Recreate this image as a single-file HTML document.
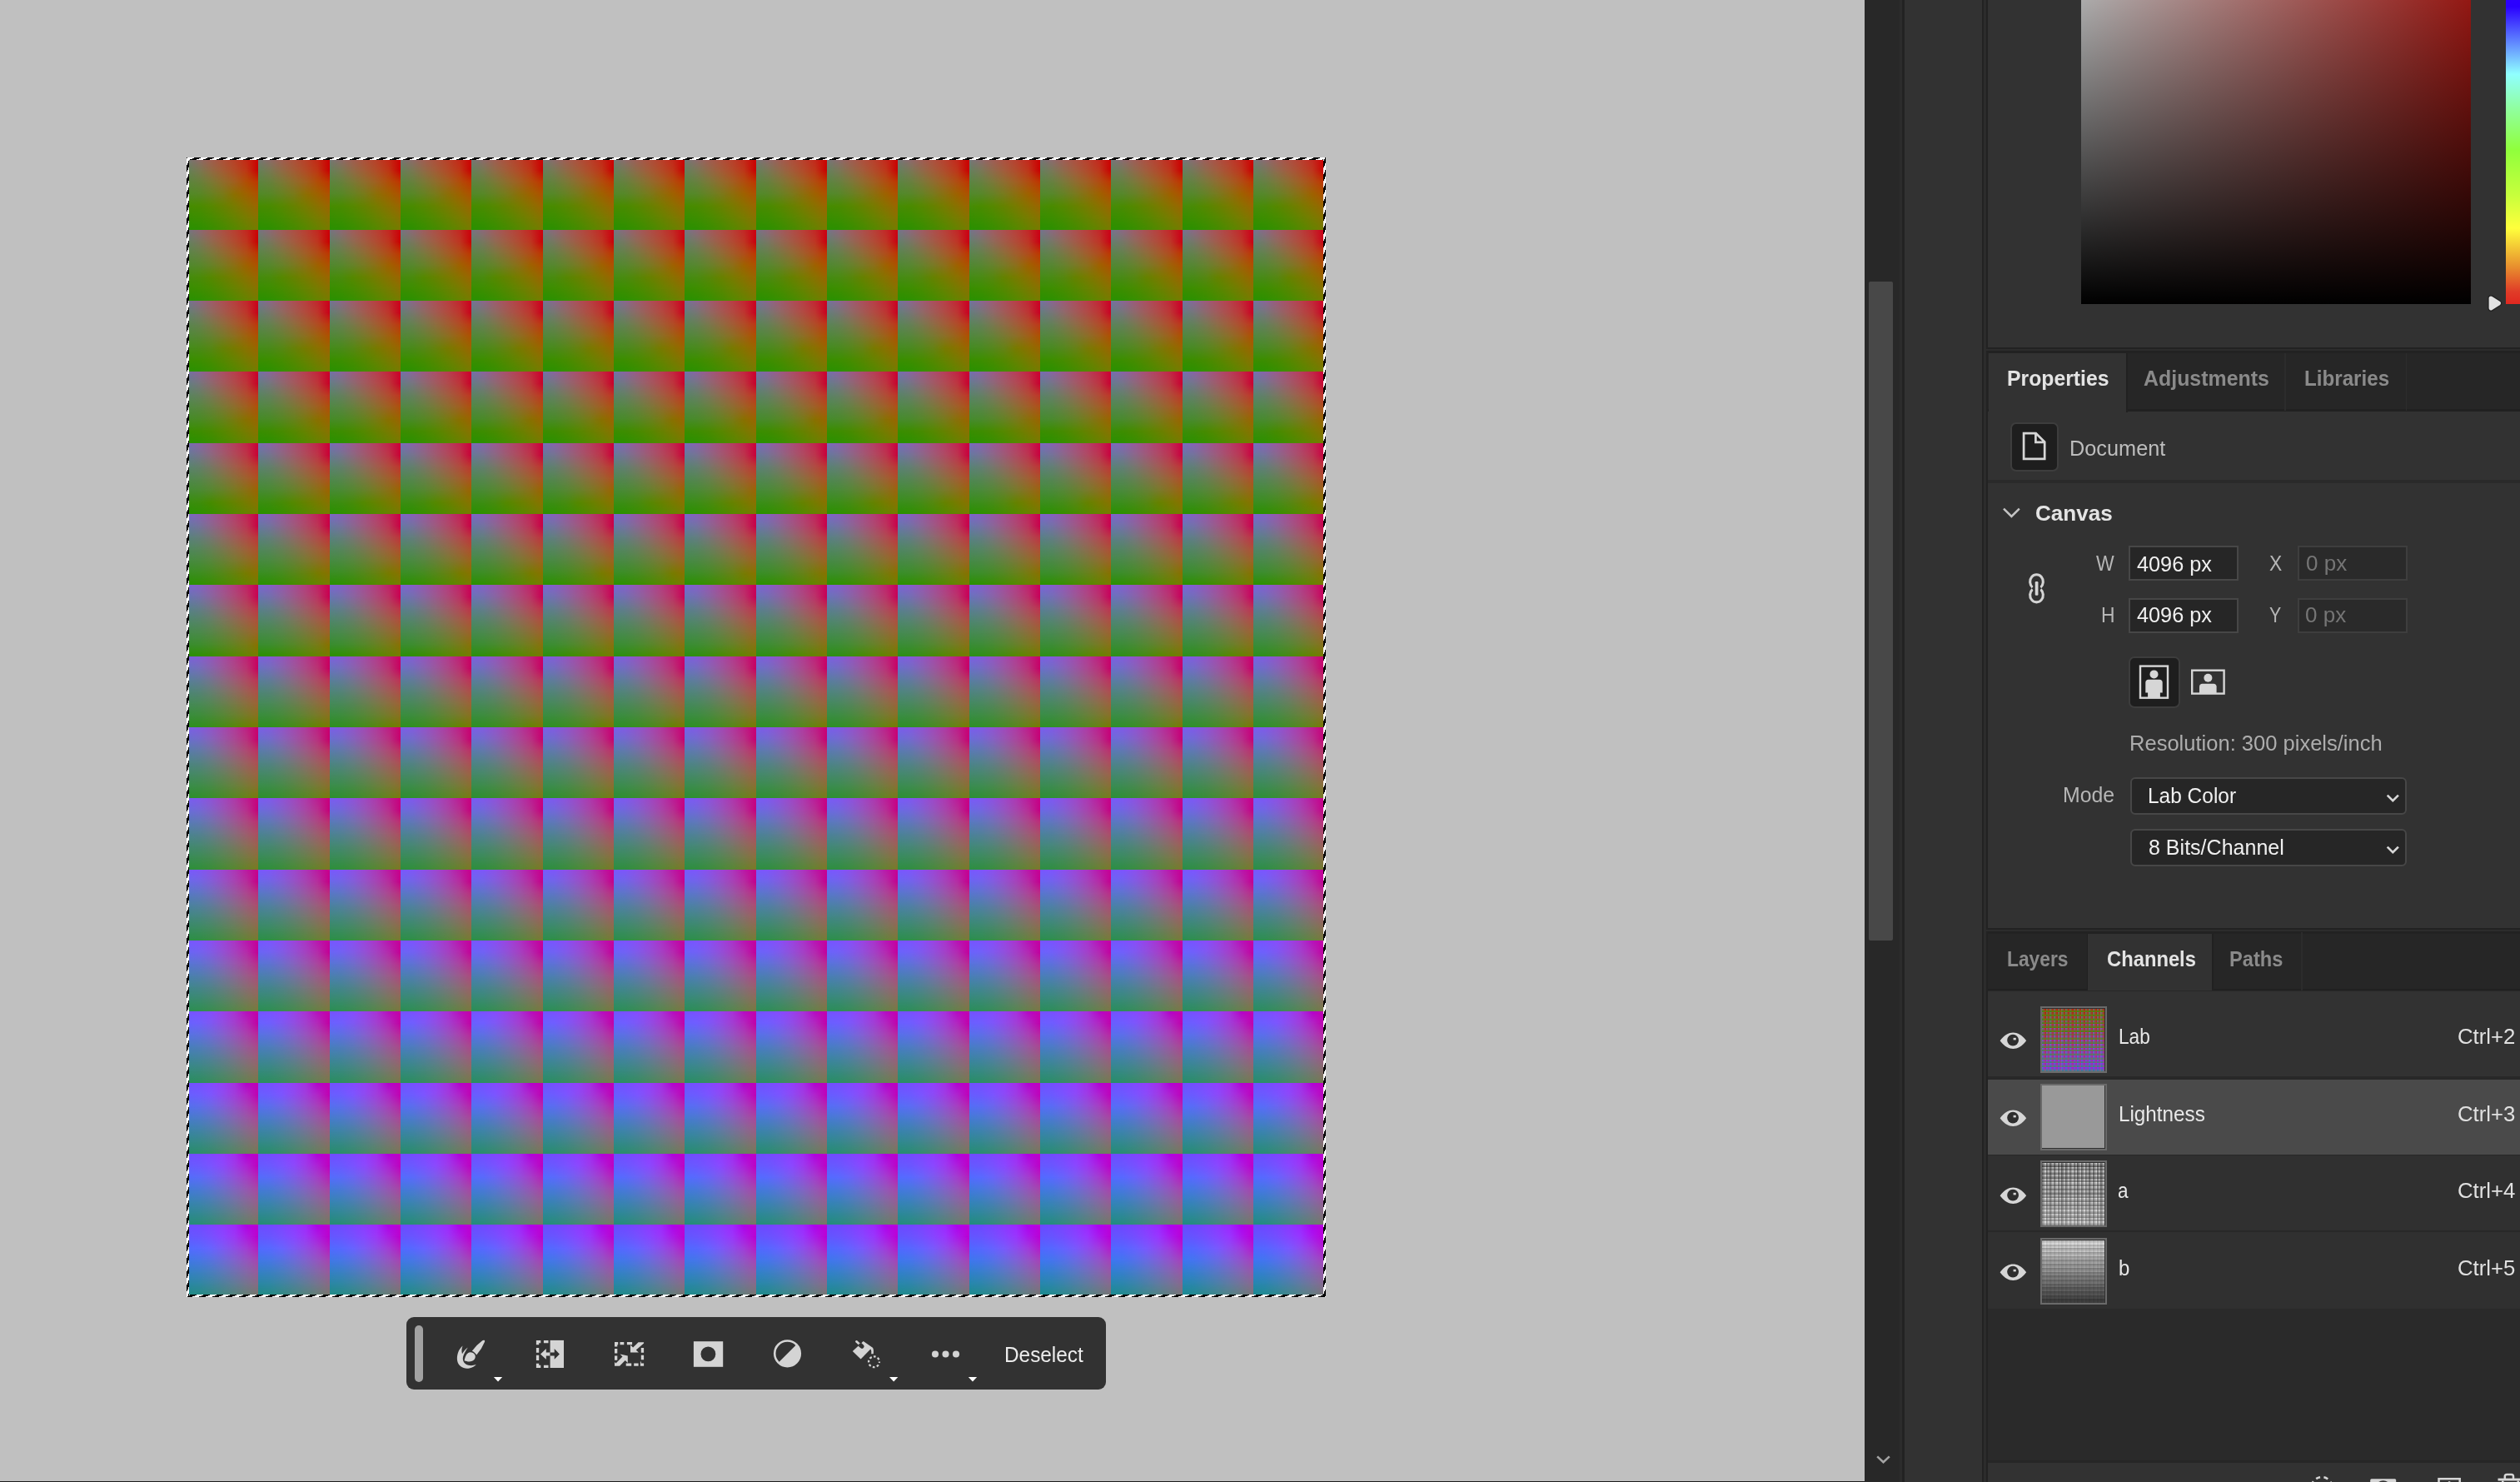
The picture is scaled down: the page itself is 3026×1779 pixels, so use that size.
<!DOCTYPE html>
<html lang="en"><head><meta charset="utf-8"><title>Lab Color - Channels</title>
<style>
html,body{margin:0;padding:0}
body{width:3026px;height:1779px;overflow:hidden;background:#c0c0c0;position:relative;font-family:"Liberation Sans",sans-serif}
div,span,i,svg{position:absolute;box-sizing:border-box}
i{display:block}
.t{white-space:nowrap;line-height:1;transform-origin:0 0}
.b{font-weight:bold}
#img{left:225.3px;top:190.2px;width:1365.33px;height:1365.33px;overflow:hidden}
.tr{left:0;width:1365.33px;height:85.353px}
.tr i{left:0;top:0;width:100%;height:100%}
.m1{-webkit-mask-image:linear-gradient(180deg,transparent 0%,#000 16.67%);mask-image:linear-gradient(180deg,transparent 0%,#000 16.67%)}
.m2{-webkit-mask-image:linear-gradient(180deg,transparent 16.67%,#000 33.33%);mask-image:linear-gradient(180deg,transparent 16.67%,#000 33.33%)}
.m3{-webkit-mask-image:linear-gradient(180deg,transparent 33.33%,#000 50%);mask-image:linear-gradient(180deg,transparent 33.33%,#000 50%)}
.m4{-webkit-mask-image:linear-gradient(180deg,transparent 50%,#000 66.67%);mask-image:linear-gradient(180deg,transparent 50%,#000 66.67%)}
.m5{-webkit-mask-image:linear-gradient(180deg,transparent 66.67%,#000 83.33%);mask-image:linear-gradient(180deg,transparent 66.67%,#000 83.33%)}
.m6{-webkit-mask-image:linear-gradient(180deg,transparent 83.33%,#000 100%);mask-image:linear-gradient(180deg,transparent 83.33%,#000 100%)}
.ant{background-color:#fff}
.ah{left:224px;width:1368.4px;height:3px;background:repeating-linear-gradient(158.2deg,#000 0 1px,#fff 1px 3.97px,#000 3.97px 5.94px)}
.av{top:189px;height:1368px;width:3px;background:repeating-linear-gradient(111.8deg,#000 0 1px,#fff 1px 3.97px,#000 3.97px 5.94px)}
.box{background:#262626;border:2px solid #474747}
.dd{background:#262626;border:2px solid #474747;border-radius:6px}
.row{left:2387px;width:639px;background:#303030}
.th{left:2450px;width:80px;height:80px;border:2px solid #6a6a6a;background:#303030;overflow:hidden}
.th>div{left:0;top:.6px;width:75.2px;height:75.2px}
</style></head><body>

<div id="img">
<div class="tr" style="top:0.00px">
<i class="m0" style="background:linear-gradient(90deg,#767676 0px,#8e696b,#a15c51,#ae4f3b,#b93f28,#c42716,#ce0000 85.33px,#767677 85.33px,#8e696b,#a15c52,#ae4f3c,#b93f29,#c42717,#ce0000 170.67px,#767677 170.67px,#8e696c,#a15c52,#ae4f3c,#b93f29,#c42718,#ce0000 256px,#767678 256px,#8e696c,#a15c53,#ae4f3d,#b93f2a,#c42719,#ce0000 341.33px,#767679 341.33px,#8e696d,#a15c53,#ae4f3d,#b93f2b,#c42719,#ce0000 426.67px,#767679 426.67px,#8e696e,#a15c54,#ae4f3e,#b93f2c,#c4271a,#ce0000 512px,#76767a 512px,#8e696e,#a05c55,#ae4f3f,#b93f2c,#c4271b,#ce0000 597.33px,#76767a 597.33px,#8e696f,#a05c55,#ae4f3f,#b93f2d,#c4271b,#ce0000 682.66px,#76767b 682.66px,#8e696f,#a05c56,#ae4f40,#b93f2e,#c4271c,#ce0000 768px,#76767c 768px,#8e6970,#a05c56,#ae4f40,#b93f2e,#c4271d,#ce0000 853.33px,#76767c 853.33px,#8e6971,#a05c57,#ae4f41,#b93f2f,#c4271d,#ce0000 938.66px,#76767d 938.66px,#8e6971,#a05c58,#ae4f42,#b93f30,#c4271e,#ce0000 1024px,#76767d 1024px,#8e6972,#a05c58,#ae4f42,#b93f30,#c4271f,#ce0000 1109.33px,#76767e 1109.33px,#8e6973,#a05c59,#ad4f43,#b93f31,#c4271f,#ce0000 1194.66px,#75767f 1194.66px,#8d6973,#a05c5a,#ad4f44,#b93f32,#c42720,#ce0000 1280px,#757680 1280px,#8d6974,#a05c5b,#ad4f45,#b93f32,#c42721,#ce0002 1365.33px)"></i>
<i class="m1" style="background:linear-gradient(90deg,#658057 0px,#797851,#916a44,#a35c35,#b24b26,#be3614,#c90000 85.33px,#658058 85.33px,#797852,#916a45,#a35c36,#b24b26,#be3614,#c90000 170.67px,#658059 170.67px,#797852,#916a46,#a35c36,#b24b27,#be3615,#c90000 256px,#658059 256px,#797853,#916a46,#a35c37,#b24b28,#be3616,#c90000 341.33px,#65805a 341.33px,#797854,#916a47,#a35c37,#b24b28,#be3617,#c90000 426.67px,#65805a 426.67px,#797854,#906a47,#a35c38,#b24b29,#be3617,#c90000 512px,#65805b 512px,#797855,#906a48,#a35c39,#b24b29,#be3618,#c90000 597.33px,#65805c 597.33px,#797856,#906a49,#a35c39,#b24b2a,#be3619,#c90000 682.66px,#65805c 682.66px,#797856,#906a49,#a35c3a,#b24b2b,#be3619,#c90000 768px,#65805d 768px,#797857,#906a4a,#a35c3b,#b24b2b,#be361a,#c90000 853.33px,#65805e 853.33px,#797857,#906a4a,#a35c3b,#b14b2c,#be361b,#c90000 938.66px,#65805e 938.66px,#797858,#906a4b,#a35c3c,#b14b2c,#be361b,#c90000 1024px,#65805f 1024px,#797859,#906a4c,#a35c3d,#b14b2d,#be361c,#c90000 1109.33px,#65805f 1109.33px,#787859,#906a4c,#a35c3d,#b14b2d,#be361c,#c90000 1194.66px,#658060 1194.66px,#78775a,#906a4d,#a35c3e,#b14b2e,#be361d,#c90000 1280px,#658061 1280px,#78775b,#906a4e,#a35c3f,#b14b2f,#be361e,#c90000 1365.33px)"></i>
<i class="m2" style="background:linear-gradient(90deg,#5b853c 0px,#66813a,#7a7934,#8f6d2b,#a15f1e,#b14e04,#be3700 85.33px,#5b853d 85.33px,#66813b,#7a7935,#8f6d2b,#a15f1e,#b14e07,#be3700 170.67px,#5b853d 170.67px,#66813b,#7a7935,#8f6d2c,#a15f1f,#b14e09,#be3700 256px,#5b853e 256px,#66813c,#7a7936,#8f6d2c,#a15f1f,#b14e0a,#be3700 341.33px,#5b853f 341.33px,#66813c,#7a7936,#8f6d2d,#a15f20,#b14e0b,#be3700 426.67px,#5b853f 426.67px,#66813d,#7a7937,#8f6d2d,#a15f20,#b14e0c,#be3700 512px,#5b8540 512px,#66813d,#7a7937,#8f6d2e,#a15f21,#b04e0d,#be3700 597.33px,#5b8540 597.33px,#66813e,#7a7938,#8f6d2e,#a15f21,#b04e0e,#be3700 682.66px,#5b8541 682.66px,#66813e,#7a7938,#8f6d2e,#a15f22,#b04e0f,#be3700 768px,#5b8541 768px,#66813f,#7a7939,#8f6d2f,#a15f22,#b04e10,#be3700 853.33px,#5b8542 853.33px,#66813f,#7a7939,#8f6d2f,#a15f23,#b04e11,#be3700 938.66px,#5b8542 938.66px,#668140,#7a793a,#8f6d30,#a15f23,#b04e11,#be3700 1024px,#5b8543 1024px,#668140,#7a793a,#8f6d30,#a15f24,#b04e12,#be3700 1109.33px,#5b8543 1109.33px,#668141,#7a793b,#8f6d31,#a15f24,#b04e13,#be3700 1194.66px,#5b8544 1194.66px,#668141,#7a793b,#8f6d31,#a15f25,#b04e14,#be3700 1280px,#5b8544 1280px,#668142,#7a793c,#8e6d32,#a15f25,#b04e14,#be3700 1365.33px)"></i>
<i class="m3" style="background:linear-gradient(90deg,#518927 0px,#578725,#678221,#797a18,#8d6f00,#9e6200,#ae5100 85.33px,#518927 85.33px,#578726,#678221,#797a19,#8d6f03,#9e6200,#ae5100 170.67px,#518928 170.67px,#578726,#678222,#797a19,#8d6f06,#9e6200,#ae5100 256px,#518928 256px,#578726,#678222,#797a1a,#8c6f08,#9e6200,#ae5100 341.33px,#518928 341.33px,#578727,#678222,#797a1a,#8c6f09,#9e6200,#ae5100 426.67px,#518929 426.67px,#578727,#678223,#797a1b,#8c6f0a,#9e6200,#ae5100 512px,#518929 512px,#578728,#678223,#797a1b,#8c6f0b,#9e6200,#ae5100 597.33px,#518929 597.33px,#578728,#678224,#797a1c,#8c6f0c,#9e6200,#ae5100 682.66px,#51892a 682.66px,#578728,#678224,#797a1c,#8c6f0d,#9e6200,#ae5100 768px,#51892a 768px,#578729,#668224,#797a1c,#8c6f0e,#9e6200,#ae5100 853.33px,#51892a 853.33px,#578729,#668225,#797a1d,#8c6f0f,#9e6200,#ae5100 938.66px,#51892b 938.66px,#578729,#668225,#797a1d,#8c6f0f,#9e6200,#ae5100 1024px,#51892b 1024px,#57872a,#668225,#797a1e,#8c6f10,#9e6200,#ae5100 1109.33px,#50892c 1109.33px,#57872a,#668226,#797a1e,#8c6f11,#9e6200,#ae5100 1194.66px,#50892c 1194.66px,#57872b,#668226,#797a1f,#8c6f11,#9e6200,#ae5100 1280px,#50892c 1280px,#57872b,#668227,#797a1f,#8c6f12,#9e6200,#ae5100 1365.33px)"></i>
<i class="m4" style="background:linear-gradient(90deg,#458c00 0px,#4a8b00,#568800,#668200,#787b00,#8a7100,#9b6500 85.33px,#458c00 85.33px,#4a8b00,#568800,#668200,#787b00,#8a7100,#9b6500 170.67px,#458c00 170.67px,#4a8b00,#568800,#668200,#787b00,#8a7100,#9b6500 256px,#458c00 256px,#4a8b00,#568800,#668200,#787b00,#8a7100,#9b6500 341.33px,#458c00 341.33px,#4a8b00,#568800,#668200,#787b00,#8a7100,#9b6500 426.67px,#458c00 426.67px,#4a8b00,#568800,#668200,#787b00,#8a7100,#9b6500 512px,#458c00 512px,#4a8b00,#568800,#668200,#787b00,#8a7100,#9b6500 597.33px,#458c00 597.33px,#4a8b00,#568800,#668200,#787b00,#8a7100,#9b6500 682.66px,#458c00 682.66px,#4a8b00,#568800,#668200,#787b00,#8a7100,#9b6500 768px,#458c02 768px,#4a8b00,#568800,#668200,#787b00,#8a7100,#9b6500 853.33px,#458c05 853.33px,#4a8b00,#568800,#668200,#787b00,#8a7100,#9b6500 938.66px,#458c07 938.66px,#4a8b00,#568800,#668200,#787b00,#8a7100,#9b6500 1024px,#458c08 1024px,#4a8b00,#568800,#668200,#787b00,#8a7100,#9b6500 1109.33px,#458c09 1109.33px,#4a8b03,#568800,#668200,#787b00,#8a7100,#9b6500 1194.66px,#458c0b 1194.66px,#4a8b06,#568800,#668200,#787b00,#8a7100,#9b6500 1280px,#458c0c 1280px,#4a8b08,#568800,#668200,#787b00,#8a7100,#9b6500 1365.33px)"></i>
<i class="m5" style="background:linear-gradient(90deg,#388e00 0px,#3c8e00,#478c00,#580,#668300,#777c00,#887200 85.33px,#388e00 85.33px,#3c8e00,#478c00,#580,#668300,#777c00,#887200 170.67px,#388e00 170.67px,#3c8e00,#478c00,#580,#668300,#777c00,#887200 256px,#388e00 256px,#3c8e00,#478c00,#580,#668300,#777c00,#887200 341.33px,#388e00 341.33px,#3c8e00,#478c00,#580,#668300,#777c00,#887200 426.67px,#388e00 426.67px,#3c8e00,#478c00,#580,#668300,#777c00,#887200 512px,#388e00 512px,#3c8e00,#478c00,#580,#668300,#777c00,#887200 597.33px,#388e00 597.33px,#3c8e00,#478c00,#580,#668300,#777c00,#887200 682.66px,#388e00 682.66px,#3c8e00,#478c00,#580,#668300,#777c00,#887200 768px,#388e00 768px,#3c8e00,#478c00,#580,#668300,#777c00,#887200 853.33px,#388e00 853.33px,#3c8e00,#478c00,#580,#668300,#777c00,#887200 938.66px,#388e00 938.66px,#3c8e00,#478c00,#580,#668300,#777c00,#887200 1024px,#388e00 1024px,#3c8e00,#478c00,#580,#668300,#777c00,#887200 1109.33px,#388e00 1109.33px,#3c8e00,#478c00,#580,#668300,#777c00,#887200 1194.66px,#388e00 1194.66px,#3d8e00,#478c00,#580,#668300,#777c00,#887200 1280px,#388e00 1280px,#3d8e00,#478c00,#580,#668300,#777c00,#887200 1365.33px)"></i>
<i class="m6" style="background:linear-gradient(90deg,#289100 0px,#2d9000,#378f00,#448c00,#548900,#658300,#767c00 85.33px,#289100 85.33px,#2d9000,#378f00,#448c00,#548900,#658300,#767c00 170.67px,#289100 170.67px,#2d9000,#378f00,#448c00,#548900,#658300,#767c00 256px,#289100 256px,#2d9000,#378f00,#448c00,#548900,#658300,#767c00 341.33px,#289100 341.33px,#2d9000,#378f00,#448c00,#548900,#658300,#767c00 426.67px,#289100 426.67px,#2d9000,#378f00,#448c00,#548900,#658300,#767c00 512px,#289100 512px,#2d9000,#378f00,#448c00,#548900,#658300,#767c00 597.33px,#289100 597.33px,#2d9000,#378f00,#448c00,#548900,#658300,#767c00 682.66px,#289100 682.66px,#2d9000,#378f00,#448c00,#548900,#658300,#767c00 768px,#289100 768px,#2d9000,#378f00,#448c00,#548900,#658300,#767c00 853.33px,#289100 853.33px,#2d9000,#378f00,#448c00,#548900,#658300,#767c00 938.66px,#289100 938.66px,#2d9000,#378f00,#448c00,#548900,#658300,#767c00 1024px,#289100 1024px,#2d9000,#378f00,#448c00,#548900,#658300,#767c00 1109.33px,#299100 1109.33px,#2d9000,#378f00,#448c00,#548900,#658300,#767c00 1194.66px,#299100 1194.66px,#2d9000,#378f00,#448c00,#548900,#658300,#767c00 1280px,#299100 1280px,#2d9000,#378f00,#448c00,#548900,#658300,#767c00 1365.33px)"></i>
</div>
<div class="tr" style="top:85.33px">
<i class="m0" style="background:linear-gradient(90deg,#757581 0px,#8d6875,#a05c5b,#ad4f45,#b93f33,#c42721,#ce0007 85.33px,#757581 85.33px,#8d6876,#a05c5c,#ad4f46,#b93f34,#c42722,#cd0009 170.67px,#757582 170.67px,#8d6877,#a05c5d,#ad4f47,#b93f35,#c42723,#cd000b 256px,#757583 256px,#8d6877,#a05c5e,#ad4f48,#b93f35,#c42723,#cd000c 341.33px,#757584 341.33px,#8d6878,#a05c5f,#ad4f49,#b93f36,#c42724,#cd000e 426.67px,#757585 426.67px,#8d6879,#9f5c60,#ad4f4a,#b93f37,#c42725,#cd000f 512px,#757586 512px,#8d687a,#9f5c61,#ad4f4b,#b93f38,#c32726,#cd0010 597.33px,#757587 597.33px,#8d687c,#9f5c62,#ad4f4c,#b93f39,#c32727,#cd0011 682.66px,#757588 682.66px,#8d687d,#9f5c63,#ad4f4d,#b93f39,#c32727,#cd0013 768px,#74758a 768px,#8d687e,#9f5c64,#ad4f4e,#b93f3a,#c32728,#cd0014 853.33px,#74758b 853.33px,#8c687f,#9f5c65,#ad4f4f,#b93f3b,#c32729,#cd0015 938.66px,#74758c 938.66px,#8c6880,#9f5c66,#ad4f50,#b93f3c,#c3272a,#cd0016 1024px,#74758d 1024px,#8c6881,#9f5c68,#ad4f51,#b93f3d,#c3272b,#cd0017 1109.33px,#74758f 1109.33px,#8c6883,#9e5c69,#ac4f52,#b93f3e,#c3272b,#cd0018 1194.66px,#747490 1194.66px,#8c6884,#9e5c6a,#ac4f53,#b83f3f,#c3272c,#cd0019 1280px,#747491 1280px,#8c6885,#9e5c6b,#ac4f54,#b83f3f,#c3262d,#cd001a 1365.33px)"></i>
<i class="m1" style="background:linear-gradient(90deg,#658062 0px,#78775c,#906a4f,#a35c3f,#b14b2f,#be361e,#c90000 85.33px,#648063 85.33px,#78775d,#906a50,#a35c40,#b14b30,#be361f,#c90000 170.67px,#647f64 170.67px,#78775d,#906a51,#a25c41,#b14b31,#be3620,#c90000 256px,#647f65 256px,#78775e,#906a51,#a25c42,#b14b31,#be3621,#c90004 341.33px,#647f65 341.33px,#78775f,#906a52,#a25c42,#b14b32,#be3621,#c90007 426.67px,#647f66 426.67px,#787760,#906a53,#a25b43,#b14b33,#be3622,#c9000a 512px,#647f67 512px,#787761,#906a54,#a25b44,#b14b34,#be3623,#c9000b 597.33px,#647f68 597.33px,#787762,#8f6a55,#a25b45,#b14b34,#be3623,#c9000d 682.66px,#647f6a 682.66px,#787763,#8f6a56,#a25b46,#b14b35,#be3624,#c9000e 768px,#647f6b 768px,#787764,#8f6a57,#a25b47,#b14b36,#be3625,#c90010 853.33px,#647f6c 853.33px,#777765,#8f6a58,#a25b47,#b14b37,#be3626,#c90011 938.66px,#647f6d 938.66px,#776,#8f6a59,#a25b48,#b14b38,#be3627,#c90012 1024px,#647f6e 1024px,#777767,#8f6a5a,#a25b49,#b14b38,#be3627,#c90013 1109.33px,#647f6f 1109.33px,#777768,#8f6a5b,#a25b4a,#b14b39,#be3628,#c90014 1194.66px,#647f70 1194.66px,#777769,#8f6a5c,#a25b4b,#b14b3a,#be3629,#c90015 1280px,#647f71 1280px,#77776a,#8f6a5d,#a25b4c,#b14b3b,#be362a,#c90016 1365.33px)"></i>
<i class="m2" style="background:linear-gradient(90deg,#5b8545 0px,#668143,#7a793c,#8e6d32,#a15f26,#b04e15,#be3700 85.33px,#5b8546 85.33px,#668143,#7a793d,#8e6d33,#a15f26,#b04d16,#be3700 170.67px,#5b8546 170.67px,#668144,#7a793d,#8e6d34,#a15e27,#b04d17,#be3700 256px,#5b8547 256px,#668144,#7a793e,#8e6d34,#a15e27,#b04d17,#be3700 341.33px,#5b8547 341.33px,#658145,#7a793f,#8e6d35,#a15e28,#b04d18,#be3700 426.67px,#5b8548 426.67px,#658146,#79793f,#8e6d35,#a15e29,#b04d19,#be3700 512px,#5b8549 512px,#658146,#797940,#8e6d36,#a15e29,#b04d1a,#be3700 597.33px,#5b844a 597.33px,#658147,#797941,#8e6d37,#a15e2a,#b04d1a,#be3700 682.66px,#5b844a 682.66px,#658148,#797841,#8e6d37,#a15e2b,#b04d1b,#be3700 768px,#5a844b 768px,#658149,#797842,#8e6d38,#a15e2b,#b04d1c,#be3700 853.33px,#5a844c 853.33px,#658149,#797843,#8e6d39,#a15e2c,#b04d1d,#be3700 938.66px,#5a844d 938.66px,#65814a,#797843,#8e6d39,#a15e2d,#b04d1d,#be3700 1024px,#5a844d 1024px,#65814b,#797844,#8e6d3a,#a15e2d,#b04d1e,#be3700 1109.33px,#5a844e 1109.33px,#65814c,#797845,#8e6d3b,#a15e2e,#b04d1f,#be3700 1194.66px,#5a844f 1194.66px,#65814c,#797846,#8e6d3c,#a15e2f,#b04d20,#be3705 1280px,#5a8450 1280px,#65814d,#797846,#8e6d3c,#a15e30,#b04d21,#be3708 1365.33px)"></i>
<i class="m3" style="background:linear-gradient(90deg,#50882d 0px,#57872b,#668227,#797a20,#8c6f13,#9e6200,#ae5100 85.33px,#50882d 85.33px,#57872c,#668228,#797a20,#8c6f14,#9e6200,#ae5100 170.67px,#50882e 170.67px,#57872c,#668228,#797a21,#8c6f14,#9e6200,#ae5100 256px,#50882e 256px,#57872d,#668229,#797a21,#8c6f15,#9e6200,#ae5100 341.33px,#50882f 341.33px,#57872d,#668229,#797a22,#8c6f16,#9e6200,#ae5100 426.67px,#50882f 426.67px,#57872e,#66822a,#797a22,#8c6f16,#9e6200,#ae5100 512px,#508830 512px,#57872e,#66822a,#797a23,#8c6f17,#9e6200,#ae5100 597.33px,#508830 597.33px,#57872f,#66822b,#797a23,#8c6f18,#9e6200,#ae5100 682.66px,#508831 682.66px,#57872f,#66822b,#797a24,#8c6f19,#9e6200,#ae5100 768px,#508831 768px,#578730,#66822c,#797a25,#8c6f19,#9e6200,#ae5100 853.33px,#508832 853.33px,#578731,#66822c,#797a25,#8c6f1a,#9e6200,#ae5100 938.66px,#508833 938.66px,#578631,#66822d,#797a26,#8c6f1b,#9e6200,#ae5100 1024px,#508833 1024px,#578632,#66822e,#797a26,#8c6f1c,#9e6200,#ae5100 1109.33px,#508834 1109.33px,#578632,#66822e,#797a27,#8c6f1c,#9e6207,#ae5100 1194.66px,#508834 1194.66px,#578633,#66822f,#797928,#8c6f1d,#9e6209,#ae5100 1280px,#508835 1280px,#578634,#668230,#797928,#8c6f1e,#9e620b,#ae5100 1365.33px)"></i>
<i class="m4" style="background:linear-gradient(90deg,#458c0d 0px,#4a8b09,#568800,#668200,#787b00,#8a7100,#9b6500 85.33px,#458c0e 85.33px,#4a8b0b,#568800,#668200,#787b00,#8a7100,#9b6500 170.67px,#458c0e 170.67px,#4a8b0c,#568800,#668200,#787b00,#8a7100,#9b6500 256px,#458c0f 256px,#4a8b0d,#568800,#668200,#787b00,#8a7100,#9b6500 341.33px,#458c10 341.33px,#4a8b0e,#568800,#668200,#787b00,#8a7100,#9b6400 426.67px,#458c11 426.67px,#4a8b0f,#568703,#668200,#787b00,#8a7100,#9b6400 512px,#458c12 512px,#4a8b10,#568707,#668200,#787b00,#8a7100,#9b6400 597.33px,#458c13 597.33px,#4a8b11,#568709,#668200,#787b00,#8a7100,#9b6400 682.66px,#458c13 682.66px,#4a8b12,#56870a,#668200,#787b00,#8a7100,#9b6400 768px,#458c14 768px,#4a8b12,#56870c,#668200,#787b00,#8a7100,#9b6400 853.33px,#458c15 853.33px,#4a8b13,#56870d,#668200,#787b00,#8a7100,#9b6400 938.66px,#458c16 938.66px,#4a8b14,#56870e,#668200,#787b00,#8a7100,#9b6400 1024px,#458c17 1024px,#4a8b15,#56870f,#668200,#787b00,#8a7100,#9b6400 1109.33px,#458c17 1109.33px,#4a8a16,#568711,#668200,#787b00,#8a7100,#9b6400 1194.66px,#458c18 1194.66px,#4a8a17,#568712,#668200,#787a00,#8a7100,#9b6400 1280px,#458c19 1280px,#4a8a17,#568713,#668200,#787a00,#8a7100,#9b6400 1365.33px)"></i>
<i class="m5" style="background:linear-gradient(90deg,#388e00 0px,#3d8e00,#478c00,#580,#668300,#777c00,#887200 85.33px,#388e00 85.33px,#3d8e00,#478c00,#580,#668300,#777c00,#887200 170.67px,#388e00 170.67px,#3d8e00,#478c00,#580,#668300,#777c00,#887200 256px,#388e00 256px,#3d8e00,#478c00,#580,#668300,#777c00,#887200 341.33px,#388e00 341.33px,#3d8e00,#478c00,#580,#668300,#777c00,#887200 426.67px,#388e00 426.67px,#3d8e00,#478c00,#580,#668300,#777c00,#887200 512px,#388e00 512px,#3d8e00,#478c00,#580,#668300,#777c00,#887200 597.33px,#388e00 597.33px,#3d8e00,#478c00,#580,#668300,#777b00,#887200 682.66px,#388e00 682.66px,#3d8e00,#478c00,#580,#668300,#777b00,#887200 768px,#388e00 768px,#3d8e00,#478c00,#580,#668300,#777b00,#887200 853.33px,#388e00 853.33px,#3d8e00,#478c00,#580,#668300,#777b00,#887200 938.66px,#388e00 938.66px,#3d8e00,#478c00,#580,#668300,#777b00,#887200 1024px,#388e00 1024px,#3d8e00,#478c00,#580,#668300,#777b00,#887200 1109.33px,#388e00 1109.33px,#3d8e00,#478c00,#580,#668300,#777b00,#887200 1194.66px,#388e00 1194.66px,#3d8e00,#478c00,#580,#668300,#777b00,#887200 1280px,#398e00 1280px,#3d8e00,#478c00,#580,#668300,#777b00,#887200 1365.33px)"></i>
<i class="m6" style="background:linear-gradient(90deg,#299100 0px,#2d9000,#378f00,#448c00,#548900,#658300,#767c00 85.33px,#299100 85.33px,#2d9000,#378f00,#448c00,#548900,#658300,#767c00 170.67px,#299100 170.67px,#2d9000,#378f00,#448c00,#548900,#658300,#767c00 256px,#299100 256px,#2d9000,#378f00,#448c00,#548900,#658300,#767c00 341.33px,#299100 341.33px,#2d9000,#378f00,#448c00,#548900,#658300,#767c00 426.67px,#299100 426.67px,#2d9000,#378f00,#448c00,#548900,#658300,#767c00 512px,#299100 512px,#2d9000,#378f00,#448c00,#548900,#658300,#767c00 597.33px,#299100 597.33px,#2d9000,#378f00,#448c00,#548900,#658300,#767c00 682.66px,#299100 682.66px,#2d9000,#378f00,#448c00,#548900,#658300,#767c00 768px,#299100 768px,#2d9000,#378f00,#448c00,#548900,#658300,#767c00 853.33px,#299100 853.33px,#2d9000,#378f00,#458c00,#548900,#658300,#767c00 938.66px,#299100 938.66px,#2d9000,#378f00,#458c00,#548900,#658300,#767c00 1024px,#299100 1024px,#2d9000,#378f00,#458c00,#548900,#658300,#767c00 1109.33px,#299100 1109.33px,#2d9000,#378f00,#458c00,#548900,#658300,#767c00 1194.66px,#299100 1194.66px,#2d9000,#378f00,#458c00,#548900,#658300,#767c00 1280px,#299100 1280px,#2d9000,#378f00,#458c00,#548900,#658300,#767c00 1365.33px)"></i>
</div>
<div class="tr" style="top:170.67px">
<i class="m0" style="background:linear-gradient(90deg,#737492 0px,#8c6786,#9e5c6c,#ac4f55,#b83f40,#c3262e,#cd001b 85.33px,#737493 85.33px,#8c6787,#9e5c6d,#ac4f56,#b83f41,#c3262f,#cd001c 170.67px,#737495 170.67px,#8c6788,#9e5c6e,#ac4f57,#b83f42,#c32630,#cd001d 256px,#737496 256px,#8b6789,#9e5c6f,#ac4f58,#b83f43,#c32630,#cd001e 341.33px,#737497 341.33px,#8b678b,#9e5c70,#ac4f59,#b83f44,#c32631,#cd001e 426.67px,#737498 426.67px,#8b678c,#9d5c71,#ac4f5a,#b83f45,#c32632,#cd001f 512px,#737499 512px,#8b678d,#9d5c72,#ac4f5b,#b83f46,#c32633,#cd0020 597.33px,#73739a 597.33px,#8b678e,#9d5c74,#ac4f5c,#b83f47,#c32634,#cd0021 682.66px,#73739c 682.66px,#8b678f,#9d5c75,#ac4f5d,#b83f48,#c32635,#cd0022 768px,#73739d 768px,#8b6790,#9d5c76,#ab4f5e,#b83f49,#c32636,#cd0023 853.33px,#73739e 853.33px,#8b6791,#9d5c77,#ab4f5f,#b83f4a,#c32636,#cd0024 938.66px,#73739f 938.66px,#8b6692,#9d5c78,#ab4f60,#b83f4a,#c32637,#cd0025 1024px,#7373a0 1024px,#8b6693,#9d5b79,#ab4f61,#b83f4b,#c32638,#cd0026 1109.33px,#7372a1 1109.33px,#8a6695,#9c5b7a,#ab4f62,#b83f4c,#c32639,#cd0027 1194.66px,#7372a2 1194.66px,#8a6696,#9c5b7b,#ab4f63,#b83f4d,#c3263a,#cd0027 1280px,#7372a3 1280px,#8a6697,#9c5b7c,#ab4f64,#b83f4e,#c3263b,#cd0028 1365.33px)"></i>
<i class="m1" style="background:linear-gradient(90deg,#647f72 0px,#77776b,#8f6a5e,#a25b4d,#b14b3c,#be362a,#c90017 85.33px,#647e73 85.33px,#77776c,#8f6a5f,#a25b4e,#b14b3c,#be362b,#c90018 170.67px,#647e74 170.67px,#77776d,#8f6a60,#a25b4f,#b14b3d,#be362c,#c90019 256px,#647e75 256px,#77776e,#8e6a61,#a25b50,#b14b3e,#be362d,#c9001a 341.33px,#647e76 341.33px,#77776f,#8e6a62,#a15b50,#b14b3f,#be362e,#c9001b 426.67px,#647e77 426.67px,#777770,#8e6a63,#a15b51,#b14b40,#be362f,#c9001c 512px,#647e78 512px,#777672,#8e6a64,#a15b52,#b14b41,#be362f,#c9001d 597.33px,#647e79 597.33px,#767673,#8e6a65,#a15b53,#b14b42,#be3630,#c9001e 682.66px,#647e7a 682.66px,#767674,#8e6a66,#a15b54,#b14b42,#be3631,#c9001f 768px,#647e7b 768px,#767675,#8e6a67,#a15b55,#b14b43,#bd3632,#c90020 853.33px,#647e7c 853.33px,#767676,#8e6a68,#a15b56,#b04b44,#bd3633,#c90021 938.66px,#647d7d 938.66px,#767677,#8e6a69,#a15b57,#b04b45,#bd3634,#c90022 1024px,#647d7e 1024px,#767678,#8e6a6a,#a15b58,#b04b46,#bd3634,#c90023 1109.33px,#647d7f 1109.33px,#767679,#8e696b,#a15b59,#b04b47,#bd3635,#c90024 1194.66px,#647d80 1194.66px,#76767a,#8d696c,#a15b5a,#b04b48,#bd3636,#c90024 1280px,#647d81 1280px,#76767b,#8d696d,#a15b5b,#b04b49,#bd3637,#c90025 1365.33px)"></i>
<i class="m2" style="background:linear-gradient(90deg,#5a8450 0px,#65814e,#797847,#8e6d3d,#a15e30,#b04d21,#be370b 85.33px,#5a8451 85.33px,#65814f,#797848,#8e6d3e,#a05e31,#b04d22,#be370d 170.67px,#5a8452 170.67px,#65814f,#797849,#8e6d3f,#a05e32,#b04d23,#be370e 256px,#5a8453 256px,#658150,#79784a,#8e6d3f,#a05e32,#b04d24,#be3710 341.33px,#5a8454 341.33px,#658151,#79784a,#8e6c40,#a05e33,#b04d25,#be3711 426.67px,#5a8455 426.67px,#658152,#79784b,#8e6c41,#a05e34,#b04d25,#be3712 512px,#5a8455 512px,#658153,#79784c,#8e6c42,#a05e35,#b04d26,#be3713 597.33px,#5a8456 597.33px,#658054,#79784d,#8e6c42,#a05e36,#b04d27,#be3715 682.66px,#5a8457 682.66px,#658055,#79784e,#8e6c43,#a05e36,#b04d28,#be3716 768px,#5a8458 768px,#658055,#79784f,#8e6c44,#a05e37,#b04d29,#be3717 853.33px,#5a8459 853.33px,#658056,#79784f,#8e6c45,#a05e38,#b04d29,#be3718 938.66px,#5a845a 938.66px,#648057,#797850,#8e6c46,#a05e39,#b04d2a,#be3719 1024px,#5a845b 1024px,#648058,#797851,#8e6c47,#a05e3a,#b04d2b,#be361a 1109.33px,#5a845c 1109.33px,#648059,#787852,#8e6c47,#a05e3a,#b04d2c,#be361b 1194.66px,#5a845c 1194.66px,#64805a,#787853,#8e6c48,#a05e3b,#b04d2d,#be361c 1280px,#5a845d 1280px,#64805b,#787854,#8d6c49,#a05e3c,#b04d2d,#be361d 1365.33px)"></i>
<i class="m3" style="background:linear-gradient(90deg,#508836 0px,#578634,#668130,#797929,#8c6f1f,#9e620d,#ae5100 85.33px,#508836 85.33px,#578635,#668131,#79792a,#8c6f1f,#9e620e,#ae5100 170.67px,#508837 170.67px,#578636,#668131,#79792a,#8c6f20,#9e6210,#ae5100 256px,#508838 256px,#578636,#668132,#79792b,#8c6f21,#9e6211,#ae5100 341.33px,#508838 341.33px,#578637,#668133,#79792c,#8c6f22,#9e6112,#ae5100 426.67px,#508839 426.67px,#578638,#668133,#79792c,#8c6f22,#9e6113,#ae5100 512px,#50883a 512px,#578638,#668134,#79792d,#8c6f23,#9e6114,#ae5100 597.33px,#50883a 597.33px,#578639,#668135,#79792e,#8c6f24,#9e6115,#ae5100 682.66px,#50883b 682.66px,#57863a,#668136,#79792f,#8c6f25,#9e6116,#ae5100 768px,#50883c 768px,#57863a,#668136,#79792f,#8c6f25,#9e6117,#ae5100 853.33px,#50883d 853.33px,#57863b,#668137,#797930,#8c6f26,#9e6118,#ae5100 938.66px,#50883d 938.66px,#57863c,#668138,#797931,#8c6f27,#9e6119,#ae5100 1024px,#50883e 1024px,#57863c,#668138,#797931,#8c6f28,#9e611a,#ae5100 1109.33px,#50883f 1109.33px,#57863d,#668139,#797932,#8c6f28,#9e611b,#ae5100 1194.66px,#50883f 1194.66px,#57863e,#66813a,#797933,#8c6f29,#9e611c,#ae5100 1280px,#508840 1280px,#57863f,#66813b,#797934,#8c6f2a,#9e611d,#ae5100 1365.33px)"></i>
<i class="m4" style="background:linear-gradient(90deg,#458c1a 0px,#4a8a18,#568714,#668205,#787a00,#8a7100,#9b6400 85.33px,#458c1a 85.33px,#4a8a19,#568714,#668208,#787a00,#8a7100,#9b6400 170.67px,#458c1b 170.67px,#4a8a1a,#568715,#66820a,#787a00,#8a7100,#9b6400 256px,#458c1c 256px,#4a8a1a,#568716,#66820c,#787a00,#8a7100,#9b6400 341.33px,#458c1d 341.33px,#4a8a1b,#568717,#66820e,#787a00,#8a7100,#9b6400 426.67px,#458c1d 426.67px,#4a8a1c,#568718,#66820f,#787a00,#8a7100,#9b6400 512px,#458c1e 512px,#4a8a1d,#568719,#668210,#787a00,#8a7100,#9b6400 597.33px,#458b1f 597.33px,#4a8a1e,#56871a,#668212,#787a00,#8a7100,#9b6400 682.66px,#458b20 682.66px,#4a8a1e,#56871b,#668213,#797a00,#8a7100,#9b6400 768px,#458b20 768px,#4a8a1f,#56871b,#668214,#797a00,#8a7100,#9b6400 853.33px,#458b21 853.33px,#4a8a20,#56871c,#668215,#797a00,#8a7100,#9b6400 938.66px,#458b22 938.66px,#4a8a21,#56871d,#668216,#797a00,#8a7100,#9b6400 1024px,#458b23 1024px,#4a8a21,#56871e,#668217,#797a05,#8a7100,#9b6400 1109.33px,#458b23 1109.33px,#4a8a22,#56871f,#668218,#797a09,#8a7000,#9b6400 1194.66px,#458b24 1194.66px,#4a8a23,#568720,#668219,#797a0b,#8a7000,#9b6400 1280px,#458b25 1280px,#4a8a24,#568720,#66821a,#797a0d,#8a7000,#9b6400 1365.33px)"></i>
<i class="m5" style="background:linear-gradient(90deg,#398e00 0px,#3d8e00,#478c00,#580,#668300,#777b00,#887200 85.33px,#398e00 85.33px,#3d8e00,#478c00,#580,#668300,#777b00,#887200 170.67px,#398e00 170.67px,#3d8e00,#478c00,#580,#668300,#777b00,#887200 256px,#398e00 256px,#3d8e00,#478c00,#580,#668300,#777b00,#887200 341.33px,#398e00 341.33px,#3d8e00,#478c00,#580,#668300,#777b00,#887200 426.67px,#398e00 426.67px,#3d8e00,#478c00,#580,#668300,#777b00,#887200 512px,#398e00 512px,#3d8e00,#478c00,#580,#668300,#777b00,#887200 597.33px,#398e00 597.33px,#3d8e00,#478c00,#580,#668300,#777b00,#887200 682.66px,#398e00 682.66px,#3d8e00,#478c00,#580,#668300,#777b00,#887200 768px,#398e00 768px,#3d8e00,#478c00,#580,#668300,#777b00,#887200 853.33px,#398e00 853.33px,#3d8e00,#478c00,#580,#668300,#777b00,#887200 938.66px,#398e00 938.66px,#3d8e00,#478c00,#580,#668300,#777b00,#887200 1024px,#398e00 1024px,#3d8e00,#478c00,#580,#668300,#777b00,#887200 1109.33px,#398e00 1109.33px,#3d8e00,#478c00,#580,#668300,#777b00,#887200 1194.66px,#398e00 1194.66px,#3d8d00,#478b00,#580,#668300,#777b00,#887200 1280px,#398e00 1280px,#3d8d00,#478b00,#580,#668300,#777b00,#887200 1365.33px)"></i>
<i class="m6" style="background:linear-gradient(90deg,#299100 0px,#2d9000,#378f00,#458c00,#548800,#658300,#767c00 85.33px,#299100 85.33px,#2d9000,#378f00,#458c00,#548800,#658300,#767c00 170.67px,#299100 170.67px,#2d9000,#378f00,#458c00,#548800,#658300,#767c00 256px,#299100 256px,#2d9000,#378f00,#458c00,#548800,#658300,#767c00 341.33px,#299100 341.33px,#2d9000,#378f00,#458c00,#548800,#658300,#767c00 426.67px,#299100 426.67px,#2d9000,#378f00,#458c00,#548800,#658300,#767c00 512px,#299100 512px,#2d9000,#378f00,#458c00,#548800,#658300,#767c00 597.33px,#299100 597.33px,#2d9000,#378f00,#458c00,#548800,#658300,#767c00 682.66px,#299100 682.66px,#2d9000,#378f00,#458c00,#548800,#658300,#767c00 768px,#299100 768px,#2d9000,#378f00,#458c00,#548800,#658300,#767c00 853.33px,#299100 853.33px,#2d9000,#378f00,#458c00,#548800,#658300,#767c00 938.66px,#299100 938.66px,#2d9000,#378f00,#458c00,#548800,#658300,#767c00 1024px,#299100 1024px,#2d9000,#378f00,#458c00,#548800,#658300,#767c00 1109.33px,#299100 1109.33px,#2d9000,#378f00,#458c00,#548800,#658300,#767c00 1194.66px,#299100 1194.66px,#2d9000,#378f00,#458c00,#548800,#658300,#767c00 1280px,#299100 1280px,#2d9000,#378f00,#458c00,#580,#658300,#767c00 1365.33px)"></i>
</div>
<div class="tr" style="top:256.00px">
<i class="m0" style="background:linear-gradient(90deg,#7372a4 0px,#8a6698,#9c5b7d,#ab4f65,#b83f4f,#c3263c,#cd0029 85.33px,#7372a6 85.33px,#8a6699,#9c5b7e,#ab4f66,#b73f50,#c3263d,#cd002a 170.67px,#7372a7 170.67px,#8a669a,#9c5b7f,#ab4f67,#b73f51,#c3263d,#cd002b 256px,#7371a8 256px,#8a669b,#9c5b80,#ab4f68,#b73f52,#c3263e,#cd002c 341.33px,#7371a9 341.33px,#8a659c,#9b5b81,#aa4f69,#b73f53,#c3263f,#cd002d 426.67px,#7371aa 426.67px,#8a659d,#9b5b82,#aa4f6a,#b73e54,#c32640,#cd002e 512px,#7371ab 512px,#8a659e,#9b5b84,#aa4f6b,#b73e55,#c32641,#cd002e 597.33px,#7370ac 597.33px,#8a659f,#9b5b85,#aa4f6c,#b73e56,#c32642,#cd002f 682.66px,#7470ad 682.66px,#8965a0,#9b5b86,#aa4f6d,#b73e57,#c32643,#cd0030 768px,#7470ae 768px,#8965a1,#9b5b87,#aa4e6e,#b73e58,#c22644,#cd0031 853.33px,#7470af 853.33px,#8965a2,#9b5b88,#aa4e6f,#b73e59,#c22645,#cd0032 938.66px,#746fb0 938.66px,#8965a3,#9b5b89,#aa4e70,#b73e5a,#c22646,#cd0033 1024px,#746fb1 1024px,#8965a4,#9a5b8a,#aa4e71,#b73e5b,#c22646,#cd0034 1109.33px,#746fb2 1109.33px,#8964a5,#9a5b8b,#aa4e72,#b73e5c,#c22647,#cd0035 1194.66px,#756fb3 1194.66px,#8964a6,#9a5b8c,#a94e73,#b73e5d,#c22648,#cd0035 1280px,#756eb4 1280px,#8964a7,#9a5b8d,#a94e74,#b73e5d,#c22549,#cd0036 1365.33px)"></i>
<i class="m1" style="background:linear-gradient(90deg,#647d82 0px,#76767c,#8d696e,#a15b5c,#b04b4a,#bd3638,#c90026 85.33px,#647d84 85.33px,#76767d,#8d696f,#a15b5d,#b04b4b,#bd3639,#c90027 170.67px,#647d85 170.67px,#76767e,#8d6970,#a05b5e,#b04b4b,#bd363a,#c90028 256px,#647c86 256px,#76767f,#8d6971,#a05b5f,#b04b4c,#bd363a,#c90029 341.33px,#647c87 341.33px,#767580,#8d6972,#a05b60,#b04b4d,#bd363b,#c9002a 426.67px,#647c88 426.67px,#767581,#8d6973,#a05b61,#b04b4e,#bd363c,#c9002b 512px,#647c89 512px,#757582,#8d6974,#a05b62,#b04b4f,#bd363d,#c9002b 597.33px,#647c8a 597.33px,#757583,#8d6975,#a05b63,#b04b50,#bd363e,#c9002c 682.66px,#647c8b 682.66px,#757584,#8d6976,#a05b64,#b04b51,#bd363f,#c9002d 768px,#647c8c 768px,#757585,#8c6977,#a05b65,#b04b52,#bd3640,#c9002e 853.33px,#647c8d 853.33px,#757586,#8c6978,#a05b65,#b04b53,#bd3641,#c9002f 938.66px,#657b8e 938.66px,#757587,#8c6979,#a05b66,#b04b54,#bd3641,#c90030 1024px,#657b8f 1024px,#757588,#8c697a,#a05b67,#b04b55,#bd3542,#c90031 1109.33px,#657b90 1109.33px,#757589,#8c697b,#a05b68,#af4a56,#bd3543,#c90032 1194.66px,#657b91 1194.66px,#75758a,#8c697c,#a05b69,#af4a56,#bd3544,#c90032 1280px,#657b92 1280px,#75748b,#8c697d,#9f5b6a,#af4a57,#bd3545,#c90033 1365.33px)"></i>
<i class="m2" style="background:linear-gradient(90deg,#5a845e 0px,#64805c,#787855,#8d6c4a,#a05e3d,#b04d2e,#be361e 85.33px,#59845f 85.33px,#64805c,#787855,#8d6c4b,#a05e3e,#b04d2f,#be361f 170.67px,#598460 170.67px,#64805d,#787856,#8d6c4c,#a05e3e,#b04d30,#be3620 256px,#598361 256px,#64805e,#787857,#8d6c4c,#a05e3f,#b04d31,#be3620 341.33px,#598362 341.33px,#64805f,#787858,#8d6c4d,#a05e40,#b04d31,#be3621 426.67px,#598363 426.67px,#648060,#787859,#8d6c4e,#a05e41,#b04d32,#be3622 512px,#598364 512px,#648061,#78785a,#8d6c4f,#a05e42,#b04d33,#be3623 597.33px,#598365 597.33px,#648062,#78785b,#8d6c50,#a05e43,#b04d34,#be3624 682.66px,#598365 682.66px,#648063,#78785c,#8d6c51,#a05e43,#b04d35,#be3625 768px,#598366 768px,#648064,#78785d,#8d6c52,#a05e44,#b04d36,#be3626 853.33px,#598367 853.33px,#648065,#78785d,#8d6c52,#a05e45,#b04d36,#be3627 938.66px,#598368 938.66px,#648065,#78785e,#8d6c53,#a05e46,#b04d37,#be3628 1024px,#598369 1024px,#648066,#78775f,#8d6c54,#a05e47,#b04d38,#be3628 1109.33px,#59836a 1109.33px,#648067,#787760,#8d6c55,#a05e48,#b04d39,#be3629 1194.66px,#59836b 1194.66px,#647f68,#787761,#8d6c56,#a05e49,#b04d3a,#be362a 1280px,#59836c 1280px,#647f69,#787762,#8d6c57,#a05e49,#b04d3b,#be362b 1365.33px)"></i>
<i class="m3" style="background:linear-gradient(90deg,#508841 0px,#57863f,#66813b,#797934,#8c6f2b,#9e611e,#ae5106 85.33px,#508842 85.33px,#578640,#66813c,#797935,#8c6f2c,#9e611f,#ae5109 170.67px,#508842 170.67px,#578641,#66813d,#797936,#8c6e2c,#9e6120,#ae510c 256px,#508843 256px,#578642,#66813e,#797937,#8c6e2d,#9e6121,#ae510d 341.33px,#508844 341.33px,#578642,#66813e,#797937,#8c6e2e,#9e6122,#ae510f 426.67px,#508845 426.67px,#578643,#66813f,#797938,#8c6e2f,#9e6122,#ae5111 512px,#508846 512px,#578644,#668140,#797939,#8c6e2f,#9e6123,#ae5112 597.33px,#508846 597.33px,#578645,#668141,#79793a,#8c6e30,#9e6124,#ae5113 682.66px,#508847 682.66px,#578646,#668141,#79793b,#8c6e31,#9e6125,#ae5115 768px,#508848 768px,#578646,#668142,#79793b,#8c6e32,#9e6126,#ae5116 853.33px,#508849 853.33px,#568647,#668143,#79793c,#8c6e33,#9e6127,#ae5117 938.66px,#508849 938.66px,#568648,#668144,#79793d,#8c6e33,#9e6127,#ae5118 1024px,#50884a 1024px,#568649,#668145,#79793e,#8c6e34,#9e6128,#ae5119 1109.33px,#50884b 1109.33px,#56864a,#668145,#79793e,#8c6e35,#9e6129,#ae511a 1194.66px,#4f884c 1194.66px,#56864a,#668146,#79793f,#8c6e36,#9e612a,#ae511b 1280px,#4f884d 1280px,#56864b,#668147,#797940,#8c6e37,#9e612b,#ae511c 1365.33px)"></i>
<i class="m4" style="background:linear-gradient(90deg,#458b26 0px,#4a8a24,#568721,#66821b,#797a0f,#8a7000,#9b6400 85.33px,#458b26 85.33px,#4a8a25,#568722,#66821c,#797a10,#8a7000,#9b6400 170.67px,#458b27 170.67px,#4a8a26,#568723,#66821d,#797a12,#8a7000,#9b6400 256px,#458b28 256px,#4a8a27,#568724,#66821d,#797a13,#8a7000,#9b6400 341.33px,#458b29 341.33px,#4a8a27,#568724,#66821e,#797a14,#8a7000,#9b6400 426.67px,#458b29 426.67px,#4a8a28,#568725,#66821f,#797a15,#8a7000,#9b6400 512px,#458b2a 512px,#4a8a29,#568726,#668220,#797a16,#8a7000,#9b6400 597.33px,#458b2b 597.33px,#4a8a2a,#568727,#668221,#797a17,#8a7000,#9b6400 682.66px,#458b2c 682.66px,#4a8a2b,#568727,#668222,#797a19,#8a7000,#9b6400 768px,#458b2c 768px,#4a8a2b,#568728,#668223,#797a1a,#8a7004,#9b6400 853.33px,#458b2d 853.33px,#4a8a2c,#568729,#668223,#797a1b,#8a7009,#9b6400 938.66px,#458b2e 938.66px,#4a8a2d,#56872a,#668224,#797a1c,#8a700b,#9b6400 1024px,#458b2f 1024px,#4a8a2e,#56872b,#668225,#797a1c,#8a700d,#9b6400 1109.33px,#458b2f 1109.33px,#4a8a2e,#56872b,#668226,#797a1d,#8a700f,#9b6400 1194.66px,#458b30 1194.66px,#4a8a2f,#56872c,#668227,#797a1e,#8a7011,#9b6400 1280px,#458b31 1280px,#4a8a30,#56872d,#668228,#797a1f,#8a7012,#9b6400 1365.33px)"></i>
<i class="m5" style="background:linear-gradient(90deg,#398e00 0px,#3d8d00,#478b00,#580,#668300,#777b00,#887200 85.33px,#398e00 85.33px,#3d8d00,#478b00,#580,#668300,#777b00,#887200 170.67px,#398e00 170.67px,#3d8d00,#478b00,#580,#668200,#777b00,#887200 256px,#398e00 256px,#3d8d00,#478b00,#580,#668200,#777b00,#887200 341.33px,#398e00 341.33px,#3d8d00,#478b00,#580,#668200,#777b00,#887200 426.67px,#398e00 426.67px,#3d8d00,#478b00,#580,#668200,#777b00,#887200 512px,#398e00 512px,#3d8d00,#478b00,#580,#668200,#777b00,#887200 597.33px,#398e00 597.33px,#3d8d00,#478b00,#568800,#668200,#777b00,#887200 682.66px,#398e00 682.66px,#3d8d00,#478b00,#568800,#668200,#777b00,#887200 768px,#398e00 768px,#3d8d00,#478b00,#568800,#668200,#777b00,#887200 853.33px,#398e00 853.33px,#3d8d00,#478b00,#568800,#668200,#777b00,#887200 938.66px,#398e00 938.66px,#3d8d00,#478b00,#568800,#668200,#777b00,#887200 1024px,#398e00 1024px,#3d8d00,#478b00,#568800,#668200,#777b00,#887200 1109.33px,#398e07 1109.33px,#3d8d00,#478b00,#568800,#668200,#777b00,#887200 1194.66px,#398e0a 1194.66px,#3d8d06,#478b00,#568800,#668200,#777b00,#887200 1280px,#398e0c 1280px,#3d8d0a,#478b00,#568800,#668200,#777b00,#887200 1365.33px)"></i>
<i class="m6" style="background:linear-gradient(90deg,#299100 0px,#2d9000,#378f00,#458c00,#580,#658300,#767c00 85.33px,#299100 85.33px,#2d9000,#378f00,#458c00,#580,#658300,#767c00 170.67px,#299100 170.67px,#2d9000,#378f00,#458c00,#580,#658300,#767c00 256px,#299100 256px,#2d9000,#378f00,#458c00,#580,#658300,#767c00 341.33px,#299100 341.33px,#2d9000,#378f00,#458c00,#580,#658300,#767c00 426.67px,#299100 426.67px,#2d9000,#378f00,#458c00,#580,#658300,#767c00 512px,#299100 512px,#2d9000,#378f00,#458c00,#580,#658300,#767c00 597.33px,#299100 597.33px,#2d9000,#378f00,#458c00,#580,#658300,#767c00 682.66px,#299100 682.66px,#2e9000,#378f00,#458c00,#580,#658300,#767c00 768px,#299100 768px,#2e9000,#378f00,#458c00,#580,#658300,#767c00 853.33px,#299000 853.33px,#2e9000,#378f00,#458c00,#580,#658300,#767c00 938.66px,#2a9000 938.66px,#2e9000,#378f00,#458c00,#580,#658300,#767c00 1024px,#2a9000 1024px,#2e9000,#378f00,#458c00,#580,#658300,#767c00 1109.33px,#2a9000 1109.33px,#2e9000,#378f00,#458c00,#580,#658300,#767c00 1194.66px,#2a9000 1194.66px,#2e9000,#378f00,#458c00,#580,#658300,#767c00 1280px,#2a9000 1280px,#2e9000,#378f00,#458c00,#580,#658300,#767c00 1365.33px)"></i>
</div>
<div class="tr" style="top:341.33px">
<i class="m0" style="background:linear-gradient(90deg,#756eb5 0px,#8964a8,#9a5b8e,#a94e75,#b63e5e,#c2254a,#cd0037 85.33px,#756eb6 85.33px,#8964a9,#9a5b8f,#a94e76,#b63e5f,#c2254b,#cd0038 170.67px,#766db7 170.67px,#8964aa,#9a5b90,#a94e77,#b63e60,#c2254c,#cd0039 256px,#766db8 256px,#8864ab,#995b91,#a94e78,#b63e61,#c2254d,#cd003a 341.33px,#766db9 341.33px,#8864ac,#995b92,#a94e79,#b63e62,#c2254e,#cd003b 426.67px,#766cba 426.67px,#8864ac,#995a93,#a94e7a,#b63e63,#c2254f,#cd003c 512px,#776cbb 512px,#8864ad,#995a94,#a94e7b,#b63e64,#c2254f,#cd003c 597.33px,#776cbc 597.33px,#8863ae,#995a95,#a84e7c,#b63e65,#c22550,#cd003d 682.66px,#776bbd 682.66px,#8863af,#995a96,#a84e7d,#b63e66,#c22551,#cd003e 768px,#786bbe 768px,#8863b0,#995a97,#a84e7e,#b63e67,#c22552,#cd003f 853.33px,#786bbe 853.33px,#8863b1,#995a98,#a84e7f,#b63e68,#c22553,#cd0040 938.66px,#786abf 938.66px,#8863b2,#985a99,#a84e80,#b63e69,#c22554,#cd0041 1024px,#786ac0 1024px,#8763b3,#985a9a,#a84e81,#b63e6a,#c22555,#cc0042 1109.33px,#796ac1 1109.33px,#8763b4,#985a9b,#a84e82,#b53e6b,#c22556,#cc0042 1194.66px,#7969c2 1194.66px,#8763b5,#985a9c,#a84e83,#b53e6c,#c12557,#cc0043 1280px,#7969c3 1280px,#8763b5,#985a9d,#a84e84,#b53e6d,#c12558,#c04 1365.33px)"></i>
<i class="m1" style="background:linear-gradient(90deg,#657b93 0px,#75748c,#8c697e,#9f5b6b,#af4a58,#bd3546,#c90034 85.33px,#657a94 85.33px,#75748d,#8c687f,#9f5b6c,#af4a59,#bd3547,#c90035 170.67px,#657a95 170.67px,#75748e,#8c6880,#9f5a6d,#af4a5a,#bd3548,#c80036 256px,#657a96 256px,#75748f,#8b6881,#9f5a6e,#af4a5b,#bd3548,#c80037 341.33px,#657a97 341.33px,#757490,#8b6882,#9f5a6f,#af4a5c,#bd3549,#c80038 426.67px,#657a98 426.67px,#757491,#8b6883,#9f5a70,#af4a5d,#bd354a,#c80038 512px,#657a99 512px,#757492,#8b6884,#9f5a71,#af4a5e,#bd354b,#c80039 597.33px,#657a9a 597.33px,#757493,#8b6885,#9f5a72,#af4a5f,#bc354c,#c8003a 682.66px,#65799b 682.66px,#757394,#8b6886,#9f5a73,#af4a60,#bc354d,#c8003b 768px,#65799c 768px,#757395,#8b6887,#9f5a74,#af4a61,#bc354e,#c8003c 853.33px,#66799d 853.33px,#757396,#8b6888,#9f5a75,#af4a62,#bc354f,#c8003d 938.66px,#66799e 938.66px,#757397,#8b6888,#9e5a76,#af4a62,#bc3550,#c8003e 1024px,#66799f 1024px,#757398,#8b6889,#9e5a77,#af4a63,#bc3550,#c8003e 1109.33px,#6679a0 1109.33px,#747399,#8b688a,#9e5a78,#ae4a64,#bc3551,#c8003f 1194.66px,#6678a1 1194.66px,#74739a,#8a688b,#9e5a79,#ae4a65,#bc3552,#c80040 1280px,#6678a1 1280px,#74739b,#8a688c,#9e5a7a,#ae4a66,#bc3553,#c80041 1365.33px)"></i>
<i class="m2" style="background:linear-gradient(90deg,#59836d 0px,#637f6a,#777763,#8d6c58,#a05e4a,#b04d3b,#be362c 85.33px,#59836e 85.33px,#637f6b,#777764,#8d6c59,#a05e4b,#b04d3c,#be362d 170.67px,#59836f 170.67px,#637f6c,#777765,#8d6c5a,#9f5e4c,#b04d3d,#be362e 256px,#598270 256px,#637f6d,#776,#8d6c5a,#9f5e4d,#b04d3e,#be362e 341.33px,#598271 341.33px,#637f6e,#777767,#8c6c5b,#9f5e4e,#b04d3f,#be362f 426.67px,#598272 426.67px,#637f6f,#777767,#8c6c5c,#9f5e4f,#b04d40,#be3630 512px,#598272 512px,#637f70,#777768,#8c6c5d,#9f5d4f,#b04c41,#be3631 597.33px,#598273 597.33px,#637f71,#777769,#8c6c5e,#9f5d50,#b04c41,#be3632 682.66px,#598274 682.66px,#637f72,#77776a,#8c6b5f,#9f5d51,#b04c42,#be3633 768px,#598275 768px,#637f72,#77776b,#8c6b60,#9f5d52,#af4c43,#be3633 853.33px,#598276 853.33px,#637f73,#77776c,#8c6b61,#9f5d53,#af4c44,#be3534 938.66px,#598277 938.66px,#637f74,#77776d,#8c6b62,#9f5d54,#af4c45,#be3535 1024px,#598278 1024px,#637f75,#77776e,#8c6b63,#9f5d55,#af4c46,#be3536 1109.33px,#598279 1109.33px,#637f76,#77776f,#8c6b63,#9f5d56,#af4c46,#be3537 1194.66px,#59827a 1194.66px,#637e77,#777770,#8c6b64,#9f5d56,#af4c47,#be3538 1280px,#59827b 1280px,#637e78,#777771,#8c6b65,#9f5d57,#af4c48,#be3538 1365.33px)"></i>
<i class="m3" style="background:linear-gradient(90deg,#4f874e 0px,#56864c,#668148,#797941,#8c6e37,#9e612c,#ae511d 85.33px,#4f874e 85.33px,#56864d,#668149,#797942,#8c6e38,#9e612c,#ae511e 170.67px,#4f874f 170.67px,#56864e,#668149,#797942,#8c6e39,#9e612d,#ae511f 256px,#4f8750 256px,#56864e,#65814a,#797943,#8c6e3a,#9e612e,#ae5120 341.33px,#4f8751 341.33px,#56864f,#65814b,#797944,#8c6e3b,#9e612f,#ae5121 426.67px,#4f8752 426.67px,#568550,#65814c,#797945,#8c6e3b,#9e6130,#ae5122 512px,#4f8752 512px,#568551,#65814d,#797946,#8c6e3c,#9e6131,#ae5023 597.33px,#4f8753 597.33px,#568552,#65814e,#797946,#8c6e3d,#9e6131,#ae5024 682.66px,#4f8754 682.66px,#568553,#65814e,#797947,#8c6e3e,#9e6132,#ae5025 768px,#4f8755 768px,#568553,#65814f,#797948,#8c6e3f,#9e6133,#ae5026 853.33px,#4f8756 853.33px,#568554,#658050,#787949,#8c6e3f,#9e6134,#ae5026 938.66px,#4f8757 938.66px,#568555,#658051,#78794a,#8c6e40,#9e6135,#ae5027 1024px,#4f8757 1024px,#568556,#658052,#78784b,#8c6e41,#9e6135,#ae5028 1109.33px,#4f8758 1109.33px,#568557,#658053,#78784b,#8c6e42,#9e6136,#ae5029 1194.66px,#4f8759 1194.66px,#568558,#658053,#78784c,#8c6e43,#9e6137,#ae502a 1280px,#4f875a 1280px,#568558,#658054,#78784d,#8c6e43,#9e6138,#ae502b 1365.33px)"></i>
<i class="m4" style="background:linear-gradient(90deg,#458b32 0px,#4a8a31,#56872e,#668228,#797a20,#8a7013,#9b6400 85.33px,#458b32 85.33px,#4a8a31,#56872e,#668229,#797a21,#8a7015,#9b6400 170.67px,#458b33 170.67px,#4a8a32,#56872f,#66822a,#797a22,#8a7016,#9b6400 256px,#458b34 256px,#4a8a33,#568730,#66822b,#797a23,#8a7017,#9b6400 341.33px,#458b35 341.33px,#4a8a34,#568731,#66822c,#797a24,#8a7018,#9b6400 426.67px,#458b36 426.67px,#4a8a34,#568732,#66822c,#797a25,#8a7019,#9b6400 512px,#458b36 512px,#4a8a35,#568732,#66822d,#797a25,#8a701a,#9b6400 597.33px,#458b37 597.33px,#4a8a36,#568733,#66812e,#797a26,#8a701b,#9b6404 682.66px,#458b38 682.66px,#4a8a37,#568734,#66812f,#797a27,#8a701d,#9b6409 768px,#458b39 768px,#4a8a38,#568735,#668130,#797a28,#8a701d,#9b640b 853.33px,#458b39 853.33px,#4a8a38,#568735,#668130,#797a29,#8a701e,#9b640d 938.66px,#458b3a 938.66px,#4a8a39,#568736,#668131,#797a2a,#8a701f,#9b640f 1024px,#458b3b 1024px,#4a8a3a,#568737,#668132,#797a2b,#8a7020,#9b6411 1109.33px,#458b3c 1109.33px,#4a8a3b,#568738,#668133,#797a2b,#8a7021,#9b6412 1194.66px,#458b3c 1194.66px,#4a8a3b,#568739,#668134,#797a2c,#8a7022,#9b6414 1280px,#458b3d 1280px,#4a8a3c,#568739,#668134,#797a2d,#8a7023,#9b6415 1365.33px)"></i>
<i class="m5" style="background:linear-gradient(90deg,#398e0e 0px,#3d8d0c,#478b00,#568800,#668200,#777b00,#887200 85.33px,#398e10 85.33px,#3d8d0e,#478b06,#568800,#668200,#777b00,#887200 170.67px,#398e11 170.67px,#3d8d10,#478b0a,#568800,#668200,#777b00,#887200 256px,#398e13 256px,#3d8d11,#478b0c,#568800,#668200,#787b00,#887200 341.33px,#398e14 341.33px,#3d8d13,#478b0e,#568800,#668200,#787b00,#897200 426.67px,#398e15 426.67px,#3d8d14,#478b10,#568800,#668200,#787b00,#897200 512px,#398e17 512px,#3d8d15,#478b11,#568804,#668200,#787b00,#897200 597.33px,#398e18 597.33px,#3d8d17,#478b13,#568809,#668200,#787b00,#897200 682.66px,#398e19 682.66px,#3d8d18,#478b14,#56880b,#668200,#787b00,#897200 768px,#398e1a 768px,#3d8d19,#478b15,#56880d,#668200,#787b00,#897200 853.33px,#398e1b 853.33px,#3d8d1a,#478b17,#56880f,#668200,#787b00,#897200 938.66px,#398e1c 938.66px,#3d8d1b,#478b18,#568811,#668200,#787b00,#897200 1024px,#398e1d 1024px,#3d8d1c,#478b19,#568813,#668200,#787b00,#897200 1109.33px,#398e1e 1109.33px,#3d8d1d,#478b1a,#568714,#668200,#787b00,#897200 1194.66px,#398e1f 1194.66px,#3d8d1e,#478b1b,#568715,#668207,#787b00,#897200 1280px,#398e20 1280px,#3d8d1f,#478b1c,#568716,#66820a,#787b00,#897200 1365.33px)"></i>
<i class="m6" style="background:linear-gradient(90deg,#2a9000 0px,#2e9000,#378f00,#458c00,#580,#658300,#767c00 85.33px,#2a9000 85.33px,#2e9000,#388f00,#458c00,#580,#658300,#767c00 170.67px,#2a9000 170.67px,#2e9000,#388f00,#458c00,#580,#658300,#767c00 256px,#2a9000 256px,#2e9000,#388f00,#458c00,#580,#658300,#767c00 341.33px,#2a9000 341.33px,#2e9000,#388f00,#458c00,#580,#658300,#767c00 426.67px,#2a9000 426.67px,#2e9000,#388f00,#458c00,#580,#658300,#767c00 512px,#2a9000 512px,#2e9000,#388f00,#458c00,#580,#658300,#767c00 597.33px,#2a9000 597.33px,#2e9000,#388f00,#458c00,#580,#658300,#767c00 682.66px,#2a9000 682.66px,#2e9000,#388f00,#458c00,#580,#658300,#767c00 768px,#2a9000 768px,#2e9000,#388e00,#458c00,#580,#658300,#767c00 853.33px,#2a9000 853.33px,#2e9000,#388e00,#458c00,#580,#658300,#767c00 938.66px,#2a9000 938.66px,#2e9000,#388e00,#458c00,#580,#658300,#767c00 1024px,#2a9000 1024px,#2e9000,#388e00,#458c00,#580,#668300,#767c00 1109.33px,#2a9000 1109.33px,#2e9000,#388e00,#458c00,#580,#668300,#767c00 1194.66px,#2a9000 1194.66px,#2e9000,#388e00,#458c00,#580,#668300,#767c00 1280px,#2a9000 1280px,#2e9000,#388e00,#458c00,#580,#668300,#767c00 1365.33px)"></i>
</div>
<div class="tr" style="top:426.67px">
<i class="m0" style="background:linear-gradient(90deg,#7969c4 0px,#8762b6,#985a9e,#a74e85,#b53e6e,#c12559,#cc0045 85.33px,#7a68c5 85.33px,#8762b7,#985a9f,#a74e86,#b53e6f,#c12459,#cc0046 170.67px,#7a68c6 170.67px,#8762b8,#975aa0,#a74e87,#b53e70,#c1245a,#cc0047 256px,#7a68c6 256px,#8762b9,#975aa1,#a74e88,#b53d71,#c1245b,#cc0048 341.33px,#7a67c7 341.33px,#8762ba,#9759a2,#a74d89,#b53d72,#c1245c,#cc0049 426.67px,#7a67c8 426.67px,#8762bb,#9759a3,#a74d8a,#b53d72,#c1245d,#cc0049 512px,#7a67c9 512px,#8662bc,#9759a4,#a74d8b,#b53d73,#c1245e,#cc004a 597.33px,#7b66ca 597.33px,#8662bc,#9759a5,#a74d8c,#b53d74,#c1245f,#cc004b 682.66px,#7b66cb 682.66px,#8662bd,#9759a5,#a74d8d,#b53d75,#c12460,#cc004c 768px,#7b66cb 768px,#8661be,#9659a6,#a64d8e,#b43d76,#c12461,#cc004d 853.33px,#7b66cc 853.33px,#8661bf,#9659a7,#a64d8f,#b43d77,#c12462,#cc004e 938.66px,#7b65cd 938.66px,#8661c0,#9659a8,#a64d90,#b43d78,#c12463,#cc004f 1024px,#7b65ce 1024px,#8661c1,#9659a9,#a64d91,#b43d79,#c12463,#cc0050 1109.33px,#7b65cf 1109.33px,#8661c2,#9659aa,#a64d91,#b43d7a,#c12464,#cc0050 1194.66px,#7b65cf 1194.66px,#8661c2,#9659ab,#a64d92,#b43d7b,#c12465,#cc0051 1280px,#7c64d0 1280px,#8661c3,#9659ac,#a64d93,#b43d7c,#c02366,#cc0052 1365.33px)"></i>
<i class="m1" style="background:linear-gradient(90deg,#6678a2 0px,#74729c,#8a678d,#9e5a7b,#ae4a67,#bc3554,#c80042 85.33px,#6678a3 85.33px,#74729d,#8a678e,#9e5a7c,#ae4a68,#bc3555,#c80043 170.67px,#6678a4 170.67px,#74729e,#8a678f,#9e5a7d,#ae4a69,#bc3556,#c80044 256px,#6678a5 256px,#74729f,#8a6790,#9e5a7e,#ae4a6a,#bc3557,#c80044 341.33px,#6677a6 341.33px,#7472a0,#8a6791,#9e5a7f,#ae4a6b,#bc3458,#c80045 426.67px,#6677a7 426.67px,#7472a1,#8a6792,#9d5a80,#ae4a6c,#bc3458,#c80046 512px,#6677a8 512px,#7472a2,#8a6793,#9d5a80,#ae4a6d,#bc3459,#c80047 597.33px,#6777a9 597.33px,#7472a3,#8a6794,#9d5981,#ae4a6e,#bc345a,#c80048 682.66px,#6777aa 682.66px,#7471a4,#896795,#9d5982,#ae496f,#bc345b,#c80049 768px,#6776ab 768px,#7471a5,#896796,#9d5983,#ae4970,#bc345c,#c8004a 853.33px,#6776ac 853.33px,#7471a5,#896797,#9d5984,#ae4970,#bc345d,#c8004a 938.66px,#6776ad 938.66px,#7471a6,#896798,#9d5985,#ad4971,#bb345e,#c8004b 1024px,#6776ae 1024px,#7471a7,#896699,#9d5986,#ad4972,#bb345f,#c8004c 1109.33px,#6776af 1109.33px,#7471a8,#89669a,#9d5987,#ad4973,#bb3460,#c8004d 1194.66px,#6776b0 1194.66px,#7471a9,#89669b,#9d5988,#ad4974,#bb3461,#c8004e 1280px,#6775b0 1280px,#7470aa,#89669c,#9d5989,#ad4975,#bb3461,#c8004f 1365.33px)"></i>
<i class="m2" style="background:linear-gradient(90deg,#59827c 0px,#637e79,#767672,#8c6b66,#9f5d58,#af4c49,#be3539 85.33px,#58817d 85.33px,#637e7a,#767672,#8c6b67,#9f5d59,#af4c4a,#bd353a 170.67px,#58817e 170.67px,#637e7b,#767673,#8c6b68,#9f5d5a,#af4c4b,#bd353b 256px,#58817f 256px,#637e7c,#767674,#8c6b69,#9f5d5b,#af4c4c,#bd353c 341.33px,#588180 341.33px,#637e7d,#767675,#8c6b6a,#9f5d5c,#af4c4c,#bd353d 426.67px,#588181 426.67px,#637e7e,#767676,#8b6b6b,#9f5d5d,#af4c4d,#bd353e 512px,#588181 512px,#637e7f,#767677,#8b6b6c,#9f5d5d,#af4c4e,#bd353e 597.33px,#588182 597.33px,#627e80,#767678,#8b6b6c,#9f5d5e,#af4c4f,#bd353f 682.66px,#588183 682.66px,#627e80,#767679,#8b6b6d,#9e5d5f,#af4c50,#bd3540 768px,#588184 768px,#627e81,#76767a,#8b6b6e,#9e5d60,#af4c51,#bd3541 853.33px,#588185 853.33px,#627d82,#76767b,#8b6b6f,#9e5d61,#af4c52,#bd3542 938.66px,#588186 938.66px,#627d83,#76767c,#8b6b70,#9e5d62,#af4c52,#bd3543 1024px,#588087 1024px,#627d84,#76767d,#8b6b71,#9e5d63,#af4c53,#bd3543 1109.33px,#588088 1109.33px,#627d85,#76767e,#8b6a72,#9e5d64,#af4c54,#bd3544 1194.66px,#588089 1194.66px,#627d86,#76767f,#8b6a73,#9e5d65,#af4c55,#bd3445 1280px,#58808a 1280px,#627d87,#76767f,#8b6a74,#9e5d65,#af4c56,#bd3446 1365.33px)"></i>
<i class="m3" style="background:linear-gradient(90deg,#4f875b 0px,#568559,#658055,#78784e,#8c6e44,#9e6139,#ae502c 85.33px,#4f875c 85.33px,#56855a,#658056,#78784f,#8c6e45,#9e613a,#ae502c 170.67px,#4f875d 170.67px,#56855b,#658057,#787850,#8c6e46,#9e613a,#ae502d 256px,#4f875d 256px,#56855c,#658058,#787850,#8c6e47,#9e603b,#ae502e 341.33px,#4f875e 341.33px,#56855d,#658058,#787851,#8c6e48,#9e603c,#ae502f 426.67px,#4f875f 426.67px,#56855e,#658059,#787852,#8c6e48,#9e603d,#ae5030 512px,#4f8760 512px,#56855e,#65805a,#787853,#8c6e49,#9e603e,#ae5031 597.33px,#4f8761 597.33px,#55855f,#65805b,#787854,#8c6e4a,#9e603e,#ae5031 682.66px,#4f8762 682.66px,#558560,#65805c,#787855,#8b6d4b,#9d603f,#ae5032 768px,#4f8663 768px,#558561,#65805d,#787855,#8b6d4c,#9d6040,#ae5033 853.33px,#4e8663 853.33px,#558562,#65805d,#787856,#8b6d4c,#9d6041,#ae5034 938.66px,#4e8664 938.66px,#558563,#65805e,#787857,#8b6d4d,#9d6042,#ae5035 1024px,#4e8665 1024px,#558564,#65805f,#787858,#8b6d4e,#9d6043,#ae5036 1109.33px,#4e8666 1109.33px,#558464,#658060,#787859,#8b6d4f,#9d6043,#ae5036 1194.66px,#4e8667 1194.66px,#558465,#648061,#78785a,#8b6d50,#9d6044,#ae5037 1280px,#4e8668 1280px,#558466,#648062,#78785a,#8b6d51,#9d6045,#ae5038 1365.33px)"></i>
<i class="m4" style="background:linear-gradient(90deg,#458b3e 0px,#4a8a3d,#56873a,#668135,#797a2e,#8a7024,#9b6416 85.33px,#458b3f 85.33px,#4a8a3e,#56873b,#668136,#797a2f,#8a7025,#9b6418 170.67px,#458b40 170.67px,#4a8a3f,#56873c,#668137,#797a2f,#8a7026,#9b6419 256px,#458b40 256px,#4a8a3f,#56863d,#668137,#797a30,#8a7027,#9b641a 341.33px,#458b41 341.33px,#4a8940,#56863d,#668138,#797a31,#8a7028,#9c641b 426.67px,#458b42 426.67px,#4a8941,#56863e,#668139,#787a32,#8a7028,#9c631c 512px,#458b43 512px,#4a8942,#56863f,#66813a,#787a33,#8a7029,#9c631d 597.33px,#458b44 597.33px,#4a8942,#568640,#66813b,#787a33,#8a702a,#9c631e 682.66px,#458a44 682.66px,#4a8943,#568640,#66813b,#787a34,#8a702b,#9c631f 768px,#458a45 768px,#4a8944,#568641,#66813c,#787935,#8a702c,#9c6320 853.33px,#458a46 853.33px,#4a8945,#568642,#66813d,#787936,#8a702d,#9c6321 938.66px,#458a47 938.66px,#4a8946,#568643,#66813e,#787937,#8a702d,#9c6322 1024px,#458a47 1024px,#4a8946,#568644,#66813f,#787937,#8a702e,#9c6323 1109.33px,#458a48 1109.33px,#4a8947,#568644,#66813f,#787938,#8a702f,#9c6324 1194.66px,#458a49 1194.66px,#4a8948,#568645,#668140,#787939,#8a7030,#9c6325 1280px,#458a4a 1280px,#4a8949,#568646,#668141,#78793a,#8a6f31,#9c6326 1365.33px)"></i>
<i class="m5" style="background:linear-gradient(90deg,#398e21 0px,#3d8d20,#478b1d,#568718,#66820d,#787b00,#897200 85.33px,#398e22 85.33px,#3d8d21,#478b1e,#568719,#66820f,#787b00,#897200 170.67px,#398e23 170.67px,#3d8d22,#478b1f,#56871a,#668210,#787b00,#897200 256px,#398e24 256px,#3d8d23,#478b20,#56871b,#668212,#787b00,#897200 341.33px,#398e24 341.33px,#3d8d24,#478b21,#56871c,#668213,#787b00,#897200 426.67px,#398e25 426.67px,#3d8d24,#478b22,#56871d,#668215,#787b00,#897200 512px,#398e26 512px,#3d8d25,#478b23,#56871e,#678216,#787b00,#897200 597.33px,#398e27 597.33px,#3d8d26,#478b24,#56871f,#678217,#787b04,#897200 682.66px,#398e28 682.66px,#3d8d27,#478b25,#568720,#678219,#787b09,#897200 768px,#398e29 768px,#3d8d28,#478b25,#568721,#67821a,#787b0c,#897100 853.33px,#398e2a 853.33px,#3d8d29,#478b26,#568722,#67821b,#787b0e,#897100 938.66px,#398e2a 938.66px,#3d8d2a,#478b27,#568723,#67821c,#787b10,#897100 1024px,#398e2b 1024px,#3d8d2a,#488b28,#568724,#67821d,#787b11,#897100 1109.33px,#398d2c 1109.33px,#3d8d2b,#488b29,#568725,#67821e,#787b13,#897100 1194.66px,#398d2d 1194.66px,#3d8d2c,#488b2a,#568726,#67821f,#787b14,#897100 1280px,#398d2e 1280px,#3d8d2d,#488b2b,#568726,#678220,#787b16,#897100 1365.33px)"></i>
<i class="m6" style="background:linear-gradient(90deg,#2a9000 0px,#2e9000,#388e00,#468c00,#580,#668300,#767c00 85.33px,#2a9000 85.33px,#2e9000,#388e00,#468c00,#580,#668300,#767c00 170.67px,#2a9000 170.67px,#2e9000,#388e00,#468c00,#580,#668300,#767c00 256px,#2b9000 256px,#2f9000,#388e00,#468c00,#580,#668300,#767c00 341.33px,#2b9000 341.33px,#2f9000,#388e00,#468c00,#580,#668300,#767c00 426.67px,#2b9000 426.67px,#2f9000,#388e00,#468c00,#580,#668300,#767c00 512px,#2b9000 512px,#2f9000,#388e00,#468c00,#580,#668300,#767c00 597.33px,#2b9000 597.33px,#2f9000,#388e00,#468c00,#580,#668300,#767c00 682.66px,#2b9000 682.66px,#2f9000,#388e00,#468c00,#580,#668300,#767c00 768px,#2b9000 768px,#2f9000,#388e00,#468c00,#580,#668300,#767c00 853.33px,#2b9000 853.33px,#2f9000,#388e00,#468c00,#580,#668300,#767c00 938.66px,#2b9000 938.66px,#2f9000,#388e00,#468c00,#580,#668300,#767c00 1024px,#2b9000 1024px,#2f9000,#388e00,#468c00,#580,#668300,#767c00 1109.33px,#2b9000 1109.33px,#2f9000,#388e00,#468c00,#580,#668300,#767c00 1194.66px,#2b9000 1194.66px,#2f9000,#388e00,#468c00,#580,#668300,#767c00 1280px,#2b9000 1280px,#2f9000,#388e00,#468c00,#580,#668300,#777c00 1365.33px)"></i>
</div>
<div class="tr" style="top:512.00px">
<i class="m0" style="background:linear-gradient(90deg,#7c64d1 0px,#8561c4,#9659ad,#a64d94,#b43d7d,#c02367,#cc0053 85.33px,#7c64d2 85.33px,#8560c5,#9558ae,#a54d95,#b43d7e,#c02368,#cc0054 170.67px,#7c64d2 170.67px,#8560c6,#9558af,#a54d96,#b43d7f,#c02369,#c05 256px,#7c64d3 256px,#8560c7,#9558b0,#a54d97,#b43d80,#c0236a,#cc0056 341.33px,#7c63d4 341.33px,#8560c7,#9558b1,#a54d98,#b33d81,#c0236b,#cc0056 426.67px,#7c63d5 426.67px,#8560c8,#9558b2,#a54d99,#b33d82,#c0236c,#cc0057 512px,#7c63d5 512px,#8560c9,#9558b3,#a54c9a,#b33d83,#c0236d,#cb0058 597.33px,#7c63d6 597.33px,#8560ca,#9558b4,#a54c9b,#b33c83,#c0236d,#cb0059 682.66px,#7c63d7 682.66px,#855fcb,#9458b4,#a54c9c,#b33c84,#c0236e,#cb005a 768px,#7c62d8 768px,#855fcb,#9458b5,#a44c9d,#b33c85,#c0236f,#cb005b 853.33px,#7c62d8 853.33px,#855fcc,#9458b6,#a44c9e,#b33c86,#c02270,#cb005c 938.66px,#7c62d9 938.66px,#845fcd,#9458b7,#a44c9f,#b33c87,#c02271,#cb005d 1024px,#7c62da 1024px,#845fce,#9457b8,#a44ca0,#b33c88,#c02272,#cb005d 1109.33px,#7c62da 1109.33px,#845fcf,#9457b9,#a44ca1,#b33c89,#c02273,#cb005e 1194.66px,#7c62db 1194.66px,#845fcf,#9457ba,#a44ca2,#b23c8a,#bf2274,#cb005f 1280px,#7c61dc 1280px,#845fd0,#9357bb,#a44ca3,#b23c8b,#bf2275,#cb0060 1365.33px)"></i>
<i class="m1" style="background:linear-gradient(90deg,#6775b1 0px,#7470ab,#89669d,#9c598a,#ad4976,#bb3462,#c80050 85.33px,#6775b2 85.33px,#7470ac,#89669e,#9c598b,#ad4977,#bb3463,#c80050 170.67px,#6775b3 170.67px,#7470ad,#89669f,#9c598c,#ad4978,#bb3464,#c80051 256px,#6775b4 256px,#7470ae,#8866a0,#9c598d,#ad4979,#bb3465,#c70052 341.33px,#6874b5 341.33px,#7470af,#8866a1,#9c598e,#ad497a,#bb3466,#c70053 426.67px,#6874b6 426.67px,#7470b0,#8866a2,#9c598f,#ad497b,#bb3367,#c70054 512px,#6874b7 512px,#746fb1,#8866a2,#9c5990,#ad497c,#bb3368,#c70055 597.33px,#6874b8 597.33px,#746fb2,#8865a3,#9c5891,#ac497c,#bb3369,#c70056 682.66px,#6874b9 682.66px,#746fb2,#8865a4,#9c5892,#ac497d,#bb3369,#c70056 768px,#6874ba 768px,#746fb3,#8865a5,#9b5892,#ac497e,#bb336a,#c70057 853.33px,#6873ba 853.33px,#746fb4,#8865a6,#9b5893,#ac487f,#bb336b,#c70058 938.66px,#6873bb 938.66px,#746fb5,#8865a7,#9b5894,#ac4880,#bb336c,#c70059 1024px,#6873bc 1024px,#746fb6,#8865a8,#9b5895,#ac4881,#ba336d,#c7005a 1109.33px,#6873bd 1109.33px,#746eb7,#8765a9,#9b5896,#ac4882,#ba336e,#c7005b 1194.66px,#6873be 1194.66px,#746eb8,#8765aa,#9b5897,#ac4883,#ba336f,#c7005c 1280px,#6872bf 1280px,#746eb9,#8765ab,#9b5898,#ac4884,#ba3370,#c7005c 1365.33px)"></i>
<i class="m2" style="background:linear-gradient(90deg,#58808b 0px,#627d88,#757580,#8b6a75,#9e5c66,#af4b57,#bd3447 85.33px,#58808c 85.33px,#627d89,#757581,#8b6a76,#9e5c67,#af4b58,#bd3448 170.67px,#58808d 170.67px,#627d8a,#757582,#8b6a76,#9e5c68,#af4b58,#bd3448 256px,#58808e 256px,#627d8b,#757583,#8b6a77,#9e5c69,#af4b59,#bd3449 341.33px,#58808f 341.33px,#627d8c,#757584,#8a6a78,#9e5c6a,#af4b5a,#bd344a 426.67px,#58808f 426.67px,#627d8d,#757585,#8a6a79,#9e5c6b,#ae4b5b,#bd344b 512px,#587f90 512px,#627c8d,#757586,#8a6a7a,#9e5c6c,#ae4b5c,#bd344c 597.33px,#587f91 597.33px,#627c8e,#757587,#8a6a7b,#9e5c6d,#ae4b5d,#bd344d 682.66px,#587f92 682.66px,#627c8f,#757588,#8a6a7c,#9e5c6d,#ae4b5e,#bd344d 768px,#587f93 768px,#627c90,#757589,#8a6a7d,#9d5c6e,#ae4b5e,#bd344e 853.33px,#587f94 853.33px,#627c91,#75758a,#8a6a7e,#9d5c6f,#ae4b5f,#bd344f 938.66px,#587f95 938.66px,#627c92,#75758a,#8a6a7f,#9d5c70,#ae4b60,#bd3450 1024px,#587f96 1024px,#627c93,#75758b,#8a6a80,#9d5c71,#ae4b61,#bd3451 1109.33px,#587f97 1109.33px,#627c94,#75748c,#8a6a80,#9d5c72,#ae4b62,#bd3452 1194.66px,#587f98 1194.66px,#627c95,#75748d,#8a6981,#9d5c73,#ae4b63,#bd3352 1280px,#587e99 1280px,#627c96,#74748e,#8a6982,#9d5c74,#ae4b64,#bd3353 1365.33px)"></i>
<i class="m3" style="background:linear-gradient(90deg,#4e8669 0px,#558467,#648063,#78785b,#8b6d51,#9d6046,#ae5039 85.33px,#4e8669 85.33px,#558468,#648063,#78785c,#8b6d52,#9d6047,#ae503a 170.67px,#4e866a 170.67px,#558469,#647f64,#78785d,#8b6d53,#9d6047,#ae503a 256px,#4e866b 256px,#55846a,#647f65,#78785e,#8b6d54,#9d6048,#ae503b 341.33px,#4e866c 341.33px,#55846a,#647f66,#78785f,#8b6d55,#9d6049,#ae4f3c 426.67px,#4e866d 426.67px,#55846b,#647f67,#787860,#8b6d56,#9d604a,#ae4f3d 512px,#4e866e 512px,#55846c,#647f68,#777760,#8b6d56,#9d604b,#ae4f3e 597.33px,#4e866f 597.33px,#55846d,#647f69,#777761,#8b6d57,#9d604c,#ad4f3f 682.66px,#4e866f 682.66px,#55846e,#647f69,#777762,#8b6d58,#9d604c,#ad4f3f 768px,#4e8670 768px,#55846f,#647f6a,#777763,#8b6d59,#9d604d,#ad4f40 853.33px,#4e8671 853.33px,#558470,#647f6b,#777764,#8b6d5a,#9d604e,#ad4f41 938.66px,#4e8572 938.66px,#558470,#647f6c,#777765,#8b6d5b,#9d604f,#ad4f42 1024px,#4e8573 1024px,#558471,#647f6d,#777765,#8b6d5b,#9d6050,#ad4f43 1109.33px,#4e8574 1109.33px,#558472,#647f6e,#776,#8b6d5c,#9d6050,#ad4f43 1194.66px,#4e8575 1194.66px,#548473,#647f6f,#777767,#8b6d5d,#9d5f51,#ad4f44 1280px,#4e8576 1280px,#548374,#647f70,#777768,#8b6d5e,#9d5f52,#ad4f45 1365.33px)"></i>
<i class="m4" style="background:linear-gradient(90deg,#458a4b 0px,#4a894a,#568647,#668142,#78793b,#8a6f32,#9c6326 85.33px,#458a4b 85.33px,#4a894a,#568648,#668143,#78793b,#8a6f32,#9c6327 170.67px,#448a4c 170.67px,#4a894b,#568648,#668143,#78793c,#8a6f33,#9c6328 256px,#448a4d 256px,#4a894c,#568649,#668144,#78793d,#8a6f34,#9c6329 341.33px,#448a4e 341.33px,#4a894d,#56864a,#668145,#78793e,#8a6f35,#9c632a 426.67px,#448a4f 426.67px,#49894e,#56864b,#668146,#78793f,#8a6f36,#9c632b 512px,#448a4f 512px,#49894e,#55864c,#668147,#78793f,#8a6f36,#9c632c 597.33px,#448a50 597.33px,#49894f,#55864c,#668147,#787940,#8a6f37,#9c632c 682.66px,#448a51 682.66px,#498950,#55864d,#668148,#787941,#8a6f38,#9c632d 768px,#448a52 768px,#498951,#55864e,#668149,#787942,#8a6f39,#9c632e 853.33px,#448a53 853.33px,#498952,#55864f,#66814a,#787943,#8a6f3a,#9c632f 938.66px,#448a53 938.66px,#498952,#558650,#66804b,#787943,#8a6f3a,#9c6330 1024px,#448a54 1024px,#498953,#558650,#66804b,#787944,#8a6f3b,#9c6331 1109.33px,#448a55 1109.33px,#498954,#558651,#66804c,#787945,#8a6f3c,#9c6331 1194.66px,#448a56 1194.66px,#498955,#558652,#66804d,#787946,#8a6f3d,#9c6332 1280px,#448a57 1280px,#498956,#558653,#66804e,#787947,#8a6f3e,#9c6333 1365.33px)"></i>
<i class="m5" style="background:linear-gradient(90deg,#398d2f 0px,#3d8d2e,#488b2b,#568727,#678221,#787b17,#897100 85.33px,#398d2f 85.33px,#3d8d2f,#488b2c,#568728,#678222,#787b18,#897100 170.67px,#398d30 170.67px,#3d8d2f,#488b2d,#568729,#678223,#787a19,#897104 256px,#398d31 256px,#3d8d30,#488b2e,#56872a,#678224,#787a1b,#897109 341.33px,#398d32 341.33px,#3d8d31,#488b2f,#56872b,#678225,#787a1c,#89710c 426.67px,#398d33 426.67px,#3d8d32,#488b30,#56872c,#678225,#787a1d,#89710e 512px,#398d33 512px,#3d8d33,#488b30,#56872c,#678226,#787a1e,#897110 597.33px,#398d34 597.33px,#3d8d33,#488b31,#56872d,#678227,#787a1f,#897112 682.66px,#398d35 682.66px,#3d8d34,#488b32,#56872e,#678228,#787a20,#897113 768px,#398d36 768px,#3d8d35,#488b33,#56872f,#678229,#787a21,#897114 853.33px,#398d37 853.33px,#3d8c36,#488a34,#568730,#67822a,#787a22,#897116 938.66px,#398d37 938.66px,#3d8c37,#488a34,#568730,#67812b,#787a23,#897117 1024px,#398d38 1024px,#3d8c37,#488a35,#568731,#67812c,#787a24,#897118 1109.33px,#398d39 1109.33px,#3d8c38,#488a36,#568732,#67812c,#787a24,#897119 1194.66px,#398d3a 1194.66px,#3d8c39,#488a37,#568733,#67812d,#787a25,#89711b 1280px,#398d3a 1280px,#3d8c3a,#488a38,#568734,#67812e,#787a26,#89711c 1365.33px)"></i>
<i class="m6" style="background:linear-gradient(90deg,#2b9000 0px,#2f9000,#388e00,#468c00,#568800,#668300,#777c00 85.33px,#2b9000 85.33px,#2f9000,#398e00,#468c00,#568800,#668300,#777c00 170.67px,#2b9000 170.67px,#2f9000,#398e00,#468c00,#568800,#668200,#777c00 256px,#2b9008 256px,#2f8f03,#398e00,#468c00,#568800,#668200,#777c00 341.33px,#2b900b 341.33px,#2f8f09,#398e00,#468c00,#568800,#668200,#777c00 426.67px,#2b900d 426.67px,#2f8f0c,#398e00,#468c00,#568800,#668200,#777c00 512px,#2b900f 512px,#2f8f0e,#398e08,#468c00,#568800,#668200,#777c00 597.33px,#2b9011 597.33px,#2f8f10,#398e0b,#468c00,#568800,#668200,#777c00 682.66px,#2b9013 682.66px,#2f8f12,#398e0d,#468c00,#568800,#668200,#777b00 768px,#2b9014 768px,#2f8f13,#398e0f,#468c00,#568800,#668200,#777b00 853.33px,#2b9016 853.33px,#2f8f15,#398e11,#468b08,#568800,#668200,#777b00 938.66px,#2b9017 938.66px,#2f8f16,#398e13,#468b0b,#568800,#668200,#777b00 1024px,#2b9018 1024px,#2f8f17,#398e14,#468b0e,#568800,#668200,#777b00 1109.33px,#2b9019 1109.33px,#2f8f18,#398e16,#468b10,#568800,#668200,#777b00 1194.66px,#2b901b 1194.66px,#2f8f1a,#398e17,#468b11,#568800,#668200,#777b00 1280px,#2b901c 1280px,#2f8f1b,#398e18,#468b13,#568805,#668200,#777b00 1365.33px)"></i>
</div>
<div class="tr" style="top:597.33px">
<i class="m0" style="background:linear-gradient(90deg,#7c61dc 0px,#845ed1,#9357bc,#a44ca3,#b23c8c,#bf2276,#cb0061 85.33px,#7c61dd 85.33px,#845ed2,#9357bd,#a34ca4,#b23c8d,#bf2277,#cb0062 170.67px,#7c61de 170.67px,#845ed3,#9357bd,#a34ca5,#b23c8e,#bf2277,#cb0063 256px,#7b61de 256px,#845ed3,#9357be,#a34ca6,#b23c8f,#bf2178,#cb0064 341.33px,#7b61df 341.33px,#845ed4,#9357bf,#a34ba7,#b23c90,#bf2179,#cb0064 426.67px,#7b60e0 426.67px,#835ed5,#9357c0,#a34ba8,#b23b90,#bf217a,#cb0065 512px,#7b60e0 512px,#835ed6,#9356c1,#a34ba9,#b23b91,#bf217b,#cb0066 597.33px,#7b60e1 597.33px,#835dd7,#9256c2,#a34baa,#b23b92,#bf217c,#cb0067 682.66px,#7b60e2 682.66px,#835dd7,#9256c3,#a34bab,#b13b93,#bf217d,#cb0068 768px,#7b60e3 768px,#835dd8,#9256c4,#a24bac,#b13b94,#bf217e,#cb0069 853.33px,#7b60e3 853.33px,#835dd9,#9256c4,#a24bad,#b13b95,#bf217f,#ca006a 938.66px,#7b60e4 938.66px,#835dda,#9256c5,#a24bae,#b13b96,#be2180,#ca006b 1024px,#7b5fe5 1024px,#835dda,#9256c6,#a24baf,#b13b97,#be2080,#ca006b 1109.33px,#7b5fe5 1109.33px,#835ddb,#9256c7,#a24baf,#b13b98,#be2081,#ca006c 1194.66px,#7b5fe6 1194.66px,#835cdc,#9156c8,#a24bb0,#b13b99,#be2082,#ca006d 1280px,#7b5fe7 1280px,#825cdd,#9156c9,#a24bb1,#b13b9a,#be2083,#ca006e 1365.33px)"></i>
<i class="m1" style="background:linear-gradient(90deg,#6872c0 0px,#746eba,#8764ac,#9b5899,#ac4885,#ba3371,#c7005d 85.33px,#6872c1 85.33px,#746ebb,#8764ad,#9b589a,#ac4886,#ba3372,#c7005e 170.67px,#6872c2 170.67px,#746ebc,#8764ae,#9b589b,#ab4887,#ba3372,#c7005f 256px,#6972c2 256px,#736dbc,#8764af,#9a589c,#ab4888,#ba3273,#c70060 341.33px,#6971c3 341.33px,#736dbd,#8764af,#9a589d,#ab4888,#ba3274,#c70061 426.67px,#6971c4 426.67px,#736dbe,#8764b0,#9a579e,#ab4889,#ba3275,#c70062 512px,#6971c5 512px,#736dbf,#8764b1,#9a579f,#ab488a,#ba3276,#c70063 597.33px,#6971c6 597.33px,#736dc0,#8764b2,#9a57a0,#ab488b,#ba3277,#c70063 682.66px,#6971c7 682.66px,#736dc1,#8664b3,#9a57a0,#ab488c,#ba3278,#c70064 768px,#6970c8 768px,#736cc2,#8663b4,#9a57a1,#ab478d,#ba3279,#c60065 853.33px,#6970c8 853.33px,#736cc3,#8663b5,#9a57a2,#ab478e,#b9327a,#c60066 938.66px,#6970c9 938.66px,#736cc3,#8663b6,#9a57a3,#ab478f,#b9327a,#c60067 1024px,#6970ca 1024px,#736cc4,#8663b7,#9957a4,#ab4790,#b9327b,#c60068 1109.33px,#6970cb 1109.33px,#736cc5,#8663b8,#9957a5,#aa4791,#b9327c,#c60069 1194.66px,#696fcc 1194.66px,#736cc6,#8663b8,#9957a6,#aa4792,#b9327d,#c60069 1280px,#696fcd 1280px,#736bc7,#8663b9,#9957a7,#aa4793,#b9317e,#c6006a 1365.33px)"></i>
<i class="m2" style="background:linear-gradient(90deg,#587e9a 0px,#617b97,#74748f,#8a6983,#9d5c75,#ae4b64,#bd3354 85.33px,#587e9b 85.33px,#617b98,#747490,#8a6984,#9d5c75,#ae4b65,#bd3355 170.67px,#587e9b 170.67px,#617b99,#747491,#896985,#9d5c76,#ae4b66,#bd3356 256px,#587e9c 256px,#617b99,#747492,#896986,#9d5b77,#ae4a67,#bd3357 341.33px,#587e9d 341.33px,#617b9a,#747493,#896987,#9d5b78,#ae4a68,#bd3357 426.67px,#587e9e 426.67px,#617b9b,#747494,#896988,#9d5b79,#ae4a69,#bc3358 512px,#587e9f 512px,#617b9c,#747495,#896989,#9d5b7a,#ae4a6a,#bc3359 597.33px,#587ea0 597.33px,#617b9d,#747495,#89698a,#9d5b7b,#ae4a6b,#bc335a 682.66px,#587da1 682.66px,#617b9e,#747396,#89698a,#9c5b7c,#ae4a6b,#bc335b 768px,#587da2 768px,#617a9f,#747397,#89698b,#9c5b7d,#ad4a6c,#bc335c 853.33px,#587da3 853.33px,#617aa0,#747398,#89698c,#9c5b7d,#ad4a6d,#bc335d 938.66px,#587da4 938.66px,#617aa1,#747399,#89698d,#9c5b7e,#ad4a6e,#bc325d 1024px,#587da5 1024px,#617aa2,#74739a,#89688e,#9c5b7f,#ad4a6f,#bc325e 1109.33px,#587da6 1109.33px,#617aa3,#74739b,#89688f,#9c5b80,#ad4a70,#bc325f 1194.66px,#587da6 1194.66px,#617aa3,#73739c,#886890,#9c5b81,#ad4a71,#bc3260 1280px,#587da7 1280px,#617aa4,#73739d,#886891,#9c5b82,#ad4a72,#bc3261 1365.33px)"></i>
<i class="m3" style="background:linear-gradient(90deg,#4d8576 0px,#548375,#647f70,#777769,#8b6d5f,#9d5f53,#ad4f46 85.33px,#4d8577 85.33px,#548376,#647f71,#77776a,#8b6c60,#9d5f54,#ad4f47 170.67px,#4d8578 170.67px,#548377,#647f72,#77776b,#8b6c61,#9d5f55,#ad4f47 256px,#4d8579 256px,#548377,#637f73,#77776b,#8b6c61,#9d5f55,#ad4f48 341.33px,#4d857a 341.33px,#548378,#637f74,#77776c,#8b6c62,#9d5f56,#ad4f49 426.67px,#4d857b 426.67px,#548379,#637e75,#77776d,#8a6c63,#9d5f57,#ad4f4a 512px,#4d857c 512px,#54837a,#637e76,#77776e,#8a6c64,#9d5f58,#ad4f4b 597.33px,#4d857d 597.33px,#54837b,#637e76,#77776f,#8a6c65,#9d5f59,#ad4f4c 682.66px,#4d857d 682.66px,#54837c,#637e77,#777770,#8a6c66,#9d5f5a,#ad4f4c 768px,#4d857e 768px,#54837d,#637e78,#777771,#8a6c66,#9d5f5a,#ad4f4d 853.33px,#4d857f 853.33px,#54837e,#637e79,#767671,#8a6c67,#9d5f5b,#ad4e4e 938.66px,#4d8480 938.66px,#54837e,#637e7a,#767672,#8a6c68,#9d5f5c,#ad4e4f 1024px,#4d8481 1024px,#54837f,#637e7b,#767673,#8a6c69,#9d5f5d,#ad4e50 1109.33px,#4d8482 1109.33px,#548380,#637e7c,#767674,#8a6c6a,#9c5f5e,#ad4e50 1194.66px,#4d8483 1194.66px,#548381,#637e7d,#767675,#8a6c6b,#9c5f5f,#ad4e51 1280px,#4d8484 1280px,#548282,#637e7d,#767676,#8a6c6b,#9c5f5f,#ad4e52 1365.33px)"></i>
<i class="m4" style="background:linear-gradient(90deg,#448a57 0px,#498956,#558654,#66804f,#787947,#8a6f3e,#9c6334 85.33px,#448a58 85.33px,#498957,#558654,#66804f,#787948,#8a6f3f,#9c6335 170.67px,#448a59 170.67px,#498858,#558555,#668050,#787949,#8a6f40,#9c6335 256px,#448a5a 256px,#498859,#558556,#668051,#78794a,#8a6f41,#9b6336 341.33px,#448a5b 341.33px,#49885a,#558557,#668052,#78794b,#8a6f42,#9b6337 426.67px,#44895c 426.67px,#49885b,#558558,#668053,#78794b,#8a6f42,#9b6238 512px,#44895c 512px,#49885b,#558558,#668053,#78794c,#8a6f43,#9b6239 597.33px,#44895d 597.33px,#49885c,#558559,#668054,#78794d,#8a6f44,#9b6239 682.66px,#44895e 682.66px,#49885d,#55855a,#668055,#78784e,#8a6f45,#9b623a 768px,#44895f 768px,#49885e,#55855b,#668056,#78784f,#8a6f46,#9b623b 853.33px,#448960 853.33px,#49885f,#55855c,#668057,#78784f,#8a6f46,#9b623c 938.66px,#438960 938.66px,#49885f,#55855c,#668057,#787850,#8a6f47,#9b623d 1024px,#438961 1024px,#498860,#55855d,#668058,#787851,#8a6f48,#9b623d 1109.33px,#438962 1109.33px,#498861,#55855e,#668059,#787852,#8a6e49,#9b623e 1194.66px,#438963 1194.66px,#488862,#55855f,#65805a,#787853,#8a6e4a,#9b623f 1280px,#438964 1280px,#488863,#558560,#65805b,#787853,#8a6e4a,#9b6240 1365.33px)"></i>
<i class="m5" style="background:linear-gradient(90deg,#398d3b 0px,#3d8c3a,#488a38,#568735,#67812f,#787a27,#89711d 85.33px,#398d3c 85.33px,#3d8c3b,#488a39,#568735,#678130,#787a28,#89711e 170.67px,#398d3d 170.67px,#3d8c3c,#488a3a,#568736,#678130,#787a29,#89711f 256px,#398d3e 256px,#3d8c3d,#478a3b,#568737,#678131,#787a2a,#897120 341.33px,#398d3e 341.33px,#3d8c3e,#478a3c,#568738,#678132,#787a2b,#897121 426.67px,#398d3f 426.67px,#3d8c3e,#478a3c,#568739,#678133,#787a2b,#897122 512px,#398d40 512px,#3d8c3f,#478a3d,#568739,#678134,#787a2c,#897123 597.33px,#398d41 597.33px,#3d8c40,#478a3e,#56873a,#678135,#787a2d,#897124 682.66px,#398d42 682.66px,#3d8c41,#478a3f,#56873b,#678135,#787a2e,#897125 768px,#398d42 768px,#3d8c42,#478a3f,#56863c,#678136,#787a2f,#897125 853.33px,#398d43 853.33px,#3d8c42,#478a40,#56863c,#678137,#787a30,#897126 938.66px,#398d44 938.66px,#3d8c43,#478a41,#56863d,#678138,#787a30,#897127 1024px,#398d45 1024px,#3d8c44,#478a42,#56863e,#678139,#787a31,#897128 1109.33px,#398d45 1109.33px,#3d8c45,#478a43,#56863f,#678139,#787a32,#897129 1194.66px,#398d46 1194.66px,#3d8c45,#478a43,#568640,#67813a,#787a33,#89712a 1280px,#398d47 1280px,#3d8c46,#478a44,#568640,#67813b,#787a34,#89712b 1365.33px)"></i>
<i class="m6" style="background:linear-gradient(90deg,#2c901d 0px,#2f8f1c,#398e19,#468b14,#568809,#668200,#777b00 85.33px,#2c901e 85.33px,#2f8f1d,#398e1b,#468b16,#56880c,#668200,#777b00 170.67px,#2c901f 170.67px,#308f1e,#398e1c,#468b17,#56870e,#668200,#777b00 256px,#2c9020 256px,#308f1f,#398e1d,#468b18,#568710,#668200,#777b00 341.33px,#2c9021 341.33px,#308f20,#398e1e,#468b1a,#568712,#668200,#777b00 426.67px,#2c9022 426.67px,#308f21,#398e1f,#468b1b,#568714,#668200,#777b00 512px,#2c9023 512px,#308f22,#398e20,#468b1c,#568715,#668200,#777b00 597.33px,#2c9024 597.33px,#308f23,#398e21,#468b1d,#568716,#668208,#777b00 682.66px,#2c9025 682.66px,#308f24,#398e22,#478b1e,#568718,#66820b,#777b00 768px,#2c9025 768px,#308f25,#398e23,#478b1f,#568719,#67820d,#777b00 853.33px,#2c9026 853.33px,#308f26,#398e24,#478b20,#56871a,#678210,#777b00 938.66px,#2c9027 938.66px,#308f27,#398e25,#478b21,#56871b,#678211,#777b00 1024px,#2c9028 1024px,#308f27,#398e26,#478b22,#56871c,#678213,#777b00 1109.33px,#2c8f29 1109.33px,#308f28,#398e26,#478b23,#56871d,#678214,#777b00 1194.66px,#2c8f2a 1194.66px,#308f29,#398e27,#478b24,#56871e,#678216,#777b00 1280px,#2c8f2b 1280px,#308f2a,#398e28,#478b25,#56871f,#678217,#777b00 1365.33px)"></i>
</div>
<div class="tr" style="top:682.66px">
<i class="m0" style="background:linear-gradient(90deg,#7b5fe7 0px,#825cdd,#9155ca,#a14ab2,#b13b9b,#be2084,#ca006f 85.33px,#7b5fe8 85.33px,#825cde,#9155cb,#a14ab3,#b03b9c,#be2085,#ca0070 170.67px,#7b5ee9 170.67px,#825cdf,#9155cb,#a14ab4,#b03a9c,#be2086,#ca0071 256px,#7b5ee9 256px,#825ce0,#9155cc,#a14ab5,#b03a9d,#be1f87,#ca0072 341.33px,#7b5eea 341.33px,#825ce1,#9155cd,#a14ab6,#b03a9e,#be1f88,#ca0072 426.67px,#7b5eeb 426.67px,#825be1,#9055ce,#a14ab7,#b03a9f,#be1f89,#ca0073 512px,#7b5eeb 512px,#825be2,#9055cf,#a14ab8,#b03aa0,#bd1f89,#ca0074 597.33px,#7a5eec 597.33px,#825be3,#9055d0,#a04ab9,#b03aa1,#bd1f8a,#ca0075 682.66px,#7a5ded 682.66px,#825be4,#9054d1,#a04ab9,#b03aa2,#bd1f8b,#ca0076 768px,#7a5ded 768px,#815be4,#9054d1,#a04aba,#af3aa3,#bd1f8c,#ca0077 853.33px,#7a5dee 853.33px,#815be5,#9054d2,#a049bb,#af3aa4,#bd1e8d,#c90078 938.66px,#7a5def 938.66px,#815be6,#9054d3,#a049bc,#af3aa5,#bd1e8e,#c90079 1024px,#7a5def 1024px,#815ae7,#8f54d4,#a049bd,#af3aa6,#bd1e8f,#c90079 1109.33px,#7a5df0 1109.33px,#815ae7,#8f54d5,#a049be,#af39a6,#bd1e90,#c9007a 1194.66px,#7a5cf1 1194.66px,#815ae8,#8f54d6,#9f49bf,#af39a7,#bd1e91,#c9007b 1280px,#7a5cf1 1280px,#815ae9,#8f54d6,#9f49c0,#af39a8,#bd1e92,#c9007c 1365.33px)"></i>
<i class="m1" style="background:linear-gradient(90deg,#696fce 0px,#736bc8,#8663ba,#9956a8,#aa4793,#b9317f,#c6006b 85.33px,#696fce 85.33px,#736bc9,#8663bb,#9956a9,#aa4794,#b93180,#c6006c 170.67px,#696fcf 170.67px,#736bca,#8562bc,#9956aa,#aa4795,#b93181,#c6006d 256px,#696ed0 256px,#736bca,#8562bd,#9956ab,#aa4796,#b93182,#c6006e 341.33px,#696ed1 341.33px,#736bcb,#8562be,#9856ab,#aa4797,#b93183,#c6006f 426.67px,#696ed2 426.67px,#736acc,#8562bf,#9856ac,#aa4798,#b93183,#c6006f 512px,#696ed3 512px,#736acd,#8562c0,#9856ad,#aa4699,#b93184,#c60070 597.33px,#696ed3 597.33px,#736ace,#8562c1,#9856ae,#a9469a,#b83185,#c60071 682.66px,#696dd4 682.66px,#736acf,#8562c1,#9856af,#a9469b,#b83186,#c60072 768px,#696dd5 768px,#736ad0,#8562c2,#9856b0,#a9469c,#b83187,#c60073 853.33px,#696dd6 853.33px,#736ad0,#8561c3,#9856b1,#a9469c,#b83088,#c60074 938.66px,#6a6dd7 938.66px,#7369d1,#8561c4,#9855b2,#a9469d,#b83089,#c50075 1024px,#6a6dd8 1024px,#7369d2,#8461c5,#9855b3,#a9469e,#b8308a,#c50076 1109.33px,#6a6cd8 1109.33px,#7369d3,#8461c6,#9755b4,#a9469f,#b8308b,#c50076 1194.66px,#6a6cd9 1194.66px,#7369d4,#8461c7,#9755b4,#a946a0,#b8308b,#c50077 1280px,#6a6cda 1280px,#7369d5,#8461c8,#9755b5,#a946a1,#b8308c,#c50078 1365.33px)"></i>
<i class="m2" style="background:linear-gradient(90deg,#587ca8 0px,#617aa5,#73739e,#886892,#9c5b83,#ad4a72,#bc3262 85.33px,#587ca9 85.33px,#617aa6,#73739f,#886893,#9c5b84,#ad4a73,#bc3262 170.67px,#587caa 170.67px,#6179a7,#73739f,#886893,#9c5b85,#ad4a74,#bc3263 256px,#587cab 256px,#6179a8,#7372a0,#886894,#9c5a85,#ad4a75,#bc3264 341.33px,#587cac 341.33px,#6179a9,#7372a1,#886895,#9c5a86,#ad4976,#bc3265 426.67px,#587cad 426.67px,#6179aa,#7372a2,#886896,#9b5a87,#ad4977,#bc3266 512px,#587cae 512px,#6179ab,#7372a3,#886897,#9b5a88,#ad4978,#bc3267 597.33px,#587caf 597.33px,#6179ac,#7372a4,#886898,#9b5a89,#ad4978,#bc3167 682.66px,#587baf 682.66px,#6179ad,#7372a5,#886899,#9b5a8a,#ad4979,#bc3168 768px,#587bb0 768px,#6079ad,#7372a6,#88679a,#9b5a8b,#ac497a,#bc3169 853.33px,#587bb1 853.33px,#6078ae,#7372a7,#87679b,#9b5a8c,#ac497b,#bc316a 938.66px,#587bb2 938.66px,#6078af,#7272a8,#87679b,#9b5a8c,#ac497c,#bc316b 1024px,#587bb3 1024px,#6078b0,#7272a8,#87679c,#9b5a8d,#ac497d,#bb316c 1109.33px,#587bb4 1109.33px,#6078b1,#7271a9,#87679d,#9b5a8e,#ac497e,#bb316d 1194.66px,#587bb5 1194.66px,#6078b2,#7271aa,#87679e,#9b5a8f,#ac497f,#bb316d 1280px,#587ab6 1280px,#6078b3,#7271ab,#87679f,#9b5a90,#ac497f,#bb316e 1365.33px)"></i>
<i class="m3" style="background:linear-gradient(90deg,#4d8484 0px,#538283,#637e7e,#767677,#8a6c6c,#9c5f60,#ad4e53 85.33px,#4d8485 85.33px,#538284,#637e7f,#767677,#8a6c6d,#9c5f61,#ad4e54 170.67px,#4c8486 170.67px,#538285,#637e80,#767678,#8a6c6e,#9c5f62,#ad4e54 256px,#4c8487 256px,#538285,#637e81,#767679,#8a6c6f,#9c5f63,#ad4e55 341.33px,#4c8488 341.33px,#538286,#627e82,#76767a,#8a6c70,#9c5e63,#ad4e56 426.67px,#4c8489 426.67px,#538287,#627d83,#76767b,#8a6b71,#9c5e64,#ad4e57 512px,#4c848a 512px,#538288,#627d83,#76767c,#8a6b71,#9c5e65,#ad4e58 597.33px,#4c848b 597.33px,#538289,#627d84,#76767d,#8a6b72,#9c5e66,#ad4e58 682.66px,#4c838b 682.66px,#53828a,#627d85,#76767e,#8a6b73,#9c5e67,#ad4e59 768px,#4c838c 768px,#53828b,#627d86,#76767e,#896b74,#9c5e68,#ad4e5a 853.33px,#4c838d 853.33px,#53828c,#627d87,#76767f,#896b75,#9c5e68,#ad4e5b 938.66px,#4c838e 938.66px,#53828c,#627d88,#757580,#896b76,#9c5e69,#ad4e5c 1024px,#4c838f 1024px,#53818d,#627d89,#757581,#896b77,#9c5e6a,#ad4d5d 1109.33px,#4c8390 1109.33px,#53818e,#627d8a,#757582,#896b77,#9c5e6b,#ad4d5d 1194.66px,#4c8391 1194.66px,#53818f,#627d8a,#757583,#896b78,#9c5e6c,#ad4d5e 1280px,#4c8392 1280px,#528190,#627d8b,#757584,#896b79,#9c5e6d,#ad4d5f 1365.33px)"></i>
<i class="m4" style="background:linear-gradient(90deg,#438965 0px,#488863,#558561,#65805b,#787854,#8a6e4b,#9b6241 85.33px,#438965 85.33px,#488864,#558561,#65805c,#787855,#8a6e4c,#9b6241 170.67px,#438966 170.67px,#488865,#558562,#65805d,#787856,#8a6e4d,#9b6242 256px,#438967 256px,#488866,#548563,#65805e,#787857,#8a6e4e,#9b6243 341.33px,#438968 341.33px,#488867,#548564,#65805f,#787857,#8a6e4e,#9b6244 426.67px,#438969 426.67px,#488868,#548565,#657f5f,#787858,#8a6e4f,#9b6245 512px,#438969 512px,#488868,#548565,#657f60,#787859,#8a6e50,#9b6245 597.33px,#43896a 597.33px,#488869,#548566,#657f61,#78785a,#8a6e51,#9b6246 682.66px,#43896b 682.66px,#48886a,#548567,#657f62,#78785b,#8a6e52,#9b6247 768px,#43896c 768px,#48876b,#548568,#657f63,#78785b,#8a6e52,#9b6248 853.33px,#43896d 853.33px,#48876c,#548469,#657f64,#78785c,#8a6e53,#9b6249 938.66px,#43886e 938.66px,#48876d,#54846a,#657f64,#78785d,#8a6e54,#9b6249 1024px,#42886e 1024px,#48876d,#54846a,#657f65,#78785e,#8a6e55,#9b624a 1109.33px,#42886f 1109.33px,#48876e,#54846b,#657f66,#77785f,#8a6e55,#9b624b 1194.66px,#428870 1194.66px,#48876f,#54846c,#657f67,#77785f,#8a6e56,#9b614c 1280px,#428871 1280px,#478770,#54846d,#657f68,#777860,#8a6e57,#9b614c 1365.33px)"></i>
<i class="m5" style="background:linear-gradient(90deg,#398d48 0px,#3d8c47,#478a45,#568641,#67813c,#787a34,#89702c 85.33px,#398d49 85.33px,#3d8c48,#478a46,#568642,#67813c,#787a35,#89702c 170.67px,#398d49 170.67px,#3d8c49,#478a46,#568643,#67813d,#787a36,#89702d 256px,#398c4a 256px,#3d8c49,#478a47,#568643,#67813e,#787a37,#89702e 341.33px,#398c4b 341.33px,#3d8c4a,#478a48,#568644,#67813f,#787a38,#89702f 426.67px,#398c4c 426.67px,#3d8c4b,#478a49,#568645,#678140,#787a38,#897030 512px,#398c4c 512px,#3d8c4c,#478a4a,#568646,#678140,#787a39,#897030 597.33px,#398c4d 597.33px,#3d8c4c,#478a4a,#568647,#678141,#78793a,#897031 682.66px,#398c4e 682.66px,#3d8c4d,#478a4b,#568647,#678142,#78793b,#897032 768px,#398c4f 768px,#3d8c4e,#478a4c,#568648,#678143,#78793c,#897033 853.33px,#398c50 853.33px,#3d8c4f,#478a4d,#568649,#678143,#78793c,#897034 938.66px,#398c50 938.66px,#3d8c50,#478a4d,#56864a,#678144,#78793d,#897035 1024px,#388c51 1024px,#3d8b50,#478a4e,#56864a,#678145,#78793e,#897035 1109.33px,#388c52 1109.33px,#3d8b51,#47894f,#56864b,#678146,#78793f,#897036 1194.66px,#388c53 1194.66px,#3d8b52,#478950,#56864c,#678047,#787940,#897037 1280px,#388c53 1280px,#3d8b53,#478951,#56864d,#678047,#787940,#897038 1365.33px)"></i>
<i class="m6" style="background:linear-gradient(90deg,#2c8f2c 0px,#308f2b,#398e29,#478b26,#568720,#678218,#777b08 85.33px,#2c8f2c 85.33px,#308f2c,#398e2a,#478b27,#568721,#67821a,#777b0b 170.67px,#2c8f2d 170.67px,#308f2d,#398e2b,#478b27,#568722,#67821b,#777b0e 256px,#2c8f2e 256px,#308f2d,#398e2c,#478b28,#568723,#67821c,#777b10 341.33px,#2c8f2f 341.33px,#308f2e,#398d2c,#478b29,#568724,#67821d,#777b11 426.67px,#2c8f30 426.67px,#308f2f,#398d2d,#478b2a,#568725,#67821e,#777b13 512px,#2c8f30 512px,#308f30,#398d2e,#478b2b,#568726,#67821f,#777b14 597.33px,#2c8f31 597.33px,#308f31,#398d2f,#478b2c,#568727,#678220,#777b16 682.66px,#2c8f32 682.66px,#308f31,#398d30,#478b2d,#568728,#678221,#777b17 768px,#2c8f33 768px,#308f32,#398d31,#478b2d,#568729,#678222,#777b18 853.33px,#2c8f34 853.33px,#308f33,#398d31,#478b2e,#56872a,#678223,#777b19 938.66px,#2c8f35 938.66px,#308f34,#398d32,#478b2f,#56872a,#678224,#777b1b 1024px,#2c8f35 1024px,#308f35,#398d33,#478b30,#56872b,#678225,#777b1c 1109.33px,#2c8f36 1109.33px,#308f35,#398d34,#478b31,#56872c,#678226,#777b1d 1194.66px,#2c8f37 1194.66px,#308f36,#398d35,#478b32,#56872d,#678227,#777b1e 1280px,#2c8f38 1280px,#308f37,#398d35,#478b32,#56872e,#678227,#777b1f 1365.33px)"></i>
</div>
<div class="tr" style="top:768.00px">
<i class="m0" style="background:linear-gradient(90deg,#7a5cf2 0px,#815ae9,#8f53d7,#9f49c1,#af39a9,#bd1d92,#c9007d 85.33px,#7a5cf3 85.33px,#815aea,#8f53d8,#9f49c1,#af39aa,#bc1d93,#c9007e 170.67px,#7a5cf3 170.67px,#8159eb,#8f53d9,#9f49c2,#ae39ab,#bc1d94,#c9007f 256px,#7a5cf4 256px,#8059ec,#8e53da,#9f49c3,#ae39ac,#bc1d95,#c9007f 341.33px,#7a5bf5 341.33px,#8059ec,#8e53db,#9f48c4,#ae39ad,#bc1d96,#c90080 426.67px,#795bf5 426.67px,#8059ed,#8e53db,#9e48c5,#ae39ae,#bc1c97,#c90081 512px,#795bf6 512px,#8059ee,#8e53dc,#9e48c6,#ae39af,#bc1c98,#c90082 597.33px,#795bf7 597.33px,#8059ef,#8e53dd,#9e48c7,#ae38af,#bc1c99,#c90083 682.66px,#795bf7 682.66px,#8059ef,#8e52de,#9e48c8,#ae38b0,#bc1c9a,#c80084 768px,#795bf8 768px,#8058f0,#8e52df,#9e48c8,#ad38b1,#bc1c9a,#c80085 853.33px,#795af9 853.33px,#8058f1,#8d52df,#9e48c9,#ad38b2,#bc1b9b,#c80086 938.66px,#795af9 938.66px,#8058f2,#8d52e0,#9e48ca,#ad38b3,#bb1b9c,#c80086 1024px,#795afa 1024px,#7f58f2,#8d52e1,#9d48cb,#ad38b4,#bb1b9d,#c80087 1109.33px,#795afb 1109.33px,#7f58f3,#8d52e2,#9d47cc,#ad38b5,#bb1b9e,#c80088 1194.66px,#795afb 1194.66px,#7f58f4,#8d52e3,#9d47cd,#ad38b6,#bb1b9f,#c80089 1280px,#795afc 1280px,#7f57f4,#8d52e4,#9d47ce,#ad38b7,#bb1aa0,#c8008a 1365.33px)"></i>
<i class="m1" style="background:linear-gradient(90deg,#6a6cdb 0px,#7369d5,#8461c8,#9755b6,#a846a2,#b8308d,#c50079 85.33px,#6a6cdc 85.33px,#7368d6,#8460c9,#9755b7,#a846a3,#b8308e,#c5007a 170.67px,#6a6bdd 170.67px,#7268d7,#8460ca,#9755b8,#a845a4,#b8308f,#c5007b 256px,#6a6bdd 256px,#7268d8,#8460cb,#9755b9,#a845a5,#b72f90,#c5007c 341.33px,#6a6bde 341.33px,#7268d9,#8460cc,#9754ba,#a845a5,#b72f91,#c5007c 426.67px,#6a6bdf 426.67px,#7268da,#8360cd,#9654bb,#a845a6,#b72f92,#c5007d 512px,#6a6be0 512px,#7267da,#8360ce,#9654bc,#a845a7,#b72f92,#c5007e 597.33px,#6a6ae1 597.33px,#7267db,#8360ce,#9654bc,#a845a8,#b72f93,#c5007f 682.66px,#6a6ae1 682.66px,#7267dc,#835fcf,#9654bd,#a845a9,#b72f94,#c50080 768px,#6a6ae2 768px,#7267dd,#835fd0,#9654be,#a745aa,#b72f95,#c50081 853.33px,#6a6ae3 853.33px,#7267de,#835fd1,#9654bf,#a745ab,#b72f96,#c40082 938.66px,#6a6ae4 938.66px,#7267df,#835fd2,#9654c0,#a745ac,#b72f97,#c40083 1024px,#6a69e5 1024px,#7266df,#835fd3,#9654c1,#a744ad,#b72e98,#c40083 1109.33px,#6a69e5 1109.33px,#7266e0,#835fd4,#9553c2,#a744ae,#b72e99,#c40084 1194.66px,#6a69e6 1194.66px,#7266e1,#825fd4,#9553c3,#a744ae,#b62e9a,#c40085 1280px,#6a69e7 1280px,#7266e2,#825ed5,#9553c4,#a744af,#b62e9a,#c40086 1365.33px)"></i>
<i class="m2" style="background:linear-gradient(90deg,#587ab7 0px,#6078b4,#7271ac,#8767a0,#9b5991,#ac4980,#bb316f 85.33px,#587ab7 85.33px,#6078b5,#7271ad,#8767a1,#9b5992,#ac4881,#bb3070 170.67px,#577ab8 170.67px,#6077b5,#7271ae,#8767a2,#9a5993,#ac4882,#bb3071 256px,#577ab9 256px,#6077b6,#7271af,#8767a3,#9a5994,#ac4883,#bb3072 341.33px,#577aba 341.33px,#6077b7,#7271b0,#8766a4,#9a5994,#ac4884,#bb3072 426.67px,#577abb 426.67px,#6077b8,#7271b0,#8666a4,#9a5995,#ac4885,#bb3073 512px,#5779bc 512px,#6077b9,#7270b1,#8666a5,#9a5996,#ac4885,#bb3074 597.33px,#5779bd 597.33px,#6077ba,#7170b2,#8666a6,#9a5997,#ac4886,#bb3075 682.66px,#5779be 682.66px,#6077bb,#7170b3,#8666a7,#9a5998,#ab4887,#bb3076 768px,#5779bf 768px,#6077bc,#7170b4,#8666a8,#9a5999,#ab4888,#bb3077 853.33px,#5779bf 853.33px,#6076bd,#7170b5,#8666a9,#9a599a,#ab4889,#bb3078 938.66px,#5779c0 938.66px,#6076bd,#7170b6,#8666aa,#9a599b,#ab488a,#bb2f78 1024px,#5779c1 1024px,#6076be,#7170b7,#8666ab,#9a599b,#ab488b,#bb2f79 1109.33px,#5778c2 1109.33px,#6076bf,#7170b8,#8666ab,#99589c,#ab488c,#bb2f7a 1194.66px,#5778c3 1194.66px,#5f76c0,#716fb8,#8666ac,#99589d,#ab478c,#ba2f7b 1280px,#5778c4 1280px,#5f76c1,#716fb9,#8565ad,#99589e,#ab478d,#ba2f7c 1365.33px)"></i>
<i class="m3" style="background:linear-gradient(90deg,#4c8392 0px,#528191,#627d8c,#757584,#896b7a,#9c5e6e,#ac4d60 85.33px,#4b8393 85.33px,#528192,#627d8d,#757585,#896b7b,#9c5e6e,#ac4d61 170.67px,#4b8394 170.67px,#528193,#617d8e,#757586,#896b7c,#9c5e6f,#ac4d61 256px,#4b8395 256px,#528193,#617c8f,#757587,#896b7c,#9c5e70,#ac4d62 341.33px,#4b8296 341.33px,#528194,#617c90,#757588,#896b7d,#9b5e71,#ac4d63 426.67px,#4b8297 426.67px,#528195,#617c91,#757589,#896b7e,#9b5d72,#ac4d64 512px,#4b8298 512px,#528196,#617c91,#75758a,#896a7f,#9b5d73,#ac4d65 597.33px,#4b8299 597.33px,#528197,#617c92,#75758a,#896a80,#9b5d73,#ac4d66 682.66px,#4b8299 682.66px,#528098,#617c93,#75758b,#896a81,#9b5d74,#ac4d66 768px,#4b829a 768px,#528099,#617c94,#74758c,#896a82,#9b5d75,#ac4d67 853.33px,#4b829b 853.33px,#528099,#617c95,#74748d,#886a82,#9b5d76,#ac4d68 938.66px,#4b829c 938.66px,#52809a,#617c96,#74748e,#886a83,#9b5d77,#ac4d69 1024px,#4b829d 1024px,#51809b,#617c97,#74748f,#886a84,#9b5d78,#ac4c6a 1109.33px,#4b829e 1109.33px,#51809c,#617c97,#747490,#886a85,#9b5d78,#ac4c6a 1194.66px,#4a829f 1194.66px,#51809d,#617c98,#747490,#886a86,#9b5d79,#ac4c6b 1280px,#4a82a0 1280px,#51809e,#607b99,#747491,#886a87,#9b5d7a,#ac4c6c 1365.33px)"></i>
<i class="m4" style="background:linear-gradient(90deg,#428872 0px,#478771,#54846e,#657f68,#777761,#8a6e58,#9b614d 85.33px,#428873 85.33px,#478771,#54846e,#657f69,#777762,#8a6e59,#9b614e 170.67px,#428873 170.67px,#478772,#54846f,#657f6a,#777763,#8a6e59,#9b614f 256px,#428874 256px,#478773,#548470,#657f6b,#777763,#8a6e5a,#9b6150 341.33px,#428875 341.33px,#478774,#548471,#657f6c,#777764,#8a6e5b,#9b6150 426.67px,#428876 426.67px,#478775,#538472,#657f6d,#777765,#8a6d5c,#9b6151 512px,#428877 512px,#478776,#538473,#647f6d,#776,#8a6d5d,#9b6152 597.33px,#428878 597.33px,#478776,#538473,#647f6e,#777767,#8a6d5d,#9b6153 682.66px,#428878 682.66px,#478777,#538474,#647f6f,#777768,#8a6d5e,#9b6154 768px,#418879 768px,#478778,#538475,#647f70,#777768,#8a6d5f,#9b6154 853.33px,#41887a 853.33px,#478779,#538476,#647e71,#777769,#8a6d60,#9b6155 938.66px,#41887b 938.66px,#47877a,#538477,#647e71,#77776a,#896d61,#9b6156 1024px,#41887c 1024px,#47877b,#538478,#647e72,#77776b,#896d61,#9b6157 1109.33px,#41887c 1109.33px,#46867b,#538478,#647e73,#77776c,#896d62,#9b6157 1194.66px,#41877d 1194.66px,#46867c,#538379,#647e74,#77776c,#896d63,#9b6158 1280px,#41877e 1280px,#46867d,#53837a,#647e75,#77776d,#896d64,#9b6159 1365.33px)"></i>
<i class="m5" style="background:linear-gradient(90deg,#388c54 0px,#3d8b53,#478951,#56864e,#678048,#787941,#897038 85.33px,#388c55 85.33px,#3d8b54,#478952,#56864e,#678049,#787942,#897039 170.67px,#388c56 170.67px,#3c8b55,#478953,#56864f,#67804a,#787943,#89703a 256px,#388c57 256px,#3c8b56,#478954,#568650,#67804a,#787943,#89703b 341.33px,#388c57 341.33px,#3c8b57,#478954,#568651,#67804b,#787944,#89703c 426.67px,#388c58 426.67px,#3c8b57,#478955,#568651,#66804c,#787945,#89703c 512px,#388c59 512px,#3c8b58,#478956,#568652,#66804d,#787946,#89703d 597.33px,#388c5a 597.33px,#3c8b59,#478957,#558653,#66804e,#787947,#89703e 682.66px,#388c5a 682.66px,#3c8b5a,#478958,#558554,#66804e,#787947,#89703f 768px,#388c5b 768px,#3c8b5a,#478958,#558555,#66804f,#787948,#897040 853.33px,#388c5c 853.33px,#3c8b5b,#478959,#558555,#668050,#787949,#897040 938.66px,#388c5d 938.66px,#3c8b5c,#46895a,#558556,#668051,#78794a,#897041 1024px,#388c5e 1024px,#3c8b5d,#46895b,#558557,#668051,#78794a,#896f42 1109.33px,#378c5e 1109.33px,#3c8b5e,#46895b,#558558,#668052,#78794b,#896f43 1194.66px,#378c5f 1194.66px,#3c8b5e,#46895c,#558558,#668053,#78794c,#896f43 1280px,#378c60 1280px,#3c8b5f,#46895d,#558559,#668054,#78794d,#896f44 1365.33px)"></i>
<i class="m6" style="background:linear-gradient(90deg,#2c8f38 0px,#308f38,#398d36,#478b33,#56872f,#678128,#787b20 85.33px,#2c8f39 85.33px,#308f39,#398d37,#478b34,#56872f,#678129,#787b21 170.67px,#2c8f3a 170.67px,#308f39,#398d38,#478b35,#568730,#67812a,#787a22 256px,#2c8f3b 256px,#308f3a,#398d39,#478b36,#568731,#67812b,#787a23 341.33px,#2c8f3c 341.33px,#308e3b,#398d39,#478b36,#568732,#67812c,#787a24 426.67px,#2c8f3c 426.67px,#308e3c,#398d3a,#478b37,#568733,#67812d,#787a25 512px,#2c8f3d 512px,#308e3d,#398d3b,#478b38,#568733,#67812d,#787a26 597.33px,#2c8f3e 597.33px,#308e3d,#398d3c,#478a39,#568734,#67812e,#787a26 682.66px,#2c8f3f 682.66px,#308e3e,#398d3c,#478a39,#568735,#67812f,#787a27 768px,#2c8f3f 768px,#308e3f,#398d3d,#478a3a,#568736,#678130,#787a28 853.33px,#2c8f40 853.33px,#308e40,#398d3e,#478a3b,#568737,#678131,#787a29 938.66px,#2c8f41 938.66px,#308e40,#398d3f,#478a3c,#568737,#678131,#787a2a 1024px,#2c8f42 1024px,#308e41,#398d40,#478a3d,#568638,#678132,#787a2b 1109.33px,#2b8f43 1109.33px,#308e42,#398d40,#478a3d,#568639,#678133,#787a2c 1194.66px,#2b8f43 1194.66px,#308e43,#398d41,#478a3e,#56863a,#678134,#787a2c 1280px,#2b8f44 1280px,#2f8e43,#398d42,#478a3f,#56863b,#678135,#787a2d 1365.33px)"></i>
</div>
<div class="tr" style="top:853.33px">
<i class="m0" style="background:linear-gradient(90deg,#7959fd 0px,#7f57f5,#8d51e4,#9d47cf,#ad37b7,#bb1aa1,#c8008b 85.33px,#7859fd 85.33px,#7f57f6,#8c51e5,#9d47cf,#ac37b8,#bb1aa2,#c8008c 170.67px,#7859fe 170.67px,#7f57f7,#8c51e6,#9d47d0,#ac37b9,#bb1aa2,#c8008d 256px,#7859ff 256px,#7f57f7,#8c51e7,#9c47d1,#ac37ba,#bb19a3,#c8008d 341.33px,#7859ff 341.33px,#7e57f8,#8c51e8,#9c47d2,#ac37bb,#bb19a4,#c8008e 426.67px,#7859ff 426.67px,#7e56f9,#8c51e8,#9c46d3,#ac37bc,#ba19a5,#c7008f 512px,#7858ff 512px,#7e56f9,#8c51e9,#9c46d4,#ac37bd,#ba19a6,#c70090 597.33px,#7858ff 597.33px,#7e56fa,#8b50ea,#9c46d5,#ac37be,#ba18a7,#c70091 682.66px,#7858ff 682.66px,#7e56fb,#8b50eb,#9c46d5,#ac36bf,#ba18a8,#c70092 768px,#7858ff 768px,#7e56fc,#8b50ec,#9b46d6,#ab36bf,#ba18a9,#c70093 853.33px,#7858ff 853.33px,#7e56fc,#8b50ec,#9b46d7,#ab36c0,#ba18a9,#c70093 938.66px,#7758ff 938.66px,#7e56fd,#8b50ed,#9b46d8,#ab36c1,#ba17aa,#c70094 1024px,#7757ff 1024px,#7d55fe,#8b50ee,#9b46d9,#ab36c2,#ba17ab,#c70095 1109.33px,#7757ff 1109.33px,#7d55fe,#8b50ef,#9b45da,#ab36c3,#ba17ac,#c70096 1194.66px,#7757ff 1194.66px,#7d55ff,#8a4fef,#9b45db,#ab36c4,#b916ad,#c70097 1280px,#7757ff 1280px,#7d55ff,#8a4ff0,#9a45db,#ab35c5,#b916ae,#c70098 1365.33px)"></i>
<i class="m1" style="background:linear-gradient(90deg,#6a69e8 0px,#7266e3,#825ed6,#9553c4,#a744b0,#b62e9b,#c40087 85.33px,#6a68e9 85.33px,#7265e3,#825ed7,#9553c5,#a644b1,#b62e9c,#c40088 170.67px,#6a68e9 170.67px,#7265e4,#825ed8,#9553c6,#a644b2,#b62e9d,#c40089 256px,#6a68ea 256px,#7265e5,#825ed9,#9553c7,#a644b3,#b62e9e,#c40089 341.33px,#6a68eb 341.33px,#7265e6,#825eda,#9453c8,#a644b4,#b62d9f,#c4008a 426.67px,#6a68ec 426.67px,#7165e7,#825eda,#9453c9,#a643b5,#b62da0,#c4008b 512px,#6a67ec 512px,#7165e7,#825ddb,#9452ca,#a643b5,#b62da1,#c4008c 597.33px,#6a67ed 597.33px,#7164e8,#815ddc,#9452ca,#a643b6,#b62da1,#c4008d 682.66px,#6a67ee 682.66px,#7164e9,#815ddd,#9452cb,#a643b7,#b52da2,#c3008e 768px,#6967ef 768px,#7164ea,#815dde,#9452cc,#a643b8,#b52da3,#c3008f 853.33px,#6967f0 853.33px,#7164eb,#815ddf,#9452cd,#a543b9,#b52da4,#c3008f 938.66px,#6966f0 938.66px,#7164eb,#815ddf,#9452ce,#a543ba,#b52ca5,#c30090 1024px,#6966f1 1024px,#7163ec,#815de0,#9352cf,#a543bb,#b52ca6,#c30091 1109.33px,#6966f2 1109.33px,#7163ed,#815ce1,#9352d0,#a543bc,#b52ca7,#c30092 1194.66px,#6966f3 1194.66px,#7163ee,#815ce2,#9351d1,#a542bc,#b52ca8,#c30093 1280px,#6966f3 1280px,#7163ef,#805ce3,#9351d1,#a542bd,#b52ca8,#c30094 1365.33px)"></i>
<i class="m2" style="background:linear-gradient(90deg,#5778c5 0px,#5f76c2,#716fba,#8565ae,#99589f,#ab478e,#ba2f7d 85.33px,#5778c6 85.33px,#5f75c3,#716fbb,#8565af,#9958a0,#ab478f,#ba2f7d 170.67px,#5778c6 170.67px,#5f75c4,#716fbc,#8565b0,#9958a1,#ab4790,#ba2f7e 256px,#5778c7 256px,#5f75c4,#706fbd,#8565b1,#9958a2,#ab4791,#ba2f7f 341.33px,#5777c8 341.33px,#5f75c5,#706fbe,#8565b2,#9958a3,#aa4792,#ba2e80 426.67px,#5777c9 426.67px,#5f75c6,#706fbf,#8565b3,#9958a3,#aa4792,#ba2e81 512px,#5777ca 512px,#5f75c7,#706fbf,#8565b3,#9958a4,#aa4793,#ba2e82 597.33px,#5777cb 597.33px,#5f75c8,#706ec0,#8565b4,#9858a5,#aa4794,#ba2e83 682.66px,#5777cc 682.66px,#5f74c9,#706ec1,#8564b5,#9857a6,#aa4795,#ba2e83 768px,#5777cc 768px,#5f74ca,#706ec2,#8464b6,#9857a7,#aa4696,#ba2e84 853.33px,#5776cd 853.33px,#5f74ca,#706ec3,#8464b7,#9857a8,#aa4697,#ba2e85 938.66px,#5776ce 938.66px,#5f74cb,#706ec4,#8464b8,#9857a9,#aa4698,#ba2e86 1024px,#5776cf 1024px,#5f74cc,#706ec5,#8464b9,#9857aa,#aa4699,#ba2d87 1109.33px,#5776d0 1109.33px,#5f74cd,#706ec6,#8464ba,#9857aa,#aa4699,#b92d88 1194.66px,#5776d1 1194.66px,#5f74ce,#6f6ec6,#8464ba,#9857ab,#aa469a,#b92d89 1280px,#5776d2 1280px,#5e73cf,#6f6dc7,#8464bb,#9857ac,#aa469b,#b92d89 1365.33px)"></i>
<i class="m3" style="background:linear-gradient(90deg,#4a81a0 0px,#51809f,#607b9a,#747492,#886a88,#9b5d7b,#ac4c6d 85.33px,#4a81a1 85.33px,#5180a0,#607b9b,#747493,#886a88,#9b5d7c,#ac4c6e 170.67px,#4a81a2 170.67px,#5180a0,#607b9c,#747494,#886a89,#9b5d7d,#ac4c6f 256px,#4a81a3 256px,#5180a1,#607b9d,#747495,#886a8a,#9b5d7d,#ac4c6f 341.33px,#4a81a4 341.33px,#517fa2,#607b9e,#747496,#886a8b,#9b5d7e,#ac4c70 426.67px,#4a81a5 426.67px,#517fa3,#607b9e,#747496,#88698c,#9b5c7f,#ac4c71 512px,#4a81a6 512px,#517fa4,#607b9f,#737497,#88698d,#9a5c80,#ac4c72 597.33px,#4a81a7 597.33px,#517fa5,#607ba0,#737398,#88698e,#9a5c81,#ac4c73 682.66px,#4a81a7 682.66px,#507fa6,#607ba1,#737399,#87698e,#9a5c82,#ab4c74 768px,#4a81a8 768px,#507fa7,#607ba2,#73739a,#87698f,#9a5c82,#ab4c74 853.33px,#4980a9 853.33px,#507fa7,#607ba3,#73739b,#876990,#9a5c83,#ab4b75 938.66px,#4980aa 938.66px,#507fa8,#5f7aa4,#73739c,#876991,#9a5c84,#ab4b76 1024px,#4980ab 1024px,#507fa9,#5f7aa4,#73739d,#876992,#9a5c85,#ab4b77 1109.33px,#4980ac 1109.33px,#507faa,#5f7aa5,#73739d,#876993,#9a5c86,#ab4b78 1194.66px,#4980ad 1194.66px,#507eab,#5f7aa6,#73739e,#876993,#9a5c87,#ab4b78 1280px,#4980ad 1280px,#507eac,#5f7aa7,#73739f,#876994,#9a5c87,#ab4b79 1365.33px)"></i>
<i class="m4" style="background:linear-gradient(90deg,#41877f 0px,#46867e,#53837b,#647e76,#77776e,#896d65,#9b615a 85.33px,#418780 85.33px,#46867f,#53837c,#647e76,#77776f,#896d65,#9b615b 170.67px,#418781 170.67px,#468680,#53837c,#647e77,#777770,#896d66,#9b615b 256px,#418781 256px,#468680,#53837d,#647e78,#777770,#896d67,#9b605c 341.33px,#408782 341.33px,#468681,#52837e,#647e79,#777771,#896d68,#9b605d 426.67px,#408783 426.67px,#468682,#52837f,#647e7a,#767672,#896d69,#9b605e 512px,#408784 512px,#468683,#528380,#647e7a,#767673,#896d69,#9b605f 597.33px,#408785 597.33px,#468684,#528381,#637e7b,#767674,#896d6a,#9b605f 682.66px,#408786 682.66px,#458685,#528381,#637e7c,#767675,#896d6b,#9b6060 768px,#408786 768px,#458685,#528382,#637e7d,#767675,#896c6c,#9b6061 853.33px,#408787 853.33px,#458686,#528383,#637e7e,#767676,#896c6d,#9b6062 938.66px,#408788 938.66px,#458687,#528384,#637e7f,#767677,#896c6e,#9b6063 1024px,#408789 1024px,#458688,#528385,#637e7f,#767678,#896c6e,#9b6063 1109.33px,#3f878a 1109.33px,#458589,#528386,#637d80,#767679,#896c6f,#9b6064 1194.66px,#3f868b 1194.66px,#45858a,#528386,#637d81,#767679,#896c70,#9a6065 1280px,#3f868b 1280px,#45858a,#518287,#637d82,#76767a,#896c71,#9a6066 1365.33px)"></i>
<i class="m5" style="background:linear-gradient(90deg,#378b61 0px,#3c8b60,#46895e,#55855a,#668055,#78794d,#896f45 85.33px,#378b62 85.33px,#3c8b61,#46895f,#55855b,#668055,#78794e,#896f46 170.67px,#378b62 170.67px,#3c8b62,#46895f,#55855c,#668056,#78794f,#896f46 256px,#378b63 256px,#3b8b62,#468960,#55855c,#668057,#787850,#896f47 341.33px,#378b64 341.33px,#3b8b63,#468961,#55855d,#668058,#787851,#896f48 426.67px,#378b65 426.67px,#3b8b64,#468962,#55855e,#668058,#787851,#896f49 512px,#378b65 512px,#3b8b65,#468963,#55855f,#668059,#787852,#896f4a 597.33px,#378b66 597.33px,#3b8a65,#468963,#558560,#66805a,#787853,#896f4a 682.66px,#378b67 682.66px,#3b8a66,#468864,#558560,#66805b,#787854,#896f4b 768px,#378b68 768px,#3b8a67,#468865,#558561,#667f5c,#787854,#896f4c 853.33px,#368b69 853.33px,#3b8a68,#468866,#558562,#667f5c,#787855,#896f4d 938.66px,#368b69 938.66px,#3b8a69,#468866,#558563,#667f5d,#787856,#896f4d 1024px,#368b6a 1024px,#3b8a69,#468867,#558563,#667f5e,#787857,#896f4e 1109.33px,#368b6b 1109.33px,#3b8a6a,#458868,#558564,#667f5f,#787857,#896f4f 1194.66px,#368b6c 1194.66px,#3b8a6b,#458869,#558565,#667f5f,#787858,#896f50 1280px,#368b6d 1280px,#3a8a6c,#45886a,#558566,#667f60,#787859,#896f50 1365.33px)"></i>
<i class="m6" style="background:linear-gradient(90deg,#2b8f45 0px,#2f8e44,#398d43,#478a40,#56863b,#678135,#787a2e 85.33px,#2b8f46 85.33px,#2f8e45,#398d43,#478a40,#56863c,#678136,#787a2f 170.67px,#2b8f46 170.67px,#2f8e46,#398d44,#478a41,#56863d,#678137,#787a30 256px,#2b8f47 256px,#2f8e47,#398d45,#478a42,#56863e,#678138,#787a31 341.33px,#2b8f48 341.33px,#2f8e47,#398d46,#478a43,#56863e,#678139,#787a31 426.67px,#2b8f49 426.67px,#2f8e48,#398d46,#478a43,#56863f,#678139,#787a32 512px,#2b8e49 512px,#2f8e49,#398d47,#478a44,#568640,#67813a,#787a33 597.33px,#2b8e4a 597.33px,#2f8e4a,#398d48,#478a45,#568641,#67813b,#787a34 682.66px,#2b8e4b 682.66px,#2f8e4a,#398d49,#478a46,#568641,#67813c,#787a35 768px,#2b8e4c 768px,#2f8e4b,#398d49,#478a47,#568642,#67813c,#787a35 853.33px,#2b8e4c 853.33px,#2f8e4c,#398c4a,#478a47,#568643,#67813d,#787a36 938.66px,#2b8e4d 938.66px,#2f8e4d,#398c4b,#478a48,#568644,#67813e,#787a37 1024px,#2b8e4e 1024px,#2f8e4d,#398c4c,#478a49,#568645,#67813f,#787a38 1109.33px,#2b8e4f 1109.33px,#2f8e4e,#398c4c,#478a4a,#568645,#678140,#787a38 1194.66px,#2b8e4f 1194.66px,#2f8e4f,#398c4d,#478a4a,#568646,#678140,#787a39 1280px,#2b8e50 1280px,#2f8e50,#398c4e,#468a4b,#568647,#678141,#787a3a 1365.33px)"></i>
</div>
<div class="tr" style="top:938.66px">
<i class="m0" style="background:linear-gradient(90deg,#7757ff 0px,#7d55ff,#8a4ff1,#9a45dc,#aa35c6,#b916af,#c60099 85.33px,#7756ff 85.33px,#7d55ff,#8a4ff2,#9a45dd,#aa35c6,#b916b0,#c6009a 170.67px,#7756ff 170.67px,#7d54ff,#8a4ff3,#9a45de,#aa35c7,#b915b0,#c6009a 256px,#7756ff 256px,#7d54ff,#8a4ff3,#9a45df,#aa35c8,#b915b1,#c6009b 341.33px,#7756ff 341.33px,#7c54ff,#894ef4,#9a45e0,#aa35c9,#b915b2,#c6009c 426.67px,#7656ff 426.67px,#7c54ff,#894ef5,#9a44e0,#aa35ca,#b914b3,#c6009d 512px,#7656ff 512px,#7c54ff,#894ef6,#9944e1,#aa34cb,#b814b4,#c6009e 597.33px,#7655ff 597.33px,#7c54ff,#894ef6,#9944e2,#a934cc,#b813b5,#c6009f 682.66px,#7655ff 682.66px,#7c53ff,#894ef7,#9944e3,#a934cc,#b813b6,#c600a0 768px,#7655ff 768px,#7c53ff,#894ef8,#9944e4,#a934cd,#b813b7,#c600a0 853.33px,#7655ff 853.33px,#7c53ff,#884ef9,#9944e5,#a934ce,#b812b7,#c600a1 938.66px,#7655ff 938.66px,#7b53ff,#884dfa,#9944e5,#a934cf,#b812b8,#c500a2 1024px,#7655ff 1024px,#7b53ff,#884dfa,#9843e6,#a934d0,#b811b9,#c500a3 1109.33px,#7554ff 1109.33px,#7b52ff,#884dfb,#9843e7,#a833d1,#b811ba,#c500a4 1194.66px,#7554ff 1194.66px,#7b52ff,#884dfc,#9843e8,#a833d2,#b710bb,#c500a5 1280px,#7554ff 1280px,#7b52ff,#884dfd,#9843e9,#a833d2,#b710bc,#c500a6 1365.33px)"></i>
<i class="m1" style="background:linear-gradient(90deg,#6965f4 0px,#7163ef,#805ce4,#9351d2,#a542be,#b52ca9,#c30095 85.33px,#6965f5 85.33px,#7163f0,#805ce4,#9351d3,#a442bf,#b42caa,#c30095 170.67px,#6965f6 170.67px,#7162f1,#805ce5,#9351d4,#a442c0,#b42bab,#c30096 256px,#6965f7 256px,#7062f2,#805be6,#9251d5,#a442c1,#b42bac,#c30097 341.33px,#6965f7 341.33px,#7062f3,#805be7,#9251d6,#a442c2,#b42bad,#c20098 426.67px,#6964f8 426.67px,#7062f3,#805be8,#9251d7,#a442c3,#b42bae,#c20099 512px,#6964f9 512px,#7062f4,#805be8,#9250d7,#a441c3,#b42baf,#c2009a 597.33px,#6964fa 597.33px,#7061f5,#7f5be9,#9250d8,#a441c4,#b42baf,#c2009b 682.66px,#6964fa 682.66px,#7061f6,#7f5bea,#9250d9,#a441c5,#b42ab0,#c2009c 768px,#6964fb 768px,#7061f6,#7f5aeb,#9250da,#a341c6,#b42ab1,#c2009c 853.33px,#6963fc 853.33px,#7061f7,#7f5aec,#9150db,#a341c7,#b32ab2,#c2009d 938.66px,#6963fd 938.66px,#7061f8,#7f5aed,#9150dc,#a341c8,#b32ab3,#c2009e 1024px,#6963fd 1024px,#7060f9,#7f5aed,#9150dc,#a341c9,#b32ab4,#c2009f 1109.33px,#6963fe 1109.33px,#7060fa,#7f5aee,#914fdd,#a341ca,#b32ab5,#c200a0 1194.66px,#6963ff 1194.66px,#7060fa,#7f5aef,#914fde,#a340ca,#b329b6,#c200a1 1280px,#6962ff 1280px,#6f60fb,#7e59f0,#914fdf,#a340cb,#b329b6,#c100a2 1365.33px)"></i>
<i class="m2" style="background:linear-gradient(90deg,#5776d2 0px,#5e73d0,#6f6dc8,#8464bc,#9857ad,#a9469c,#b92d8a 85.33px,#5675d3 85.33px,#5e73d0,#6f6dc9,#8464bd,#9757ae,#a9469d,#b92d8b 170.67px,#5675d4 170.67px,#5e73d1,#6f6dca,#8363be,#9756af,#a9469e,#b92d8c 256px,#5675d5 256px,#5e73d2,#6f6dcb,#8363bf,#9756b0,#a9459f,#b92c8d 341.33px,#5675d6 341.33px,#5e73d3,#6f6dcc,#8363c0,#9756b0,#a9459f,#b92c8e 426.67px,#5675d7 426.67px,#5e72d4,#6f6dcc,#8363c1,#9756b1,#a945a0,#b92c8e 512px,#5675d8 512px,#5e72d5,#6f6ccd,#8363c1,#9756b2,#a945a1,#b92c8f 597.33px,#5674d8 597.33px,#5e72d6,#6f6cce,#8363c2,#9756b3,#a945a2,#b92c90 682.66px,#5674d9 682.66px,#5e72d6,#6e6ccf,#8363c3,#9756b4,#a945a3,#b92c91 768px,#5674da 768px,#5e72d7,#6e6cd0,#8363c4,#9756b5,#a945a4,#b92c92 853.33px,#5674db 853.33px,#5e72d8,#6e6cd1,#8362c5,#9656b6,#a945a5,#b92b93 938.66px,#5674dc 938.66px,#5e72d9,#6e6cd2,#8262c6,#9656b7,#a845a5,#b82b94 1024px,#5674dd 1024px,#5d71da,#6e6cd2,#8262c7,#9655b7,#a845a6,#b82b94 1109.33px,#5673dd 1109.33px,#5d71db,#6e6bd3,#8262c7,#9655b8,#a844a7,#b82b95 1194.66px,#5673de 1194.66px,#5d71dc,#6e6bd4,#8262c8,#9655b9,#a844a8,#b82b96 1280px,#5673df 1280px,#5d71dc,#6e6bd5,#8262c9,#9655ba,#a844a9,#b82b97 1365.33px)"></i>
<i class="m3" style="background:linear-gradient(90deg,#4980ae 0px,#507ead,#5f7aa8,#7373a0,#876995,#9a5c88,#ab4b7a 85.33px,#4980af 85.33px,#507ead,#5f7aa9,#7273a1,#876996,#9a5c89,#ab4b7b 170.67px,#4980b0 170.67px,#4f7eae,#5f7aaa,#7273a2,#876997,#9a5c8a,#ab4b7c 256px,#4980b1 256px,#4f7eaf,#5f7aaa,#7273a3,#876898,#9a5b8b,#ab4b7d 341.33px,#487fb2 341.33px,#4f7eb0,#5f7aab,#7272a3,#866899,#9a5b8c,#ab4b7d 426.67px,#487fb3 426.67px,#4f7eb1,#5e7aac,#7272a4,#866899,#995b8d,#ab4b7e 512px,#487fb3 512px,#4f7eb2,#5e79ad,#7272a5,#86689a,#995b8d,#ab4b7f 597.33px,#487fb4 597.33px,#4f7eb3,#5e79ae,#7272a6,#86689b,#995b8e,#ab4a80 682.66px,#487fb5 682.66px,#4f7db3,#5e79af,#7272a7,#86689c,#995b8f,#ab4a81 768px,#487fb6 768px,#4f7db4,#5e79b0,#7272a8,#86689d,#995b90,#ab4a82 853.33px,#487fb7 853.33px,#4f7db5,#5e79b0,#7272a9,#86689e,#995b91,#ab4a82 938.66px,#487fb8 938.66px,#4f7db6,#5e79b1,#7272a9,#86689f,#995b92,#aa4a83 1024px,#487fb9 1024px,#4e7db7,#5e79b2,#7172aa,#86689f,#995b92,#aa4a84 1109.33px,#477fb9 1109.33px,#4e7db8,#5e79b3,#7172ab,#8668a0,#995b93,#aa4a85 1194.66px,#477eba 1194.66px,#4e7db9,#5d79b4,#7172ac,#8668a1,#995b94,#aa4a86 1280px,#477ebb 1280px,#4e7db9,#5d79b5,#7171ad,#8567a2,#995b95,#aa4a87 1365.33px)"></i>
<i class="m4" style="background:linear-gradient(90deg,#3f868c 0px,#45858b,#518288,#637d83,#76767b,#896c72,#9a6067 85.33px,#3f868d 85.33px,#44858c,#518289,#637d84,#76767c,#896c72,#9a6067 170.67px,#3f868e 170.67px,#44858d,#51828a,#637d84,#76767d,#896c73,#9a6068 256px,#3f868f 256px,#44858e,#51828b,#637d85,#76767e,#896c74,#9a6069 341.33px,#3f8690 341.33px,#44858f,#51828b,#637d86,#76767e,#886c75,#9a606a 426.67px,#3e8691 426.67px,#44858f,#51828c,#627d87,#76767f,#886c76,#9a5f6a 512px,#3e8691 512px,#448590,#51828d,#627d88,#757580,#886c76,#9a5f6b 597.33px,#3e8692 597.33px,#448591,#51828e,#627d89,#757581,#886c77,#9a5f6c 682.66px,#3e8693 682.66px,#448592,#51828f,#627d89,#757582,#886c78,#9a5f6d 768px,#3e8694 768px,#448593,#518290,#627d8a,#757582,#886c79,#9a5f6e 853.33px,#3e8695 853.33px,#438594,#508290,#627d8b,#757583,#886c7a,#9a5f6e 938.66px,#3e8696 938.66px,#438594,#508291,#627d8c,#757584,#886b7a,#9a5f6f 1024px,#3e8696 1024px,#438595,#508292,#627d8d,#757585,#886b7b,#9a5f70 1109.33px,#3d8597 1109.33px,#438496,#508293,#627c8d,#757586,#886b7c,#9a5f71 1194.66px,#3d8598 1194.66px,#438497,#508194,#627c8e,#757587,#886b7d,#9a5f72 1280px,#3d8599 1280px,#438498,#508195,#627c8f,#757587,#886b7e,#9a5f72 1365.33px)"></i>
<i class="m5" style="background:linear-gradient(90deg,#368b6d 0px,#3a8a6d,#45886a,#548567,#667f61,#78785a,#896f51 85.33px,#368b6e 85.33px,#3a8a6d,#45886b,#548467,#667f62,#78785b,#896f52 170.67px,#368b6f 170.67px,#3a8a6e,#45886c,#548468,#667f63,#78785b,#896f53 256px,#368b70 256px,#3a8a6f,#45886d,#548469,#667f63,#78785c,#896f53 341.33px,#358b71 341.33px,#3a8a70,#45886e,#54846a,#667f64,#77785d,#896e54 426.67px,#358b71 426.67px,#3a8a71,#45886e,#54846a,#667f65,#77785e,#896e55 512px,#358b72 512px,#3a8a71,#45886f,#54846b,#667f66,#77785e,#896e56 597.33px,#358b73 597.33px,#3a8a72,#458870,#54846c,#657f66,#77785f,#896e57 682.66px,#358a74 682.66px,#3a8a73,#458871,#54846d,#657f67,#777860,#896e57 768px,#358a74 768px,#398a74,#448872,#54846e,#657f68,#777861,#896e58 853.33px,#358a75 853.33px,#398a75,#448872,#54846e,#657f69,#777762,#896e59 938.66px,#358a76 938.66px,#398a75,#448873,#54846f,#657f6a,#777762,#896e5a 1024px,#348a77 1024px,#398a76,#448874,#548470,#657f6a,#777763,#896e5a 1109.33px,#348a78 1109.33px,#398a77,#448875,#548471,#657f6b,#777764,#896e5b 1194.66px,#348a78 1194.66px,#398978,#448875,#548472,#657f6c,#777765,#896e5c 1280px,#348a79 1280px,#398978,#448776,#548472,#657f6d,#777765,#896e5d 1365.33px)"></i>
<i class="m6" style="background:linear-gradient(90deg,#2b8e51 0px,#2f8e50,#398c4f,#468a4c,#568648,#678142,#787a3b 85.33px,#2a8e52 85.33px,#2f8e51,#398c50,#468a4d,#568648,#678043,#787a3c 170.67px,#2a8e52 170.67px,#2f8e52,#398c50,#468a4d,#568649,#678043,#78793c 256px,#2a8e53 256px,#2f8e53,#388c51,#468a4e,#56864a,#678044,#78793d 341.33px,#2a8e54 341.33px,#2e8e53,#388c52,#468a4f,#56864b,#678045,#78793e 426.67px,#2a8e55 426.67px,#2e8e54,#388c53,#468a50,#56864b,#678046,#78793f 512px,#2a8e56 512px,#2e8e55,#388c53,#468a50,#56864c,#678046,#78793f 597.33px,#2a8e56 597.33px,#2e8d56,#388c54,#468a51,#56864d,#678047,#787940 682.66px,#2a8e57 682.66px,#2e8d56,#388c55,#468952,#56864e,#678048,#787941 768px,#2a8e58 768px,#2e8d57,#388c56,#468953,#56864e,#678049,#787942 853.33px,#2a8e59 853.33px,#2e8d58,#388c56,#468953,#56864f,#678049,#787942 938.66px,#2a8e59 938.66px,#2e8d59,#388c57,#468954,#568650,#67804a,#787943 1024px,#298e5a 1024px,#2e8d59,#388c58,#468955,#568551,#67804b,#787944 1109.33px,#298e5b 1109.33px,#2e8d5a,#388c59,#468956,#568551,#67804c,#787945 1194.66px,#298e5c 1194.66px,#2e8d5b,#388c59,#468956,#568552,#67804c,#787945 1280px,#298e5c 1280px,#2e8d5c,#388c5a,#468957,#568553,#67804d,#787946 1365.33px)"></i>
</div>
<div class="tr" style="top:1024.00px">
<i class="m0" style="background:linear-gradient(90deg,#7554ff 0px,#7b52ff,#874dfd,#9843ea,#a833d3,#b70fbd,#c500a6 85.33px,#7554ff 85.33px,#7b52ff,#874cfe,#9843ea,#a833d4,#b70fbe,#c500a7 170.67px,#7553ff 170.67px,#7a52ff,#874cff,#9743eb,#a833d5,#b70ebe,#c500a8 256px,#7553ff 256px,#7a51ff,#874cff,#9742ec,#a832d6,#b70ebf,#c500a9 341.33px,#7553ff 341.33px,#7a51ff,#874cff,#9742ed,#a732d7,#b70dc0,#c500aa 426.67px,#7453ff 426.67px,#7a51ff,#874cff,#9742ee,#a732d8,#b70cc1,#c400ab 512px,#7453ff 512px,#7a51ff,#864cff,#9742ee,#a732d8,#b60cc2,#c400ac 597.33px,#7453ff 597.33px,#7a51ff,#864bff,#9642ef,#a732d9,#b60bc3,#c400ad 682.66px,#7452ff 682.66px,#7a51ff,#864bff,#9642f0,#a732da,#b60ac4,#c400ad 768px,#7452ff 768px,#7950ff,#864bff,#9641f1,#a731db,#b609c4,#c400ae 853.33px,#7452ff 853.33px,#7950ff,#864bff,#9641f2,#a631dc,#b608c5,#c400af 938.66px,#7452ff 938.66px,#7950ff,#864bff,#9641f3,#a631dd,#b606c6,#c400b0 1024px,#7452ff 1024px,#7950ff,#854bff,#9641f3,#a631de,#b604c7,#c400b1 1109.33px,#7351ff 1109.33px,#7950ff,#854aff,#9541f4,#a631de,#b500c8,#c400b2 1194.66px,#7351ff 1194.66px,#794fff,#854aff,#9541f5,#a631df,#b500c9,#c300b3 1280px,#7351ff 1280px,#794fff,#854aff,#9541f6,#a630e0,#b500ca,#c300b3 1365.33px)"></i>
<i class="m1" style="background:linear-gradient(90deg,#6862ff 0px,#6f60fc,#7e59f1,#914fe0,#a240cc,#b329b7,#c100a2 85.33px,#6862ff 85.33px,#6f5ffd,#7e59f1,#904fe1,#a240cd,#b329b8,#c100a3 170.67px,#6862ff 170.67px,#6f5ffd,#7e59f2,#904fe2,#a240ce,#b329b9,#c100a4 256px,#6861ff 256px,#6f5ffe,#7e59f3,#904fe2,#a240cf,#b228ba,#c100a5 341.33px,#6861ff 341.33px,#6f5fff,#7e59f4,#904ee3,#a240d0,#b228bb,#c100a6 426.67px,#6861ff 426.67px,#6f5fff,#7e58f5,#904ee4,#a23fd0,#b228bc,#c100a7 512px,#6861ff 512px,#6f5fff,#7d58f5,#904ee5,#a23fd1,#b228bc,#c100a8 597.33px,#6861ff 597.33px,#6f5eff,#7d58f6,#8f4ee6,#a13fd2,#b228bd,#c100a8 682.66px,#6860ff 682.66px,#6f5eff,#7d58f7,#8f4ee7,#a13fd3,#b228be,#c100a9 768px,#6860ff 768px,#6e5eff,#7d58f8,#8f4ee7,#a13fd4,#b227bf,#c000aa 853.33px,#6860ff 853.33px,#6e5eff,#7d58f9,#8f4ee8,#a13fd5,#b227c0,#c000ab 938.66px,#6860ff 938.66px,#6e5eff,#7d57f9,#8f4de9,#a13fd6,#b127c1,#c000ac 1024px,#6860ff 1024px,#6e5dff,#7d57fa,#8f4dea,#a13ed6,#b127c2,#c000ad 1109.33px,#675fff 1109.33px,#6e5dff,#7c57fb,#8f4deb,#a13ed7,#b127c2,#c000ae 1194.66px,#675fff 1194.66px,#6e5dff,#7c57fc,#8e4deb,#a03ed8,#b126c3,#c000ae 1280px,#675fff 1280px,#6e5dff,#7c57fd,#8e4dec,#a03ed9,#b126c4,#c000af 1365.33px)"></i>
<i class="m2" style="background:linear-gradient(90deg,#5673e0 0px,#5d71dd,#6e6bd6,#8262ca,#9655bb,#a844aa,#b82a98 85.33px,#5673e1 85.33px,#5d71de,#6d6bd7,#8262cb,#9655bc,#a844ab,#b82a99 170.67px,#5673e2 170.67px,#5d70df,#6d6bd8,#8262cc,#9655bd,#a844ab,#b82a99 256px,#5572e2 256px,#5d70e0,#6d6bd8,#8161cd,#9555bd,#a844ac,#b82a9a 341.33px,#5572e3 341.33px,#5d70e1,#6d6bd9,#8161cd,#9555be,#a744ad,#b82a9b 426.67px,#5572e4 426.67px,#5d70e1,#6d6ada,#8161ce,#9554bf,#a744ae,#b82a9c 512px,#5572e5 512px,#5d70e2,#6d6adb,#8161cf,#9554c0,#a743af,#b82a9d 597.33px,#5572e6 597.33px,#5d70e3,#6d6adc,#8161d0,#9554c1,#a743b0,#b7299e 682.66px,#5572e7 682.66px,#5c70e4,#6d6add,#8161d1,#9554c2,#a743b1,#b7299f 768px,#5571e7 768px,#5c6fe5,#6d6add,#8161d2,#9554c3,#a743b1,#b7299f 853.33px,#5571e8 853.33px,#5c6fe6,#6c6ade,#8161d3,#9554c3,#a743b2,#b729a0 938.66px,#5571e9 938.66px,#5c6fe6,#6c6adf,#8060d3,#9454c4,#a743b3,#b729a1 1024px,#5571ea 1024px,#5c6fe7,#6c69e0,#8060d4,#9454c5,#a743b4,#b728a2 1109.33px,#5571eb 1109.33px,#5c6fe8,#6c69e1,#8060d5,#9454c6,#a743b5,#b728a3 1194.66px,#5571ec 1194.66px,#5c6fe9,#6c69e2,#8060d6,#9453c7,#a642b6,#b728a4 1280px,#5570ec 1280px,#5c6eea,#6c69e2,#8060d7,#9453c8,#a642b7,#b728a4 1365.33px)"></i>
<i class="m3" style="background:linear-gradient(90deg,#477ebc 0px,#4e7dba,#5d78b6,#7171ae,#8567a3,#995a96,#aa4a87 85.33px,#477ebd 85.33px,#4e7dbb,#5d78b7,#7171af,#8567a4,#995a97,#aa4a88 170.67px,#477ebe 170.67px,#4e7cbc,#5d78b7,#7171af,#8567a5,#985a97,#aa4a89 256px,#477ebf 256px,#4e7cbd,#5d78b8,#7171b0,#8567a5,#985a98,#aa498a 341.33px,#477ebf 341.33px,#4d7cbe,#5d78b9,#7171b1,#8567a6,#985a99,#aa498b 426.67px,#467ec0 426.67px,#4d7cbf,#5d78ba,#7071b2,#8567a7,#985a9a,#aa498b 512px,#467ec1 512px,#4d7cbf,#5d78bb,#7071b3,#8567a8,#985a9b,#aa498c 597.33px,#467dc2 597.33px,#4d7cc0,#5c78bc,#7071b4,#8567a9,#985a9c,#aa498d 682.66px,#467dc3 682.66px,#4d7cc1,#5c78bc,#7071b4,#8567aa,#985a9d,#aa498e 768px,#467dc4 768px,#4d7cc2,#5c78bd,#7071b5,#8567aa,#985a9d,#aa498f 853.33px,#467dc5 853.33px,#4d7cc3,#5c77be,#7070b6,#8467ab,#985a9e,#a94990 938.66px,#467dc5 938.66px,#4d7bc4,#5c77bf,#7070b7,#8466ac,#985a9f,#a94990 1024px,#467dc6 1024px,#4c7bc5,#5c77c0,#7070b8,#8466ad,#9859a0,#a94991 1109.33px,#457dc7 1109.33px,#4c7bc5,#5c77c1,#7070b9,#8466ae,#9859a1,#a94892 1194.66px,#457dc8 1194.66px,#4c7bc6,#5c77c2,#6f70ba,#8466af,#9759a2,#a94893 1280px,#457cc9 1280px,#4c7bc7,#5b77c2,#6f70ba,#8466b0,#9759a2,#a94894 1365.33px)"></i>
<i class="m4" style="background:linear-gradient(90deg,#3d859a 0px,#438499,#508195,#617c90,#757588,#886b7e,#9a5f73 85.33px,#3d859b 85.33px,#428499,#508196,#617c91,#757589,#886b7f,#9a5f74 170.67px,#3d859b 170.67px,#42849a,#508197,#617c92,#75758a,#886b80,#9a5f75 256px,#3c859c 256px,#42849b,#4f8198,#617c92,#75758b,#886b81,#9a5f76 341.33px,#3c859d 341.33px,#42849c,#4f8199,#617c93,#74758b,#886b82,#9a5f76 426.67px,#3c859e 426.67px,#42849d,#4f819a,#617c94,#74758c,#886b83,#9a5e77 512px,#3c859f 512px,#42849e,#4f819a,#617c95,#74748d,#876b83,#9a5e78 597.33px,#3c85a0 597.33px,#42849e,#4f819b,#617c96,#74748e,#876b84,#995e79 682.66px,#3c85a0 682.66px,#41849f,#4f819c,#617c97,#74748f,#876b85,#995e7a 768px,#3b85a1 768px,#4184a0,#4f819d,#617c97,#747490,#876b86,#995e7a 853.33px,#3b85a2 853.33px,#4184a1,#4f819e,#617c98,#747490,#876a87,#995e7b 938.66px,#3b84a3 938.66px,#4183a2,#4e819f,#607c99,#747491,#876a87,#995e7c 1024px,#3b84a4 1024px,#4183a3,#4e819f,#607b9a,#747492,#876a88,#995e7d 1109.33px,#3b84a5 1109.33px,#4183a3,#4e80a0,#607b9b,#747493,#876a89,#995e7e 1194.66px,#3b84a5 1194.66px,#4183a4,#4e80a1,#607b9c,#747494,#876a8a,#995e7e 1280px,#3a84a6 1280px,#4083a5,#4e80a2,#607b9c,#747495,#876a8b,#995e7f 1365.33px)"></i>
<i class="m5" style="background:linear-gradient(90deg,#348a7a 0px,#398979,#448777,#538473,#657e6e,#776,#896e5d 85.33px,#348a7b 85.33px,#38897a,#448778,#538474,#657e6e,#777767,#896e5e 170.67px,#348a7c 170.67px,#38897b,#448779,#538475,#657e6f,#777768,#896e5f 256px,#338a7c 256px,#38897c,#448779,#538476,#657e70,#777769,#896e60 341.33px,#338a7d 341.33px,#38897c,#43877a,#538476,#657e71,#777769,#896e61 426.67px,#338a7e 426.67px,#38897d,#43877b,#538477,#657e71,#77776a,#896e61 512px,#338a7f 512px,#38897e,#43877c,#538478,#657e72,#77776b,#896e62 597.33px,#338a80 597.33px,#38897f,#43877d,#538379,#657e73,#77776c,#896e63 682.66px,#338a80 682.66px,#388980,#43877d,#53837a,#657e74,#77776c,#896e64 768px,#328a81 768px,#378980,#43877e,#53837a,#657e75,#77776d,#886d64 853.33px,#328a82 853.33px,#378981,#43877f,#53837b,#647e75,#77776e,#886d65 938.66px,#328a83 938.66px,#378982,#438780,#53837c,#647e76,#77776f,#886d66 1024px,#328a84 1024px,#378983,#438781,#53837d,#647e77,#777770,#886d67 1109.33px,#328984 1109.33px,#378984,#428781,#52837d,#647e78,#777770,#886d67 1194.66px,#328985 1194.66px,#378984,#428782,#52837e,#647e79,#777771,#886d68 1280px,#318986 1280px,#368985,#428783,#52837f,#647e79,#767672,#886d69 1365.33px)"></i>
<i class="m6" style="background:linear-gradient(90deg,#298e5d 0px,#2d8d5d,#388c5b,#468958,#568554,#67804e,#787947 85.33px,#298e5e 85.33px,#2d8d5d,#388c5c,#468959,#568554,#67804f,#787948 170.67px,#298e5f 170.67px,#2d8d5e,#388c5c,#468959,#568555,#67804f,#787948 256px,#298e5f 256px,#2d8d5f,#378c5d,#46895a,#568556,#678050,#787949 341.33px,#298e60 341.33px,#2d8d60,#378c5e,#46895b,#568557,#678051,#78794a 426.67px,#288d61 426.67px,#2d8d60,#378c5f,#46895c,#568557,#678052,#78794b 512px,#288d62 512px,#2d8d61,#378c5f,#46895c,#568558,#678052,#78794b 597.33px,#288d62 597.33px,#2d8d62,#378c60,#46895d,#568559,#678053,#78794c 682.66px,#288d63 682.66px,#2d8d63,#378c61,#45895e,#56855a,#678054,#78794d 768px,#288d64 768px,#2c8d63,#378b62,#45895f,#56855a,#678055,#78794e 853.33px,#288d65 853.33px,#2c8d64,#378b62,#458960,#56855b,#678055,#78794e 938.66px,#288d65 938.66px,#2c8d65,#378b63,#458960,#56855c,#678056,#78794f 1024px,#278d66 1024px,#2c8d66,#378b64,#458961,#56855d,#678057,#787950 1109.33px,#278d67 1109.33px,#2c8d66,#378b65,#458962,#56855d,#677f58,#787851 1194.66px,#278d68 1194.66px,#2c8d67,#378b66,#458963,#56855e,#677f58,#787851 1280px,#278d69 1280px,#2c8d68,#368b66,#458963,#56855f,#677f59,#787852 1365.33px)"></i>
</div>
<div class="tr" style="top:1109.33px">
<i class="m0" style="background:linear-gradient(90deg,#7351ff 0px,#784fff,#854aff,#9540f7,#a530e1,#b500ca,#c300b4 85.33px,#7351ff 85.33px,#784fff,#854aff,#9540f7,#a530e2,#b500cb,#c300b5 170.67px,#7351ff 170.67px,#784fff,#844aff,#9540f8,#a530e3,#b500cc,#c300b6 256px,#7250ff 256px,#784fff,#8449ff,#9440f9,#a530e3,#b500cd,#c300b7 341.33px,#7250ff 341.33px,#784eff,#8449ff,#9440fa,#a530e4,#b500ce,#c300b8 426.67px,#7250ff 426.67px,#784eff,#8449ff,#9440fb,#a52fe5,#b400cf,#c300b8 512px,#7250ff 512px,#774eff,#8449ff,#943ffb,#a42fe6,#b400d0,#c300b9 597.33px,#7250ff 597.33px,#774eff,#8349ff,#943ffc,#a42fe7,#b400d0,#c200ba 682.66px,#724fff 682.66px,#774eff,#8349ff,#933ffd,#a42fe8,#b400d1,#c200bb 768px,#724fff 768px,#774dff,#8348ff,#933ffe,#a42fe8,#b400d2,#c200bc 853.33px,#714fff 853.33px,#774dff,#8348ff,#933fff,#a42ee9,#b400d3,#c200bd 938.66px,#714fff 938.66px,#774dff,#8348ff,#933eff,#a42eea,#b400d4,#c200be 1024px,#714fff 1024px,#764dff,#8348ff,#933eff,#a32eeb,#b300d5,#c200be 1109.33px,#714eff 1109.33px,#764dff,#8248ff,#923eff,#a32eec,#b300d6,#c200bf 1194.66px,#714eff 1194.66px,#764dff,#8248ff,#923eff,#a32eed,#b300d6,#c200c0 1280px,#714eff 1280px,#764cff,#8247ff,#923eff,#a32ded,#b300d7,#c200c1 1365.33px)"></i>
<i class="m1" style="background:linear-gradient(90deg,#675fff 0px,#6e5dff,#7c57fd,#8e4ded,#a03eda,#b126c5,#c000b0 85.33px,#675fff 85.33px,#6e5cff,#7c56fe,#8e4cee,#a03edb,#b126c6,#c000b1 170.67px,#675eff 170.67px,#6d5cff,#7c56ff,#8e4cef,#a03edb,#b025c7,#c000b2 256px,#675eff 256px,#6d5cff,#7c56ff,#8e4cf0,#a03ddc,#b025c8,#bf00b3 341.33px,#675eff 341.33px,#6d5cff,#7b56ff,#8d4cf0,#a03ddd,#b025c8,#bf00b3 426.67px,#675eff 426.67px,#6d5cff,#7b56ff,#8d4cf1,#9f3dde,#b025c9,#bf00b4 512px,#675eff 512px,#6d5bff,#7b56ff,#8d4cf2,#9f3ddf,#b025ca,#bf00b5 597.33px,#675dff 597.33px,#6d5bff,#7b55ff,#8d4cf3,#9f3de0,#b024cb,#bf00b6 682.66px,#665dff 682.66px,#6d5bff,#7b55ff,#8d4bf4,#9f3de1,#b024cc,#bf00b7 768px,#665dff 768px,#6d5bff,#7b55ff,#8d4bf5,#9f3ce1,#b024cd,#bf00b8 853.33px,#665dff 853.33px,#6c5bff,#7b55ff,#8c4bf5,#9f3ce2,#af24ce,#bf00b9 938.66px,#665dff 938.66px,#6c5aff,#7a55ff,#8c4bf6,#9e3ce3,#af23ce,#bf00b9 1024px,#665cff 1024px,#6c5aff,#7a54ff,#8c4bf7,#9e3ce4,#af23cf,#be00ba 1109.33px,#665cff 1109.33px,#6c5aff,#7a54ff,#8c4bf8,#9e3ce5,#af23d0,#be00bb 1194.66px,#665cff 1194.66px,#6c5aff,#7a54ff,#8c4af9,#9e3ce6,#af23d1,#be00bc 1280px,#665cff 1280px,#6c5aff,#7a54ff,#8c4af9,#9e3be6,#af22d2,#be00bd 1365.33px)"></i>
<i class="m2" style="background:linear-gradient(90deg,#5470ed 0px,#5c6eeb,#6c69e3,#8060d8,#9453c9,#a642b7,#b728a5 85.33px,#5470ee 85.33px,#5c6eeb,#6c69e4,#8060d8,#9453c9,#a642b8,#b728a6 170.67px,#5470ef 170.67px,#5b6eec,#6b68e5,#7f5fd9,#9453ca,#a642b9,#b627a7 256px,#5470f0 256px,#5b6eed,#6b68e6,#7f5fda,#9353cb,#a642ba,#b627a8 341.33px,#5470f1 341.33px,#5b6eee,#6b68e7,#7f5fdb,#9353cc,#a642bb,#b627a9 426.67px,#546ff1 426.67px,#5b6def,#6b68e7,#7f5fdc,#9353cd,#a642bc,#b627aa 512px,#546ff2 512px,#5b6def,#6b68e8,#7f5fdd,#9352ce,#a641bd,#b627aa 597.33px,#546ff3 597.33px,#5b6df0,#6b68e9,#7f5fde,#9352cf,#a541bd,#b626ab 682.66px,#546ff4 682.66px,#5b6df1,#6b68ea,#7f5fde,#9352cf,#a541be,#b626ac 768px,#546ff5 768px,#5b6df2,#6b67eb,#7e5fdf,#9352d0,#a541bf,#b626ad 853.33px,#536ff5 853.33px,#5b6df3,#6a67ec,#7e5ee0,#9252d1,#a541c0,#b626ae 938.66px,#536ef6 938.66px,#5a6cf4,#6a67ec,#7e5ee1,#9252d2,#a541c1,#b626af 1024px,#536ef7 1024px,#5a6cf4,#6a67ed,#7e5ee2,#9252d3,#a541c2,#b625af 1109.33px,#536ef8 1109.33px,#5a6cf5,#6a67ee,#7e5ee3,#9252d4,#a541c3,#b525b0 1194.66px,#536ef9 1194.66px,#5a6cf6,#6a67ef,#7e5ee3,#9251d4,#a540c3,#b525b1 1280px,#536ef9 1280px,#5a6cf7,#6a66f0,#7e5ee4,#9251d5,#a440c4,#b525b2 1365.33px)"></i>
<i class="m3" style="background:linear-gradient(90deg,#457cca 0px,#4c7bc8,#5b77c3,#6f70bb,#8466b0,#9759a3,#a94895 85.33px,#457ccb 85.33px,#4c7bc9,#5b77c4,#6f70bc,#8466b1,#9759a4,#a94895 170.67px,#457ccb 170.67px,#4c7bca,#5b77c5,#6f70bd,#8466b2,#9759a5,#a94896 256px,#457ccc 256px,#4b7bcb,#5b76c6,#6f70be,#8366b3,#9759a6,#a94897 341.33px,#447ccd 341.33px,#4b7acb,#5b76c7,#6f6fbf,#8366b4,#9759a7,#a94898 426.67px,#447cce 426.67px,#4b7acc,#5b76c8,#6f6fc0,#8365b5,#9759a7,#a94899 512px,#447ccf 512px,#4b7acd,#5a76c8,#6e6fc0,#8365b5,#9759a8,#a9489a 597.33px,#447cd0 597.33px,#4b7ace,#5a76c9,#6e6fc1,#8365b6,#9758a9,#a9489a 682.66px,#447bd0 682.66px,#4b7acf,#5a76ca,#6e6fc2,#8365b7,#9758aa,#a8479b 768px,#447bd1 768px,#4b7ad0,#5a76cb,#6e6fc3,#8365b8,#9658ab,#a8479c 853.33px,#437bd2 853.33px,#4a7ad0,#5a76cc,#6e6fc4,#8365b9,#9658ac,#a8479d 938.66px,#437bd3 938.66px,#4a7ad1,#5a76cd,#6e6fc5,#8365ba,#9658ac,#a8479e 1024px,#437bd4 1024px,#4a79d2,#5a75cd,#6e6fc5,#8265bb,#9658ad,#a8479f 1109.33px,#437bd5 1109.33px,#4a79d3,#5975ce,#6e6ec6,#8265bb,#9658ae,#a8479f 1194.66px,#437bd6 1194.66px,#4a79d4,#5975cf,#6d6ec7,#8265bc,#9658af,#a847a0 1280px,#437bd6 1280px,#4a79d5,#5975d0,#6d6ec8,#8265bd,#9658b0,#a847a1 1365.33px)"></i>
<i class="m4" style="background:linear-gradient(90deg,#3a84a7 0px,#4083a6,#4e80a3,#607b9d,#737495,#876a8b,#995e80 85.33px,#3a84a8 85.33px,#4083a7,#4e80a4,#607b9e,#737496,#876a8c,#995e81 170.67px,#3a84a9 170.67px,#4083a8,#4d80a4,#607b9f,#737497,#876a8d,#995e82 256px,#3a84aa 256px,#4083a8,#4d80a5,#607ba0,#737498,#876a8e,#995d82 341.33px,#3984aa 341.33px,#3f83a9,#4d80a6,#5f7ba1,#737499,#876a8f,#995d83 426.67px,#3984ab 426.67px,#3f83aa,#4d80a7,#5f7ba1,#737399,#866a90,#995d84 512px,#3984ac 512px,#3f83ab,#4d80a8,#5f7ba2,#73739a,#866a90,#995d85 597.33px,#3984ad 597.33px,#3f83ac,#4d80a9,#5f7ba3,#73739b,#866a91,#995d86 682.66px,#3983ae 682.66px,#3f82ad,#4d80a9,#5f7ba4,#73739c,#866a92,#995d86 768px,#3883af 768px,#3f82ad,#4c80aa,#5f7ba5,#73739d,#866993,#985d87 853.33px,#3883af 853.33px,#3e82ae,#4c7fab,#5f7aa6,#73739e,#866994,#985d88 938.66px,#3883b0 938.66px,#3e82af,#4c7fac,#5f7aa6,#72739e,#866994,#985d89 1024px,#3883b1 1024px,#3e82b0,#4c7fad,#5e7aa7,#72739f,#866995,#985d8a 1109.33px,#3883b2 1109.33px,#3e82b1,#4c7fae,#5e7aa8,#7273a0,#866996,#985d8b 1194.66px,#3783b3 1194.66px,#3e82b2,#4c7fae,#5e7aa9,#7273a1,#866997,#985d8b 1280px,#3783b4 1280px,#3d82b2,#4c7faf,#5e7aaa,#7273a2,#866998,#985d8c 1365.33px)"></i>
<i class="m5" style="background:linear-gradient(90deg,#318987 0px,#368986,#428784,#528380,#647e7a,#767673,#886d6a 85.33px,#318988 85.33px,#368987,#428785,#528381,#647e7b,#767673,#886d6b 170.67px,#318988 170.67px,#368888,#428785,#528381,#647e7c,#767674,#886d6b 256px,#318989 256px,#368888,#428686,#528382,#647e7c,#767675,#886d6c 341.33px,#30898a 341.33px,#368889,#428687,#528383,#647d7d,#767676,#886d6d 426.67px,#30898b 426.67px,#35888a,#418688,#528384,#647d7e,#767677,#886d6e 512px,#30898c 512px,#35888b,#418689,#528385,#647d7f,#767677,#886d6e 597.33px,#30898c 597.33px,#35888c,#418689,#518385,#647d80,#767678,#886d6f 682.66px,#30898d 682.66px,#35888c,#41868a,#518386,#647d80,#767679,#886d70 768px,#2f898e 768px,#35888d,#41868b,#518387,#637d81,#76767a,#886d71 853.33px,#2f898f 853.33px,#35888e,#41868c,#518288,#637d82,#76767a,#886d72 938.66px,#2f8990 938.66px,#34888f,#41868d,#518289,#637d83,#76767b,#886d72 1024px,#2f8991 1024px,#348890,#40868d,#518289,#637d84,#76767c,#886c73 1109.33px,#2f8991 1109.33px,#348891,#40868e,#51828a,#637d84,#76767d,#886c74 1194.66px,#2e8992 1194.66px,#348891,#40868f,#51828b,#637d85,#76767e,#886c75 1280px,#2e8893 1280px,#348892,#408690,#51828c,#637d86,#76767e,#886c75 1365.33px)"></i>
<i class="m6" style="background:linear-gradient(90deg,#278d69 0px,#2c8d69,#368b67,#458964,#558560,#677f5a,#787853 85.33px,#278d6a 85.33px,#2b8d69,#368b68,#458965,#558560,#677f5b,#787854 170.67px,#278d6b 170.67px,#2b8d6a,#368b69,#458966,#558561,#677f5b,#787854 256px,#268d6c 256px,#2b8c6b,#368b69,#458966,#558562,#677f5c,#787855 341.33px,#268d6c 341.33px,#2b8c6c,#368b6a,#458867,#558563,#667f5d,#787856 426.67px,#268d6d 426.67px,#2b8c6d,#368b6b,#458868,#558563,#667f5e,#787857 512px,#268d6e 512px,#2b8c6d,#368b6c,#458869,#558564,#667f5e,#787857 597.33px,#268d6f 597.33px,#2b8c6e,#368b6c,#448869,#558465,#667f5f,#787858 682.66px,#258d6f 682.66px,#2a8c6f,#358b6d,#44886a,#558466,#667f60,#787859 768px,#258d70 768px,#2a8c70,#358b6e,#44886b,#558467,#667f61,#78785a 853.33px,#258d71 853.33px,#2a8c70,#358b6f,#44886c,#558467,#667f61,#78785a 938.66px,#258d72 938.66px,#2a8c71,#358b6f,#44886c,#558468,#667f62,#77785b 1024px,#258d72 1024px,#2a8c72,#358b70,#44886d,#558469,#667f63,#77785c 1109.33px,#248d73 1109.33px,#298c73,#358b71,#44886e,#55846a,#667f64,#77785d 1194.66px,#248d74 1194.66px,#298c73,#358b72,#44886f,#55846a,#667f64,#77785d 1280px,#248d75 1280px,#298c74,#358b73,#44886f,#55846b,#667f65,#77785e 1365.33px)"></i>
</div>
<div class="tr" style="top:1194.66px">
<i class="m0" style="background:linear-gradient(90deg,#704eff 0px,#764cff,#8247ff,#923eff,#a32dee,#b300d8,#c100c2 85.33px,#704eff 85.33px,#754cff,#8247ff,#923dff,#a32def,#b300d9,#c100c3 170.67px,#704dff 170.67px,#754cff,#8147ff,#923dff,#a22df0,#b200da,#c100c4 256px,#704dff 256px,#754cff,#8147ff,#913dff,#a22cf1,#b200db,#c100c4 341.33px,#704dff 341.33px,#754bff,#8146ff,#913dff,#a22cf2,#b200db,#c100c5 426.67px,#704dff 426.67px,#754bff,#8146ff,#913dff,#a22cf2,#b200dc,#c100c6 512px,#6f4dff 512px,#754bff,#8146ff,#913cff,#a22cf3,#b200dd,#c100c7 597.33px,#6f4dff 597.33px,#744bff,#8046ff,#913cff,#a22cf4,#b200de,#c100c8 682.66px,#6f4cff 682.66px,#744bff,#8046ff,#903cff,#a12bf5,#b200df,#c000c9 768px,#6f4cff 768px,#744aff,#8045ff,#903cff,#a12bf6,#b100e0,#c000c9 853.33px,#6f4cff 853.33px,#744aff,#8045ff,#903cff,#a12bf6,#b100e0,#c000ca 938.66px,#6f4cff 938.66px,#744aff,#8045ff,#903cff,#a12bf7,#b100e1,#c000cb 1024px,#6e4cff 1024px,#734aff,#7f45ff,#903bff,#a12af8,#b100e2,#c000cc 1109.33px,#6e4bff 1109.33px,#734aff,#7f45ff,#8f3bff,#a02af9,#b100e3,#c000cd 1194.66px,#6e4bff 1194.66px,#7349ff,#7f44ff,#8f3bff,#a02afa,#b100e4,#c000ce 1280px,#6e4bff 1280px,#7349ff,#7f44ff,#8f3bff,#a02afb,#b000e5,#bf00cf 1365.33px)"></i>
<i class="m1" style="background:linear-gradient(90deg,#665bff 0px,#6c59ff,#7a54ff,#8b4afa,#9e3be7,#af22d3,#be00be 85.33px,#655bff 85.33px,#6c59ff,#7954ff,#8b4afb,#9d3be8,#ae22d4,#be00bf 170.67px,#655bff 170.67px,#6b59ff,#7953ff,#8b4afc,#9d3be9,#ae22d4,#be00bf 256px,#655bff 256px,#6b59ff,#7953ff,#8b4afd,#9d3bea,#ae21d5,#be00c0 341.33px,#655bff 341.33px,#6b59ff,#7953ff,#8b49fd,#9d3beb,#ae21d6,#bd00c1 426.67px,#655aff 426.67px,#6b58ff,#7953ff,#8b49fe,#9d3aeb,#ae21d7,#bd00c2 512px,#655aff 512px,#6b58ff,#7953ff,#8a49ff,#9d3aec,#ae20d8,#bd00c3 597.33px,#655aff 597.33px,#6b58ff,#7852ff,#8a49ff,#9c3aed,#ae20d9,#bd00c4 682.66px,#645aff 682.66px,#6a58ff,#7852ff,#8a49ff,#9c3aee,#ad20d9,#bd00c4 768px,#645aff 768px,#6a58ff,#7852ff,#8a48ff,#9c3aef,#ad20da,#bd00c5 853.33px,#6459ff 853.33px,#6a57ff,#7852ff,#8a48ff,#9c3af0,#ad1fdb,#bd00c6 938.66px,#6459ff 938.66px,#6a57ff,#7852ff,#8948ff,#9c39f0,#ad1fdc,#bd00c7 1024px,#6459ff 1024px,#6a57ff,#7751ff,#8948ff,#9c39f1,#ad1fdd,#bc00c8 1109.33px,#6459ff 1109.33px,#6a57ff,#7751ff,#8948ff,#9b39f2,#ad1ede,#bc00c9 1194.66px,#6458ff 1194.66px,#6a57ff,#7751ff,#8948ff,#9b39f3,#ad1ede,#bc00ca 1280px,#6358ff 1280px,#6956ff,#7751ff,#8947ff,#9b39f4,#ac1edf,#bc00ca 1365.33px)"></i>
<i class="m2" style="background:linear-gradient(90deg,#536dfa 0px,#5a6cf8,#6a66f1,#7d5ee5,#9251d6,#a440c5,#b525b3 85.33px,#536dfb 85.33px,#5a6bf8,#6966f1,#7d5de6,#9151d7,#a440c6,#b524b4 170.67px,#536dfc 170.67px,#5a6bf9,#6966f2,#7d5de7,#9151d8,#a440c7,#b524b4 256px,#526dfd 256px,#596bfa,#6966f3,#7d5de8,#9151d9,#a440c8,#b524b5 341.33px,#526dfd 341.33px,#596bfb,#6966f4,#7d5de8,#9151da,#a440c8,#b524b6 426.67px,#526dfe 426.67px,#596bfc,#6966f5,#7d5de9,#9151da,#a43fc9,#b523b7 512px,#526cff 512px,#596afc,#6965f6,#7d5dea,#9150db,#a43fca,#b423b8 597.33px,#526cff 597.33px,#596afd,#6865f6,#7c5deb,#9150dc,#a33fcb,#b423b9 682.66px,#526cff 682.66px,#596afe,#6865f7,#7c5cec,#9050dd,#a33fcc,#b423ba 768px,#526cff 768px,#596aff,#6865f8,#7c5ced,#9050de,#a33fcd,#b422ba 853.33px,#526cff 853.33px,#586aff,#6865f9,#7c5ced,#9050df,#a33fce,#b422bb 938.66px,#516bff 938.66px,#586aff,#6865fa,#7c5cee,#9050df,#a33fce,#b422bc 1024px,#516bff 1024px,#5869ff,#6864fa,#7c5cef,#9050e0,#a33ecf,#b422bd 1109.33px,#516bff 1109.33px,#5869ff,#6864fb,#7b5cf0,#904fe1,#a33ed0,#b421be 1194.66px,#516bff 1194.66px,#5869ff,#6764fc,#7b5cf1,#904fe2,#a23ed1,#b421bf 1280px,#516bff 1280px,#5869ff,#6764fd,#7b5bf2,#8f4fe3,#a23ed2,#b321bf 1365.33px)"></i>
<i class="m3" style="background:linear-gradient(90deg,#427ad7 0px,#4979d6,#5975d1,#6d6ec9,#8264be,#9658b1,#a847a2 85.33px,#427ad8 85.33px,#4979d6,#5975d2,#6d6eca,#8264bf,#9657b1,#a846a3 170.67px,#427ad9 170.67px,#4979d7,#5975d3,#6d6ecb,#8264c0,#9657b2,#a846a3 256px,#427ada 256px,#4979d8,#5975d3,#6d6ecb,#8264c0,#9557b3,#a846a4 341.33px,#427adb 341.33px,#4978d9,#5875d4,#6d6ecc,#8164c1,#9557b4,#a746a5 426.67px,#427adb 426.67px,#4978da,#5874d5,#6c6ecd,#8164c2,#9557b5,#a746a6 512px,#417adc 512px,#4878db,#5874d6,#6c6ece,#8164c3,#9557b6,#a746a7 597.33px,#417add 597.33px,#4878db,#5874d7,#6c6dcf,#8164c4,#9557b7,#a746a8 682.66px,#4179de 682.66px,#4878dc,#5874d8,#6c6dd0,#8164c5,#9557b7,#a746a8 768px,#4179df 768px,#4878dd,#5874d8,#6c6dd0,#8163c5,#9557b8,#a746a9 853.33px,#4179e0 853.33px,#4878de,#5774d9,#6c6dd1,#8163c6,#9557b9,#a745aa 938.66px,#4079e0 938.66px,#4878df,#5774da,#6c6dd2,#8163c7,#9556ba,#a745ab 1024px,#4079e1 1024px,#4777e0,#5774db,#6b6dd3,#8063c8,#9456bb,#a745ac 1109.33px,#4079e2 1109.33px,#4777e0,#5773dc,#6b6dd4,#8063c9,#9456bc,#a745ad 1194.66px,#4079e3 1194.66px,#4777e1,#5773dd,#6b6dd5,#8063ca,#9456bc,#a745ad 1280px,#4078e4 1280px,#4777e2,#5773dd,#6b6cd5,#8063cb,#9456bd,#a645ae 1365.33px)"></i>
<i class="m4" style="background:linear-gradient(90deg,#3783b4 0px,#3d82b3,#4b7fb0,#5e7aaa,#7273a3,#866999,#985d8d 85.33px,#3783b5 85.33px,#3d82b4,#4b7fb1,#5e7aab,#7273a3,#856999,#985c8e 170.67px,#3783b6 170.67px,#3d82b5,#4b7fb2,#5e7aac,#7273a4,#85699a,#985c8f 256px,#3683b7 256px,#3d82b6,#4b7fb3,#5e7aad,#7272a5,#85699b,#985c8f 341.33px,#3682b8 341.33px,#3c81b7,#4b7fb3,#5d7aae,#7272a6,#85699c,#985c90 426.67px,#3682b9 426.67px,#3c81b7,#4b7fb4,#5d7aaf,#7172a7,#85699d,#985c91 512px,#3682b9 512px,#3c81b8,#4a7eb5,#5d79af,#7172a7,#85699d,#985c92 597.33px,#3582ba 597.33px,#3c81b9,#4a7eb6,#5d79b0,#7172a8,#85689e,#985c93 682.66px,#3582bb 682.66px,#3c81ba,#4a7eb7,#5d79b1,#7172a9,#85689f,#985c93 768px,#3582bc 768px,#3b81bb,#4a7eb8,#5d79b2,#7172aa,#8568a0,#975c94 853.33px,#3582bd 853.33px,#3b81bc,#4a7eb8,#5d79b3,#7172ab,#8568a1,#975c95 938.66px,#3482be 938.66px,#3b81bc,#497eb9,#5c79b4,#7172ac,#8568a2,#975c96 1024px,#3482be 1024px,#3b81bd,#497eba,#5c79b4,#7172ac,#8568a2,#975c97 1109.33px,#3482bf 1109.33px,#3a81be,#497ebb,#5c79b5,#7172ad,#8468a3,#975c97 1194.66px,#3382c0 1194.66px,#3a81bf,#497ebc,#5c79b6,#7072ae,#8468a4,#975b98 1280px,#3381c1 1280px,#3a80c0,#497ebd,#5c79b7,#7071af,#8468a5,#975b99 1365.33px)"></i>
<i class="m5" style="background:linear-gradient(90deg,#2e8894 0px,#338893,#408691,#50828d,#637d87,#76767f,#886c76 85.33px,#2e8895 85.33px,#338894,#408691,#50828d,#637d88,#757680,#886c77 170.67px,#2d8895 170.67px,#338895,#3f8692,#50828e,#637d88,#757581,#886c78 256px,#2d8896 256px,#338895,#3f8693,#50828f,#637d89,#757582,#876c79 341.33px,#2d8897 341.33px,#328796,#3f8694,#508290,#637d8a,#757582,#876c79 426.67px,#2d8898 426.67px,#328797,#3f8595,#508291,#627d8b,#757583,#876c7a 512px,#2c8899 512px,#328798,#3f8595,#508291,#627c8c,#757584,#876c7b 597.33px,#2c8899 597.33px,#328799,#3f8596,#508292,#627c8c,#757585,#876c7c 682.66px,#2c889a 682.66px,#328799,#3e8597,#4f8293,#627c8d,#757586,#876c7c 768px,#2b889b 768px,#31879a,#3e8598,#4f8294,#627c8e,#757586,#876c7d 853.33px,#2b889c 853.33px,#31879b,#3e8599,#4f8295,#627c8f,#757587,#876c7e 938.66px,#2b889d 938.66px,#31879c,#3e8599,#4f8295,#627c90,#757588,#876c7f 1024px,#2b889d 1024px,#31879d,#3e859a,#4f8196,#627c90,#757589,#876c80 1109.33px,#2a889e 1109.33px,#30879d,#3e859b,#4f8197,#627c91,#757589,#876b80 1194.66px,#2a889f 1194.66px,#30879e,#3d859c,#4f8198,#627c92,#75758a,#876b81 1280px,#2a88a0 1280px,#30879f,#3d859d,#4f8199,#617c93,#74758b,#876b82 1365.33px)"></i>
<i class="m6" style="background:linear-gradient(90deg,#248c76 0px,#298c75,#348b73,#448870,#55846c,#667f66,#77785f 85.33px,#238c76 85.33px,#298c76,#348b74,#448871,#55846d,#667f67,#777860 170.67px,#238c77 170.67px,#288c76,#348b75,#438872,#54846d,#667f68,#777860 256px,#238c78 256px,#288c77,#348a76,#438873,#54846e,#667f68,#777861 341.33px,#238c79 341.33px,#288c78,#348a76,#438873,#54846f,#667f69,#777762 426.67px,#228c79 426.67px,#288c79,#348a77,#438874,#548470,#667e6a,#777763 512px,#228c7a 512px,#288c7a,#348a78,#438875,#548470,#667e6b,#777763 597.33px,#228c7b 597.33px,#278c7a,#338a79,#438876,#548471,#667e6b,#777764 682.66px,#228c7c 682.66px,#278c7b,#338a79,#438876,#548472,#667e6c,#777765 768px,#218c7c 768px,#278c7c,#338a7a,#438877,#548473,#667e6d,#776 853.33px,#218c7d 853.33px,#278c7d,#338a7b,#438878,#548473,#667e6e,#776 938.66px,#218c7e 938.66px,#268c7d,#338a7c,#438879,#548474,#667e6e,#777767 1024px,#208c7f 1024px,#268b7e,#338a7c,#428879,#548475,#657e6f,#777768 1109.33px,#208c80 1109.33px,#268b7f,#328a7d,#42877a,#548476,#657e70,#777769 1194.66px,#208c80 1194.66px,#268b80,#328a7e,#42877b,#548376,#657e71,#777769 1280px,#1f8c81 1280px,#258b81,#328a7f,#42877c,#548377,#657e71,#77776a 1365.33px)"></i>
</div>
<div class="tr" style="top:1280.00px">
<i class="m0" style="background:linear-gradient(90deg,#6e4bff 0px,#7349ff,#7f44ff,#8f3bff,#a029fb,#b000e6,#bf00cf 85.33px,#6d4bff 85.33px,#7249ff,#7e44ff,#8f3aff,#a029fc,#b000e6,#bf00d0 170.67px,#6d4aff 170.67px,#7249ff,#7e44ff,#8e3aff,#a029fd,#b000e7,#bf00d1 256px,#6d4aff 256px,#7248ff,#7e44ff,#8e3aff,#9f29fe,#b000e8,#bf00d2 341.33px,#6d4aff 341.33px,#7248ff,#7e43ff,#8e3aff,#9f28ff,#b000e9,#bf00d3 426.67px,#6d4aff 426.67px,#7248ff,#7e43ff,#8e3aff,#9f28ff,#af00ea,#bf00d4 512px,#6c49ff 512px,#7148ff,#7d43ff,#8e39ff,#9f28ff,#af00eb,#bf00d4 597.33px,#6c49ff 597.33px,#7148ff,#7d43ff,#8d39ff,#9f28ff,#af00eb,#be00d5 682.66px,#6c49ff 682.66px,#7147ff,#7d43ff,#8d39ff,#9e27ff,#af00ec,#be00d6 768px,#6c49ff 768px,#7147ff,#7d42ff,#8d39ff,#9e27ff,#af00ed,#be00d7 853.33px,#6c49ff 853.33px,#7147ff,#7d42ff,#8d39ff,#9e27ff,#af00ee,#be00d8 938.66px,#6b48ff 938.66px,#7047ff,#7c42ff,#8c38ff,#9e27ff,#ae00ef,#be00d9 1024px,#6b48ff 1024px,#7047ff,#7c42ff,#8c38ff,#9e26ff,#ae00f0,#be00d9 1109.33px,#6b48ff 1109.33px,#7046ff,#7c41ff,#8c38ff,#9d26ff,#ae00f0,#be00da 1194.66px,#6b48ff 1194.66px,#7046ff,#7c41ff,#8c38ff,#9d26ff,#ae00f1,#bd00db 1280px,#6b48ff 1280px,#7046ff,#7b41ff,#8c37ff,#9d25ff,#ae00f2,#bd00dc 1365.33px)"></i>
<i class="m1" style="background:linear-gradient(90deg,#6358ff 0px,#6956ff,#7751ff,#8947ff,#9b38f4,#ac1de0,#bc00cb 85.33px,#6358ff 85.33px,#6956ff,#7751ff,#8847ff,#9b38f5,#ac1de1,#bc00cc 170.67px,#6358ff 170.67px,#6956ff,#7650ff,#8847ff,#9b38f6,#ac1de2,#bc00cd 256px,#6357ff 256px,#6955ff,#7650ff,#8847ff,#9a38f7,#ac1ce3,#bc00ce 341.33px,#6357ff 341.33px,#6955ff,#7650ff,#8847ff,#9a38f8,#ac1ce4,#bb00cf 426.67px,#6357ff 426.67px,#6855ff,#7650ff,#8846ff,#9a37f9,#ab1ce4,#bb00cf 512px,#6257ff 512px,#6855ff,#7650ff,#8746ff,#9a37f9,#ab1be5,#bb00d0 597.33px,#6257ff 597.33px,#6855ff,#754fff,#8746ff,#9a37fa,#ab1be6,#bb00d1 682.66px,#6256ff 682.66px,#6854ff,#754fff,#8746ff,#9937fb,#ab1be7,#bb00d2 768px,#6256ff 768px,#6854ff,#754fff,#8746ff,#9937fc,#ab1ae8,#bb00d3 853.33px,#6256ff 853.33px,#6854ff,#754fff,#8745ff,#9936fd,#ab1ae9,#bb00d4 938.66px,#6256ff 938.66px,#6754ff,#754fff,#8645ff,#9936fd,#aa19e9,#bb00d4 1024px,#6155ff 1024px,#6754ff,#744eff,#8645ff,#9936fe,#aa19ea,#ba00d5 1109.33px,#6155ff 1109.33px,#6753ff,#744eff,#8645ff,#9936ff,#aa19eb,#ba00d6 1194.66px,#6155ff 1194.66px,#6753ff,#744eff,#8645ff,#9836ff,#aa18ec,#ba00d7 1280px,#6155ff 1280px,#6753ff,#744eff,#8644ff,#9835ff,#aa18ed,#ba00d8 1365.33px)"></i>
<i class="m2" style="background:linear-gradient(90deg,#516bff 0px,#5869ff,#6764fe,#7b5bf2,#8f4fe4,#a23ed3,#b321c0 85.33px,#516aff 85.33px,#5769ff,#6764fe,#7b5bf3,#8f4fe4,#a23ed3,#b320c1 170.67px,#506aff 170.67px,#5768ff,#6763ff,#7b5bf4,#8f4fe5,#a23ed4,#b320c2 256px,#506aff 256px,#5768ff,#6763ff,#7a5bf5,#8f4fe6,#a23dd5,#b320c3 341.33px,#506aff 341.33px,#5768ff,#6663ff,#7a5bf6,#8f4ee7,#a23dd6,#b31fc4 426.67px,#506aff 426.67px,#5768ff,#6663ff,#7a5af6,#8e4ee8,#a23dd7,#b31fc4 512px,#5069ff 512px,#5768ff,#6663ff,#7a5af7,#8e4ee9,#a13dd8,#b31fc5 597.33px,#5069ff 597.33px,#5667ff,#6663ff,#7a5af8,#8e4ee9,#a13dd8,#b31fc6 682.66px,#4f69ff 682.66px,#5667ff,#6662ff,#7a5af9,#8e4eea,#a13dd9,#b21ec7 768px,#4f69ff 768px,#5667ff,#6662ff,#795afa,#8e4eeb,#a13cda,#b21ec8 853.33px,#4f69ff 853.33px,#5667ff,#6562ff,#795afb,#8e4eec,#a13cdb,#b21ec9 938.66px,#4f68ff 938.66px,#5667ff,#6562ff,#795afb,#8d4ded,#a13cdc,#b21dc9 1024px,#4f68ff 1024px,#5667ff,#6562ff,#7959fc,#8d4dee,#a13cdd,#b21dca 1109.33px,#4f68ff 1109.33px,#56f,#6562ff,#7959fd,#8d4dee,#a03cdd,#b21dcb 1194.66px,#4e68ff 1194.66px,#56f,#6561ff,#7959fe,#8d4def,#a03cde,#b21ccc 1280px,#4e68ff 1280px,#56f,#6461ff,#7859ff,#8d4df0,#a03bdf,#b21ccd 1365.33px)"></i>
<i class="m3" style="background:linear-gradient(90deg,#3f78e5 0px,#4777e3,#5673de,#6b6cd6,#8063cb,#9456be,#a645af 85.33px,#3f78e5 85.33px,#4677e4,#5673df,#6b6cd7,#8063cc,#9456bf,#a645b0 170.67px,#3f78e6 170.67px,#4677e5,#5673e0,#6a6cd8,#8063cd,#9456c0,#a645b1 256px,#3f78e7 256px,#4677e5,#5673e1,#6a6cd9,#7f62ce,#9456c1,#a644b2 341.33px,#3f78e8 341.33px,#4676e6,#5673e2,#6a6cda,#7f62cf,#9355c1,#a644b2 426.67px,#3e78e9 426.67px,#4676e7,#5672e2,#6a6cda,#7f62d0,#9355c2,#a644b3 512px,#3e78ea 512px,#4576e8,#5572e3,#6a6cdb,#7f62d0,#9355c3,#a644b4 597.33px,#3e77ea 597.33px,#4576e9,#5572e4,#6a6cdc,#7f62d1,#9355c4,#a644b5 682.66px,#3e77eb 682.66px,#4576ea,#5572e5,#696bdd,#7f62d2,#9355c5,#a644b6 768px,#3d77ec 768px,#4576ea,#5572e6,#696bde,#7f62d3,#9355c6,#a544b7 853.33px,#3d77ed 853.33px,#4476eb,#5572e7,#696bdf,#7e62d4,#9355c6,#a544b7 938.66px,#3d77ee 938.66px,#4475ec,#5472e7,#696bdf,#7e62d5,#9355c7,#a543b8 1024px,#3d77ef 1024px,#4475ed,#5472e8,#696be0,#7e61d5,#9255c8,#a543b9 1109.33px,#3c77ef 1109.33px,#4475ee,#5471e9,#696be1,#7e61d6,#9254c9,#a543ba 1194.66px,#3c76f0 1194.66px,#4475ef,#5471ea,#686be2,#7e61d7,#9254ca,#a543bb 1280px,#3c76f1 1280px,#4375ef,#5471eb,#686be3,#7e61d8,#9254cb,#a543bc 1365.33px)"></i>
<i class="m4" style="background:linear-gradient(90deg,#3381c2 0px,#3a80c1,#487ebd,#5c79b8,#7071b0,#8468a6,#975b9a 85.33px,#3381c3 85.33px,#3980c1,#487ebe,#5c79b9,#7071b1,#8468a6,#975b9b 170.67px,#3281c3 170.67px,#3980c2,#487dbf,#5b79b9,#7071b1,#8468a7,#975b9b 256px,#3281c4 256px,#3980c3,#487dc0,#5b78ba,#7071b2,#8467a8,#975b9c 341.33px,#3281c5 341.33px,#3980c4,#487dc1,#5b78bb,#7071b3,#8467a9,#975b9d 426.67px,#3181c6 426.67px,#3880c5,#477dc2,#5b78bc,#7071b4,#8467aa,#975b9e 512px,#3181c7 512px,#3880c6,#477dc2,#5b78bd,#6f71b5,#8467ab,#965b9f 597.33px,#3181c8 597.33px,#3880c6,#477dc3,#5b78be,#6f71b5,#8367ab,#965ba0 682.66px,#3081c8 682.66px,#3880c7,#477dc4,#5a78be,#6f71b6,#8367ac,#965ba0 768px,#3081c9 768px,#3780c8,#477dc5,#5a78bf,#6f71b7,#8367ad,#965ba1 853.33px,#3080ca 853.33px,#377fc9,#467dc6,#5a78c0,#6f71b8,#8367ae,#965aa2 938.66px,#2f80cb 938.66px,#377fca,#467dc6,#5a78c1,#6f71b9,#8367af,#965aa3 1024px,#2f80cc 1024px,#367fcb,#467dc7,#5a78c2,#6f70ba,#8367af,#965aa4 1109.33px,#2f80cd 1109.33px,#367fcb,#467cc8,#5a78c2,#6e70ba,#8367b0,#965aa4 1194.66px,#2e80cd 1194.66px,#367fcc,#467cc9,#5977c3,#6e70bb,#8367b1,#965aa5 1280px,#2e80ce 1280px,#367fcd,#457cca,#5977c4,#6e70bc,#8366b2,#965aa6 1365.33px)"></i>
<i class="m5" style="background:linear-gradient(90deg,#2987a1 0px,#2f87a0,#3d859e,#4e8199,#617c94,#74758c,#876b83 85.33px,#2987a1 85.33px,#2f87a1,#3d859e,#4e819a,#617c94,#74758d,#876b83 170.67px,#2987a2 170.67px,#2f87a1,#3d859f,#4e819b,#617c95,#74758d,#876b84 256px,#2887a3 256px,#2f87a2,#3c85a0,#4e819c,#617c96,#74748e,#876b85 341.33px,#2887a4 341.33px,#2e87a3,#3c85a1,#4e819d,#617c97,#74748f,#876b86 426.67px,#2887a5 426.67px,#2e86a4,#3c84a2,#4e819d,#617c97,#747490,#876b87 512px,#2787a5 512px,#2e86a5,#3c84a2,#4e819e,#617c98,#747491,#866b87 597.33px,#2787a6 597.33px,#2d86a5,#3b84a3,#4d819f,#617b99,#747491,#866b88 682.66px,#2787a7 682.66px,#2d86a6,#3b84a4,#4d81a0,#607b9a,#747492,#866b89 768px,#2687a8 768px,#2d86a7,#3b84a5,#4d81a1,#607b9b,#747493,#866b8a 853.33px,#2687a9 853.33px,#2d86a8,#3b84a6,#4d81a1,#607b9b,#747494,#866b8a 938.66px,#2587aa 938.66px,#2c86a9,#3b84a6,#4d81a2,#607b9c,#737495,#866b8b 1024px,#2587aa 1024px,#2c86aa,#3a84a7,#4d80a3,#607b9d,#737495,#866b8c 1109.33px,#2587ab 1109.33px,#2c86aa,#3a84a8,#4c80a4,#607b9e,#737496,#866a8d 1194.66px,#2487ac 1194.66px,#2b86ab,#3a84a9,#4c80a5,#607b9f,#737497,#866a8e 1280px,#2487ad 1280px,#2b86ac,#3a84aa,#4c80a5,#607b9f,#737498,#866a8e 1365.33px)"></i>
<i class="m6" style="background:linear-gradient(90deg,#1f8c82 0px,#258b81,#328a80,#42877d,#538378,#657e72,#77776b 85.33px,#1f8c83 85.33px,#258b82,#328a80,#42877d,#538379,#657e73,#77776c 170.67px,#1e8c83 170.67px,#258b83,#318a81,#42877e,#53837a,#657e74,#77776c 256px,#1e8c84 256px,#248b84,#318a82,#42877f,#53837a,#657e74,#77776d 341.33px,#1e8c85 341.33px,#248b84,#318a83,#418780,#53837b,#657e75,#77776e 426.67px,#1d8c86 426.67px,#248b85,#318a83,#418780,#53837c,#657e76,#77776f 512px,#1d8c87 512px,#238b86,#318a84,#418781,#53837d,#657e77,#77776f 597.33px,#1c8c87 597.33px,#238b87,#308a85,#418782,#53837d,#657e77,#777770 682.66px,#1c8b88 682.66px,#238b87,#308a86,#418783,#53837e,#657e78,#777771 768px,#1c8b89 768px,#228b88,#308a87,#418783,#53837f,#657e79,#767672 853.33px,#1b8b8a 853.33px,#228b89,#308987,#418784,#538380,#657e7a,#767672 938.66px,#1b8b8a 938.66px,#228b8a,#308988,#408785,#528380,#657d7a,#767673 1024px,#1a8b8b 1024px,#218b8b,#2f8989,#408786,#528381,#647d7b,#767674 1109.33px,#1a8b8c 1109.33px,#218b8b,#2f898a,#408787,#528382,#647d7c,#767675 1194.66px,#198b8d 1194.66px,#218b8c,#2f898a,#408787,#528383,#647d7d,#767675 1280px,#198b8e 1280px,#208b8d,#2f898b,#408788,#528384,#647d7e,#767676 1365.33px)"></i>
</div>
</div>
<div class="ah" style="top:189px"></div><div class="ah" style="top:1554px;background:repeating-linear-gradient(158.2deg,#fff 0 2.11px,#000 2.11px 5.08px,#fff 5.08px 5.94px)"></div>
<div class="av" style="left:224px"></div><div class="av" style="left:1589.4px;background:repeating-linear-gradient(111.8deg,#fff 0 2.04px,#000 2.04px 5.01px,#fff 5.01px 5.94px)"></div>
<div style="left:0;top:1778px;width:2240px;height:1px;background:#1c1c1c"></div>
<div id="bar" style="left:488px;top:1581px;width:839.8px;height:87px;background:#323232;border-radius:9px">
<div style="left:10px;top:10px;width:10.4px;height:68px;background:#a2a2a2;border-radius:5.2px"></div>
<svg style="left:0;top:0" width="840" height="87" viewBox="0 0 840 87"><g transform="translate(52 19)" fill="#d4d4d4"><path d="M15.600 15.400C10.500 19.500 8 27 9.200 33.800C10.500 40.500 17 43.600 23.600 42.400C27.200 41.700 30 40.200 31.800 38.100C27.500 39.600 22.600 39.600 19.300 37.500C16 35.200 15 31.400 16.500 27.300C17.600 24 19.600 20.600 21.800 17.400C19.300 19 16.800 21.800 15 25.300C14 21.800 14.400 18.300 15.600 15.400Z"/><path d="M17.600 33.200C18.200 29.200 19.800 25.600 22.200 23.900C25 22.400 28.700 23.700 30.300 26.400C31.600 29.100 30 32.400 26.900 33.800C23.800 35 20.300 34.300 17.600 33.200Z"/><path d="M26.800 21.800Q32 14.500 38.600 9.700C40.400 8.300 42.900 8.600 42 10.800Q38.500 19.500 32.200 26.500C30.900 24.400 29.100 22.800 26.800 21.800Z"/></g><path d="M104.9 72.100h10.300l-5.150 5.300z" fill="#fff"/><path d="M580.0 72.100h10.300l-5.150 5.300z" fill="#fff"/><path d="M674.8 72.100h10.300l-5.150 5.300z" fill="#fff"/><g transform="translate(147 19)"><rect x="25.600" y="8.900" width="16.400" height="33.100" fill="#d4d4d4"/><path d="M8.900 14.200V8.900h5.400v3.300h-2.100v2zM17.900 8.900h5.600v3.300h-5.600zM8.900 17.900h3.300v5.900h-3.300zM8.900 26.800h3.300v6.200h-3.300zM8.900 36.800V42h5.400v-3.300h-2.100v-1.900zM17.900 38.700h5.600V42h-5.600z" fill="#d4d4d4"/><path d="M14 25.500l6.800-6.500v4.500h4.800v3.900h-4.800v4.400z" fill="#d4d4d4"/><path d="M36.900 25.500l-6.200-6.500v4.500h-5.100v3.900h5.100v4.400z" fill="#323232"/></g><g transform="translate(147 19)" fill="#d4d4d4"><path d="M103 16.400V11h4.200v3.300h-.9v2.100zM109.500 11h4.800v3.300h-4.800zM117.900 11h6.200v3.300h-6.200zM134.800 17.900h3.300v5.900h-3.300zM134.800 26.800h3.300v5.400h-3.300zM133.900 34.500h.9v2h3.300v3.300h-4.200zM116.700 36.500h6.500v3.300h-6.500zM126.200 36.500h5.400v3.300h-5.400zM103 19h3.300v5.400H103zM103 27.400h3.300v5.400H103z"/><path d="M122 23.500V14.500l3.100 3.100 6.400-6.400h6.600v1.200l-9.300 8 3.100 3.100z"/><path d="M118.800 27.400v8.600l-3.100-3.100-6.600 6.900H103v-4.700l1.500 1.300 8-8-3-3z"/></g><rect x="344.9" y="29.2" width="35.300" height="30.600" fill="#d4d4d4"/><circle cx="362.4" cy="44.4" r="8.900" fill="#323232"/><circle cx="457.5" cy="43.8" r="15.3" fill="none" stroke="#d4d4d4" stroke-width="2.600"/><path d="M468.11 33.19A15 15 0 0 1 446.89 54.41z" fill="#d4d4d4"/><g transform="translate(522 19)" fill="#d4d4d4"><path d="M13.800 21.900L26.700 10.100 36.800 17C39 18 39.300 21 38.800 25.300H36.200C36.500 22.500 36.300 20.500 35.300 19.500L23.600 31.400z"/><path d="M18.300 10.200L24.900 16.200" stroke="#323232" stroke-width="5.200" stroke-linecap="round"/><path d="M18.400 10.300L21.600 13.200" stroke="#d4d4d4" stroke-width="2.600" stroke-linecap="round"/><path d="M22.300 13.800L24.600 15.900" stroke="#323232" stroke-width="2.200" stroke-linecap="round"/><circle cx="39.500" cy="34.750" r="6.400" fill="none" stroke="#d4d4d4" stroke-width="2.300" stroke-dasharray="2.700 2.327" stroke-dashoffset="1.3"/></g><circle cx="635.0" cy="44.500" r="4.050" fill="#d4d4d4"/><circle cx="647.5" cy="44.500" r="4.050" fill="#d4d4d4"/><circle cx="660.0" cy="44.500" r="4.050" fill="#d4d4d4"/></svg>
</div>
<span id="desel" class="t" style="left:1205.50px;top:1613.27px;font-size:26.5px;color:#ececec;transform:scaleX(0.9192)">Deselect</span>
<div style="left:2239px;top:0;width:42px;height:1779px;background:#282828"></div>
<div style="left:2244px;top:338px;width:29px;height:791px;background:#484848;border-radius:2px"></div>
<svg style="left:2252px;top:1746px" width="19" height="13" viewBox="0 0 19 13"><path d="M2.2 2.4 9.5 9.3 16.8 2.4" fill="none" stroke="#a4a4a4" stroke-width="2.6"/></svg>
<div style="left:2281px;top:0;width:6.5px;height:1779px;background:linear-gradient(90deg,#2c2c2c 0 2.6px,#222 2.6px 100%)"></div>
<div style="left:2287.4px;top:0;width:92.8px;height:1779px;background:#323232"></div>
<div style="left:2380.2px;top:0;width:6.8px;height:1779px;background:linear-gradient(90deg,#222 0 2px,#2c2c2c 2px 5px,#222 5px)"></div>
<div style="left:2387px;top:0;width:639px;height:1779px;background:#323232"></div>
<div style="left:2499px;top:0;width:468px;height:365px;background:linear-gradient(180deg,rgba(0,0,0,.33),#000),linear-gradient(90deg,#fff,#db231c)"></div>
<div style="left:3008.6px;top:0;width:18px;height:365px;background:linear-gradient(180deg,#2c00ff 0,#2a00ff 8px,#90ffff 89px,#90ffa0 130px,#90ff3c 180px,#c8ff3c 235px,#ffff3c 274px,#e8902e 320px,#e03c28 350px,#e02820 365px)"></div>
<svg style="left:2982px;top:350px" width="27" height="28" viewBox="0 0 27 28"><path d="M9.200 8.200 18.300 14 9.200 19.800z" fill="#222" stroke="#222" stroke-width="8" stroke-linejoin="round"/><path d="M9.200 8.200 18.300 14 9.200 19.800z" fill="#e2e2e2" stroke="#e2e2e2" stroke-width="5.200" stroke-linejoin="round"/></svg>
<div style="left:2385px;top:416.9px;width:641px;height:6.7px;background:linear-gradient(180deg,#222 0 2px,#2c2c2c 2px 4px,#222 4px)"></div>
<div style="left:2387px;top:423.6px;width:639px;height:70.1px;background:linear-gradient(180deg,#262626 0 67.4px,#212121 67.4px)"></div>
<div style="left:2387.5px;top:423.6px;width:167.1px;height:71px;background:#323232;border-right:2.2px solid #212121"></div>
<div style="left:2743px;top:423.5px;width:1.5px;height:69.5px;background:#2c2c2c"></div>
<div style="left:2888.5px;top:423.5px;width:1.5px;height:69.5px;background:#2c2c2c"></div>
<span id="tprop" class="t b" style="left:2409.80px;top:441.91px;font-size:25.5px;color:#e4e4e4;transform:scaleX(0.9713)">Properties</span>
<span id="tadj" class="t b" style="left:2574.00px;top:441.91px;font-size:25.5px;color:#8a8a8a;transform:scaleX(0.9769)">Adjustments</span>
<span id="tlib" class="t b" style="left:2767.00px;top:441.91px;font-size:25.5px;color:#8a8a8a;transform:scaleX(0.9479)">Libraries</span>
<div style="left:2413.5px;top:507.4px;width:58.3px;height:58.5px;background:#1e1e1e;border:2px solid #3d3d3d;border-radius:7px"></div>
<svg style="left:2424px;top:514px" width="38" height="44" viewBox="0 0 38 44"><path d="M6.1 6.1h14.600l10.500 10.500v20.200h-25.100z M20.400 6.400v10.400h10.500" fill="none" stroke="#d6d6d6" stroke-width="2.7"/></svg>
<span id="tdoc" class="t" style="left:2484.90px;top:525.27px;font-size:26.5px;color:#bdbdbd;transform:scaleX(0.9547)">Document</span>
<div style="left:2387px;top:575.5px;width:639px;height:4px;background:#2a2a2a"></div>
<svg style="left:2402px;top:606px" width="28" height="20" viewBox="0 0 28 20"><path d="M4 4.700 13.400 14 22.800 4.700" fill="none" stroke="#c4c4c4" stroke-width="2.500"/></svg>
<span id="tcanvas" class="t b" style="left:2444.00px;top:604.41px;font-size:25.5px;color:#e4e4e4;transform:scaleX(1.0225)">Canvas</span>
<svg style="left:2432px;top:685px" width="27" height="43" viewBox="0 0 27 43"><g fill="none" stroke="#d4d4d4" stroke-width="3.100"><path d="M8.67 20.08A7.85 8.60 0 1 1 18.33 20.08"/><path d="M8.67 22.52A7.85 8.60 0 1 0 18.33 22.52"/></g><rect x="9.60" y="10.600" width="8" height="21.600" rx="3.500" fill="#323232"/><rect x="11.75" y="13" width="3.700" height="16.800" rx="1.200" fill="#d6d6d6"/></svg>
<span id="tW" class="t" style="left:2517.00px;top:662.97px;font-size:26.5px;color:#b6b6b6;transform:scaleX(0.8659)">W</span>
<div class="box" style="left:2556px;top:655.2px;width:131.8px;height:41.6px"></div>
<span id="tw4096" class="t" style="left:2566.00px;top:663.57px;font-size:26.5px;color:#f0f0f0;transform:scaleX(0.9540)">4096 px</span>
<span id="tX" class="t" style="left:2724.50px;top:662.97px;font-size:26.5px;color:#b6b6b6;transform:scaleX(0.8611)">X</span>
<div class="box" style="left:2759.3px;top:655.2px;width:131.8px;height:41.6px;border-color:#3e3e3e;background:#2a2a2a"></div>
<span id="tx0" class="t" style="left:2769.00px;top:662.97px;font-size:26.5px;color:#757575;transform:scaleX(0.9810)">0 px</span>
<span id="tH" class="t" style="left:2523.00px;top:725.27px;font-size:26.5px;color:#b6b6b6;transform:scaleX(0.8629)">H</span>
<div class="box" style="left:2556px;top:718.3px;width:131.8px;height:41.5px"></div>
<span id="th4096" class="t" style="left:2566.00px;top:725.17px;font-size:26.5px;color:#f0f0f0;transform:scaleX(0.9540)">4096 px</span>
<span id="tY" class="t" style="left:2724.50px;top:725.27px;font-size:26.5px;color:#b6b6b6;transform:scaleX(0.8043)">Y</span>
<div class="box" style="left:2759.3px;top:718.3px;width:131.8px;height:41.5px;border-color:#3e3e3e;background:#2a2a2a"></div>
<span id="ty0" class="t" style="left:2768.00px;top:724.87px;font-size:26.5px;color:#757575;transform:scaleX(0.9810)">0 px</span>
<div style="left:2556px;top:787.7px;width:62.4px;height:62.8px;background:#1e1e1e;border:2px solid #3d3d3d;border-radius:7px"></div>
<svg style="left:2560px;top:790px" width="120" height="56" viewBox="0 0 120 56"><rect x="10" y="9.600" width="33" height="38.100" fill="none" stroke="#d6d6d6" stroke-width="2.400"/><circle cx="26.500" cy="19.400" r="5" fill="#d6d6d6"/><path d="M16.300 41.400V29.300c0-2.200 1.500-3.500 3.500-3.500h13.400c2 0 3.500 1.300 3.500 3.500v12.100h-2.800v6.300H19.100v-6.300z" fill="#d6d6d6"/><rect x="72.200" y="14.700" width="38.400" height="27.900" fill="none" stroke="#d6d6d6" stroke-width="2.400"/><circle cx="91.400" cy="23.700" r="5" fill="#d6d6d6"/><path d="M81 42.600v-8.300c0-2.200 1.500-3.500 3.500-3.500h13.600c2 0 3.500 1.300 3.500 3.500v8.300z" fill="#d6d6d6"/></svg>
<span id="tres" class="t" style="left:2556.70px;top:879.07px;font-size:26.5px;color:#adadad;transform:scaleX(0.9634)">Resolution: 300 pixels/inch</span>
<span id="tmode" class="t" style="left:2476.70px;top:940.57px;font-size:26.5px;color:#b6b6b6;transform:scaleX(0.9372)">Mode</span>
<div class="dd" style="left:2558px;top:932.6px;width:332px;height:45.4px"></div>
<span id="tlabcolor" class="t" style="left:2578.50px;top:941.57px;font-size:26.5px;color:#f0f0f0;transform:scaleX(0.9232)">Lab Color</span>
<svg style="left:2863px;top:950px" width="21" height="16" viewBox="0 0 21 16"><path d="M3.700 4.600 10.300 11.200 16.900 4.600" fill="none" stroke="#d8d8d8" stroke-width="2.600"/></svg>
<div class="dd" style="left:2558px;top:994.9px;width:332px;height:45.3px"></div>
<span id="tbits" class="t" style="left:2579.50px;top:1003.87px;font-size:26.5px;color:#f0f0f0;transform:scaleX(0.9445)">8 Bits/Channel</span>
<svg style="left:2863px;top:1012.3px" width="21" height="16" viewBox="0 0 21 16"><path d="M3.700 4.600 10.300 11.200 16.900 4.600" fill="none" stroke="#d8d8d8" stroke-width="2.600"/></svg>
<div style="left:2385px;top:1113.900px;width:641px;height:7.100px;background:linear-gradient(180deg,#222 0 2px,#2c2c2c 2px 4.100px,#222 4.100px)"></div>
<div style="left:2387px;top:1121px;width:639px;height:68.200px;background:linear-gradient(180deg,#262626 0 65.500px,#212121 65.500px)"></div>
<div style="left:2505.800px;top:1121px;width:152px;height:69px;background:#323232;border-left:1.200px solid #212121;border-right:2.200px solid #212121"></div>
<div style="left:2763px;top:1119px;width:1.500px;height:69.500px;background:#2c2c2c"></div>
<span id="tlayers" class="t b" style="left:2410.30px;top:1139.01px;font-size:25.5px;color:#8a8a8a;transform:scaleX(0.8944)">Layers</span>
<span id="tchan" class="t b" style="left:2529.80px;top:1139.01px;font-size:25.5px;color:#e4e4e4;transform:scaleX(0.9316)">Channels</span>
<span id="tpaths" class="t b" style="left:2677.00px;top:1139.01px;font-size:25.5px;color:#8a8a8a;transform:scaleX(0.9265)">Paths</span>
<div style="left:2387px;top:1188.5px;width:639px;height:383px;background:#282828"></div>
<div class="row" style="top:1190.0px;height:102.2px;background:#323232"></div>
<div class="th" style="top:1208.0px"><div><i style="left:0;top:0.00px;width:75.2px;height:4.75px;background:linear-gradient(90deg,#767676 0.00px,#ce0000 4.70px,#767677 4.70px,#ce0000 9.40px,#767677 9.40px,#ce0000 14.10px,#767678 14.10px,#ce0000 18.80px,#767679 18.80px,#ce0000 23.50px,#767679 23.50px,#ce0000 28.20px,#76767a 28.20px,#ce0000 32.90px,#76767a 32.90px,#ce0000 37.60px,#76767b 37.60px,#ce0000 42.30px,#76767c 42.30px,#ce0000 47.00px,#76767c 47.00px,#ce0000 51.70px,#76767d 51.70px,#ce0000 56.40px,#76767d 56.40px,#ce0000 61.10px,#76767e 61.10px,#ce0000 65.80px,#75767f 65.80px,#ce0000 70.50px,#757680 70.50px,#ce0002 75.20px)"></i><i style="left:0;top:0.00px;width:75.2px;height:4.75px;background:linear-gradient(90deg,#289100 0.00px,#767c00 4.70px,#289100 4.70px,#767c00 9.40px,#289100 9.40px,#767c00 14.10px,#289100 14.10px,#767c00 18.80px,#289100 18.80px,#767c00 23.50px,#289100 23.50px,#767c00 28.20px,#289100 28.20px,#767c00 32.90px,#289100 32.90px,#767c00 37.60px,#289100 37.60px,#767c00 42.30px,#289100 42.30px,#767c00 47.00px,#289100 47.00px,#767c00 51.70px,#289100 51.70px,#767c00 56.40px,#289100 56.40px,#767c00 61.10px,#299100 61.10px,#767c00 65.80px,#299100 65.80px,#767c00 70.50px,#299100 70.50px,#767c00 75.20px);-webkit-mask-image:linear-gradient(180deg,transparent,#000);mask-image:linear-gradient(180deg,transparent,#000)"></i><i style="left:0;top:4.70px;width:75.2px;height:4.75px;background:linear-gradient(90deg,#757581 0.00px,#ce0007 4.70px,#757581 4.70px,#cd0009 9.40px,#757582 9.40px,#cd000b 14.10px,#757583 14.10px,#cd000c 18.80px,#757584 18.80px,#cd000e 23.50px,#757585 23.50px,#cd000f 28.20px,#757586 28.20px,#cd0010 32.90px,#757587 32.90px,#cd0011 37.60px,#757588 37.60px,#cd0013 42.30px,#74758a 42.30px,#cd0014 47.00px,#74758b 47.00px,#cd0015 51.70px,#74758c 51.70px,#cd0016 56.40px,#74758d 56.40px,#cd0017 61.10px,#74758f 61.10px,#cd0018 65.80px,#747490 65.80px,#cd0019 70.50px,#747491 70.50px,#cd001a 75.20px)"></i><i style="left:0;top:4.70px;width:75.2px;height:4.75px;background:linear-gradient(90deg,#299100 0.00px,#767c00 4.70px,#299100 4.70px,#767c00 9.40px,#299100 9.40px,#767c00 14.10px,#299100 14.10px,#767c00 18.80px,#299100 18.80px,#767c00 23.50px,#299100 23.50px,#767c00 28.20px,#299100 28.20px,#767c00 32.90px,#299100 32.90px,#767c00 37.60px,#299100 37.60px,#767c00 42.30px,#299100 42.30px,#767c00 47.00px,#299100 47.00px,#767c00 51.70px,#299100 51.70px,#767c00 56.40px,#299100 56.40px,#767c00 61.10px,#299100 61.10px,#767c00 65.80px,#299100 65.80px,#767c00 70.50px,#299100 70.50px,#767c00 75.20px);-webkit-mask-image:linear-gradient(180deg,transparent,#000);mask-image:linear-gradient(180deg,transparent,#000)"></i><i style="left:0;top:9.40px;width:75.2px;height:4.75px;background:linear-gradient(90deg,#737492 0.00px,#cd001b 4.70px,#737493 4.70px,#cd001c 9.40px,#737495 9.40px,#cd001d 14.10px,#737496 14.10px,#cd001e 18.80px,#737497 18.80px,#cd001e 23.50px,#737498 23.50px,#cd001f 28.20px,#737499 28.20px,#cd0020 32.90px,#73739a 32.90px,#cd0021 37.60px,#73739c 37.60px,#cd0022 42.30px,#73739d 42.30px,#cd0023 47.00px,#73739e 47.00px,#cd0024 51.70px,#73739f 51.70px,#cd0025 56.40px,#7373a0 56.40px,#cd0026 61.10px,#7372a1 61.10px,#cd0027 65.80px,#7372a2 65.80px,#cd0027 70.50px,#7372a3 70.50px,#cd0028 75.20px)"></i><i style="left:0;top:9.40px;width:75.2px;height:4.75px;background:linear-gradient(90deg,#299100 0.00px,#767c00 4.70px,#299100 4.70px,#767c00 9.40px,#299100 9.40px,#767c00 14.10px,#299100 14.10px,#767c00 18.80px,#299100 18.80px,#767c00 23.50px,#299100 23.50px,#767c00 28.20px,#299100 28.20px,#767c00 32.90px,#299100 32.90px,#767c00 37.60px,#299100 37.60px,#767c00 42.30px,#299100 42.30px,#767c00 47.00px,#299100 47.00px,#767c00 51.70px,#299100 51.70px,#767c00 56.40px,#299100 56.40px,#767c00 61.10px,#299100 61.10px,#767c00 65.80px,#299100 65.80px,#767c00 70.50px,#299100 70.50px,#767c00 75.20px);-webkit-mask-image:linear-gradient(180deg,transparent,#000);mask-image:linear-gradient(180deg,transparent,#000)"></i><i style="left:0;top:14.10px;width:75.2px;height:4.75px;background:linear-gradient(90deg,#7372a4 0.00px,#cd0029 4.70px,#7372a6 4.70px,#cd002a 9.40px,#7372a7 9.40px,#cd002b 14.10px,#7371a8 14.10px,#cd002c 18.80px,#7371a9 18.80px,#cd002d 23.50px,#7371aa 23.50px,#cd002e 28.20px,#7371ab 28.20px,#cd002e 32.90px,#7370ac 32.90px,#cd002f 37.60px,#7470ad 37.60px,#cd0030 42.30px,#7470ae 42.30px,#cd0031 47.00px,#7470af 47.00px,#cd0032 51.70px,#746fb0 51.70px,#cd0033 56.40px,#746fb1 56.40px,#cd0034 61.10px,#746fb2 61.10px,#cd0035 65.80px,#756fb3 65.80px,#cd0035 70.50px,#756eb4 70.50px,#cd0036 75.20px)"></i><i style="left:0;top:14.10px;width:75.2px;height:4.75px;background:linear-gradient(90deg,#299100 0.00px,#767c00 4.70px,#299100 4.70px,#767c00 9.40px,#299100 9.40px,#767c00 14.10px,#299100 14.10px,#767c00 18.80px,#299100 18.80px,#767c00 23.50px,#299100 23.50px,#767c00 28.20px,#299100 28.20px,#767c00 32.90px,#299100 32.90px,#767c00 37.60px,#299100 37.60px,#767c00 42.30px,#299100 42.30px,#767c00 47.00px,#299000 47.00px,#767c00 51.70px,#2a9000 51.70px,#767c00 56.40px,#2a9000 56.40px,#767c00 61.10px,#2a9000 61.10px,#767c00 65.80px,#2a9000 65.80px,#767c00 70.50px,#2a9000 70.50px,#767c00 75.20px);-webkit-mask-image:linear-gradient(180deg,transparent,#000);mask-image:linear-gradient(180deg,transparent,#000)"></i><i style="left:0;top:18.80px;width:75.2px;height:4.75px;background:linear-gradient(90deg,#756eb5 0.00px,#cd0037 4.70px,#756eb6 4.70px,#cd0038 9.40px,#766db7 9.40px,#cd0039 14.10px,#766db8 14.10px,#cd003a 18.80px,#766db9 18.80px,#cd003b 23.50px,#766cba 23.50px,#cd003c 28.20px,#776cbb 28.20px,#cd003c 32.90px,#776cbc 32.90px,#cd003d 37.60px,#776bbd 37.60px,#cd003e 42.30px,#786bbe 42.30px,#cd003f 47.00px,#786bbe 47.00px,#cd0040 51.70px,#786abf 51.70px,#cd0041 56.40px,#786ac0 56.40px,#cc0042 61.10px,#796ac1 61.10px,#cc0042 65.80px,#7969c2 65.80px,#cc0043 70.50px,#7969c3 70.50px,#c04 75.20px)"></i><i style="left:0;top:18.80px;width:75.2px;height:4.75px;background:linear-gradient(90deg,#2a9000 0.00px,#767c00 4.70px,#2a9000 4.70px,#767c00 9.40px,#2a9000 9.40px,#767c00 14.10px,#2a9000 14.10px,#767c00 18.80px,#2a9000 18.80px,#767c00 23.50px,#2a9000 23.50px,#767c00 28.20px,#2a9000 28.20px,#767c00 32.90px,#2a9000 32.90px,#767c00 37.60px,#2a9000 37.60px,#767c00 42.30px,#2a9000 42.30px,#767c00 47.00px,#2a9000 47.00px,#767c00 51.70px,#2a9000 51.70px,#767c00 56.40px,#2a9000 56.40px,#767c00 61.10px,#2a9000 61.10px,#767c00 65.80px,#2a9000 65.80px,#767c00 70.50px,#2a9000 70.50px,#767c00 75.20px);-webkit-mask-image:linear-gradient(180deg,transparent,#000);mask-image:linear-gradient(180deg,transparent,#000)"></i><i style="left:0;top:23.50px;width:75.2px;height:4.75px;background:linear-gradient(90deg,#7969c4 0.00px,#cc0045 4.70px,#7a68c5 4.70px,#cc0046 9.40px,#7a68c6 9.40px,#cc0047 14.10px,#7a68c6 14.10px,#cc0048 18.80px,#7a67c7 18.80px,#cc0049 23.50px,#7a67c8 23.50px,#cc0049 28.20px,#7a67c9 28.20px,#cc004a 32.90px,#7b66ca 32.90px,#cc004b 37.60px,#7b66cb 37.60px,#cc004c 42.30px,#7b66cb 42.30px,#cc004d 47.00px,#7b66cc 47.00px,#cc004e 51.70px,#7b65cd 51.70px,#cc004f 56.40px,#7b65ce 56.40px,#cc0050 61.10px,#7b65cf 61.10px,#cc0050 65.80px,#7b65cf 65.80px,#cc0051 70.50px,#7c64d0 70.50px,#cc0052 75.20px)"></i><i style="left:0;top:23.50px;width:75.2px;height:4.75px;background:linear-gradient(90deg,#2a9000 0.00px,#767c00 4.70px,#2a9000 4.70px,#767c00 9.40px,#2a9000 9.40px,#767c00 14.10px,#2b9000 14.10px,#767c00 18.80px,#2b9000 18.80px,#767c00 23.50px,#2b9000 23.50px,#767c00 28.20px,#2b9000 28.20px,#767c00 32.90px,#2b9000 32.90px,#767c00 37.60px,#2b9000 37.60px,#767c00 42.30px,#2b9000 42.30px,#767c00 47.00px,#2b9000 47.00px,#767c00 51.70px,#2b9000 51.70px,#767c00 56.40px,#2b9000 56.40px,#767c00 61.10px,#2b9000 61.10px,#767c00 65.80px,#2b9000 65.80px,#767c00 70.50px,#2b9000 70.50px,#777c00 75.20px);-webkit-mask-image:linear-gradient(180deg,transparent,#000);mask-image:linear-gradient(180deg,transparent,#000)"></i><i style="left:0;top:28.20px;width:75.2px;height:4.75px;background:linear-gradient(90deg,#7c64d1 0.00px,#cc0053 4.70px,#7c64d2 4.70px,#cc0054 9.40px,#7c64d2 9.40px,#c05 14.10px,#7c64d3 14.10px,#cc0056 18.80px,#7c63d4 18.80px,#cc0056 23.50px,#7c63d5 23.50px,#cc0057 28.20px,#7c63d5 28.20px,#cb0058 32.90px,#7c63d6 32.90px,#cb0059 37.60px,#7c63d7 37.60px,#cb005a 42.30px,#7c62d8 42.30px,#cb005b 47.00px,#7c62d8 47.00px,#cb005c 51.70px,#7c62d9 51.70px,#cb005d 56.40px,#7c62da 56.40px,#cb005d 61.10px,#7c62da 61.10px,#cb005e 65.80px,#7c62db 65.80px,#cb005f 70.50px,#7c61dc 70.50px,#cb0060 75.20px)"></i><i style="left:0;top:28.20px;width:75.2px;height:4.75px;background:linear-gradient(90deg,#2b9000 0.00px,#777c00 4.70px,#2b9000 4.70px,#777c00 9.40px,#2b9000 9.40px,#777c00 14.10px,#2b9008 14.10px,#777c00 18.80px,#2b900b 18.80px,#777c00 23.50px,#2b900d 23.50px,#777c00 28.20px,#2b900f 28.20px,#777c00 32.90px,#2b9011 32.90px,#777c00 37.60px,#2b9013 37.60px,#777b00 42.30px,#2b9014 42.30px,#777b00 47.00px,#2b9016 47.00px,#777b00 51.70px,#2b9017 51.70px,#777b00 56.40px,#2b9018 56.40px,#777b00 61.10px,#2b9019 61.10px,#777b00 65.80px,#2b901b 65.80px,#777b00 70.50px,#2b901c 70.50px,#777b00 75.20px);-webkit-mask-image:linear-gradient(180deg,transparent,#000);mask-image:linear-gradient(180deg,transparent,#000)"></i><i style="left:0;top:32.90px;width:75.2px;height:4.75px;background:linear-gradient(90deg,#7c61dc 0.00px,#cb0061 4.70px,#7c61dd 4.70px,#cb0062 9.40px,#7c61de 9.40px,#cb0063 14.10px,#7b61de 14.10px,#cb0064 18.80px,#7b61df 18.80px,#cb0064 23.50px,#7b60e0 23.50px,#cb0065 28.20px,#7b60e0 28.20px,#cb0066 32.90px,#7b60e1 32.90px,#cb0067 37.60px,#7b60e2 37.60px,#cb0068 42.30px,#7b60e3 42.30px,#cb0069 47.00px,#7b60e3 47.00px,#ca006a 51.70px,#7b60e4 51.70px,#ca006b 56.40px,#7b5fe5 56.40px,#ca006b 61.10px,#7b5fe5 61.10px,#ca006c 65.80px,#7b5fe6 65.80px,#ca006d 70.50px,#7b5fe7 70.50px,#ca006e 75.20px)"></i><i style="left:0;top:32.90px;width:75.2px;height:4.75px;background:linear-gradient(90deg,#2c901d 0.00px,#777b00 4.70px,#2c901e 4.70px,#777b00 9.40px,#2c901f 9.40px,#777b00 14.10px,#2c9020 14.10px,#777b00 18.80px,#2c9021 18.80px,#777b00 23.50px,#2c9022 23.50px,#777b00 28.20px,#2c9023 28.20px,#777b00 32.90px,#2c9024 32.90px,#777b00 37.60px,#2c9025 37.60px,#777b00 42.30px,#2c9025 42.30px,#777b00 47.00px,#2c9026 47.00px,#777b00 51.70px,#2c9027 51.70px,#777b00 56.40px,#2c9028 56.40px,#777b00 61.10px,#2c8f29 61.10px,#777b00 65.80px,#2c8f2a 65.80px,#777b00 70.50px,#2c8f2b 70.50px,#777b00 75.20px);-webkit-mask-image:linear-gradient(180deg,transparent,#000);mask-image:linear-gradient(180deg,transparent,#000)"></i><i style="left:0;top:37.60px;width:75.2px;height:4.75px;background:linear-gradient(90deg,#7b5fe7 0.00px,#ca006f 4.70px,#7b5fe8 4.70px,#ca0070 9.40px,#7b5ee9 9.40px,#ca0071 14.10px,#7b5ee9 14.10px,#ca0072 18.80px,#7b5eea 18.80px,#ca0072 23.50px,#7b5eeb 23.50px,#ca0073 28.20px,#7b5eeb 28.20px,#ca0074 32.90px,#7a5eec 32.90px,#ca0075 37.60px,#7a5ded 37.60px,#ca0076 42.30px,#7a5ded 42.30px,#ca0077 47.00px,#7a5dee 47.00px,#c90078 51.70px,#7a5def 51.70px,#c90079 56.40px,#7a5def 56.40px,#c90079 61.10px,#7a5df0 61.10px,#c9007a 65.80px,#7a5cf1 65.80px,#c9007b 70.50px,#7a5cf1 70.50px,#c9007c 75.20px)"></i><i style="left:0;top:37.60px;width:75.2px;height:4.75px;background:linear-gradient(90deg,#2c8f2c 0.00px,#777b08 4.70px,#2c8f2c 4.70px,#777b0b 9.40px,#2c8f2d 9.40px,#777b0e 14.10px,#2c8f2e 14.10px,#777b10 18.80px,#2c8f2f 18.80px,#777b11 23.50px,#2c8f30 23.50px,#777b13 28.20px,#2c8f30 28.20px,#777b14 32.90px,#2c8f31 32.90px,#777b16 37.60px,#2c8f32 37.60px,#777b17 42.30px,#2c8f33 42.30px,#777b18 47.00px,#2c8f34 47.00px,#777b19 51.70px,#2c8f35 51.70px,#777b1b 56.40px,#2c8f35 56.40px,#777b1c 61.10px,#2c8f36 61.10px,#777b1d 65.80px,#2c8f37 65.80px,#777b1e 70.50px,#2c8f38 70.50px,#777b1f 75.20px);-webkit-mask-image:linear-gradient(180deg,transparent,#000);mask-image:linear-gradient(180deg,transparent,#000)"></i><i style="left:0;top:42.30px;width:75.2px;height:4.75px;background:linear-gradient(90deg,#7a5cf2 0.00px,#c9007d 4.70px,#7a5cf3 4.70px,#c9007e 9.40px,#7a5cf3 9.40px,#c9007f 14.10px,#7a5cf4 14.10px,#c9007f 18.80px,#7a5bf5 18.80px,#c90080 23.50px,#795bf5 23.50px,#c90081 28.20px,#795bf6 28.20px,#c90082 32.90px,#795bf7 32.90px,#c90083 37.60px,#795bf7 37.60px,#c80084 42.30px,#795bf8 42.30px,#c80085 47.00px,#795af9 47.00px,#c80086 51.70px,#795af9 51.70px,#c80086 56.40px,#795afa 56.40px,#c80087 61.10px,#795afb 61.10px,#c80088 65.80px,#795afb 65.80px,#c80089 70.50px,#795afc 70.50px,#c8008a 75.20px)"></i><i style="left:0;top:42.30px;width:75.2px;height:4.75px;background:linear-gradient(90deg,#2c8f38 0.00px,#787b20 4.70px,#2c8f39 4.70px,#787b21 9.40px,#2c8f3a 9.40px,#787a22 14.10px,#2c8f3b 14.10px,#787a23 18.80px,#2c8f3c 18.80px,#787a24 23.50px,#2c8f3c 23.50px,#787a25 28.20px,#2c8f3d 28.20px,#787a26 32.90px,#2c8f3e 32.90px,#787a26 37.60px,#2c8f3f 37.60px,#787a27 42.30px,#2c8f3f 42.30px,#787a28 47.00px,#2c8f40 47.00px,#787a29 51.70px,#2c8f41 51.70px,#787a2a 56.40px,#2c8f42 56.40px,#787a2b 61.10px,#2b8f43 61.10px,#787a2c 65.80px,#2b8f43 65.80px,#787a2c 70.50px,#2b8f44 70.50px,#787a2d 75.20px);-webkit-mask-image:linear-gradient(180deg,transparent,#000);mask-image:linear-gradient(180deg,transparent,#000)"></i><i style="left:0;top:47.00px;width:75.2px;height:4.75px;background:linear-gradient(90deg,#7959fd 0.00px,#c8008b 4.70px,#7859fd 4.70px,#c8008c 9.40px,#7859fe 9.40px,#c8008d 14.10px,#7859ff 14.10px,#c8008d 18.80px,#7859ff 18.80px,#c8008e 23.50px,#7859ff 23.50px,#c7008f 28.20px,#7858ff 28.20px,#c70090 32.90px,#7858ff 32.90px,#c70091 37.60px,#7858ff 37.60px,#c70092 42.30px,#7858ff 42.30px,#c70093 47.00px,#7858ff 47.00px,#c70093 51.70px,#7758ff 51.70px,#c70094 56.40px,#7757ff 56.40px,#c70095 61.10px,#7757ff 61.10px,#c70096 65.80px,#7757ff 65.80px,#c70097 70.50px,#7757ff 70.50px,#c70098 75.20px)"></i><i style="left:0;top:47.00px;width:75.2px;height:4.75px;background:linear-gradient(90deg,#2b8f45 0.00px,#787a2e 4.70px,#2b8f46 4.70px,#787a2f 9.40px,#2b8f46 9.40px,#787a30 14.10px,#2b8f47 14.10px,#787a31 18.80px,#2b8f48 18.80px,#787a31 23.50px,#2b8f49 23.50px,#787a32 28.20px,#2b8e49 28.20px,#787a33 32.90px,#2b8e4a 32.90px,#787a34 37.60px,#2b8e4b 37.60px,#787a35 42.30px,#2b8e4c 42.30px,#787a35 47.00px,#2b8e4c 47.00px,#787a36 51.70px,#2b8e4d 51.70px,#787a37 56.40px,#2b8e4e 56.40px,#787a38 61.10px,#2b8e4f 61.10px,#787a38 65.80px,#2b8e4f 65.80px,#787a39 70.50px,#2b8e50 70.50px,#787a3a 75.20px);-webkit-mask-image:linear-gradient(180deg,transparent,#000);mask-image:linear-gradient(180deg,transparent,#000)"></i><i style="left:0;top:51.70px;width:75.2px;height:4.75px;background:linear-gradient(90deg,#7757ff 0.00px,#c60099 4.70px,#7756ff 4.70px,#c6009a 9.40px,#7756ff 9.40px,#c6009a 14.10px,#7756ff 14.10px,#c6009b 18.80px,#7756ff 18.80px,#c6009c 23.50px,#7656ff 23.50px,#c6009d 28.20px,#7656ff 28.20px,#c6009e 32.90px,#7655ff 32.90px,#c6009f 37.60px,#7655ff 37.60px,#c600a0 42.30px,#7655ff 42.30px,#c600a0 47.00px,#7655ff 47.00px,#c600a1 51.70px,#7655ff 51.70px,#c500a2 56.40px,#7655ff 56.40px,#c500a3 61.10px,#7554ff 61.10px,#c500a4 65.80px,#7554ff 65.80px,#c500a5 70.50px,#7554ff 70.50px,#c500a6 75.20px)"></i><i style="left:0;top:51.70px;width:75.2px;height:4.75px;background:linear-gradient(90deg,#2b8e51 0.00px,#787a3b 4.70px,#2a8e52 4.70px,#787a3c 9.40px,#2a8e52 9.40px,#78793c 14.10px,#2a8e53 14.10px,#78793d 18.80px,#2a8e54 18.80px,#78793e 23.50px,#2a8e55 23.50px,#78793f 28.20px,#2a8e56 28.20px,#78793f 32.90px,#2a8e56 32.90px,#787940 37.60px,#2a8e57 37.60px,#787941 42.30px,#2a8e58 42.30px,#787942 47.00px,#2a8e59 47.00px,#787942 51.70px,#2a8e59 51.70px,#787943 56.40px,#298e5a 56.40px,#787944 61.10px,#298e5b 61.10px,#787945 65.80px,#298e5c 65.80px,#787945 70.50px,#298e5c 70.50px,#787946 75.20px);-webkit-mask-image:linear-gradient(180deg,transparent,#000);mask-image:linear-gradient(180deg,transparent,#000)"></i><i style="left:0;top:56.40px;width:75.2px;height:4.75px;background:linear-gradient(90deg,#7554ff 0.00px,#c500a6 4.70px,#7554ff 4.70px,#c500a7 9.40px,#7553ff 9.40px,#c500a8 14.10px,#7553ff 14.10px,#c500a9 18.80px,#7553ff 18.80px,#c500aa 23.50px,#7453ff 23.50px,#c400ab 28.20px,#7453ff 28.20px,#c400ac 32.90px,#7453ff 32.90px,#c400ad 37.60px,#7452ff 37.60px,#c400ad 42.30px,#7452ff 42.30px,#c400ae 47.00px,#7452ff 47.00px,#c400af 51.70px,#7452ff 51.70px,#c400b0 56.40px,#7452ff 56.40px,#c400b1 61.10px,#7351ff 61.10px,#c400b2 65.80px,#7351ff 65.80px,#c300b3 70.50px,#7351ff 70.50px,#c300b3 75.20px)"></i><i style="left:0;top:56.40px;width:75.2px;height:4.75px;background:linear-gradient(90deg,#298e5d 0.00px,#787947 4.70px,#298e5e 4.70px,#787948 9.40px,#298e5f 9.40px,#787948 14.10px,#298e5f 14.10px,#787949 18.80px,#298e60 18.80px,#78794a 23.50px,#288d61 23.50px,#78794b 28.20px,#288d62 28.20px,#78794b 32.90px,#288d62 32.90px,#78794c 37.60px,#288d63 37.60px,#78794d 42.30px,#288d64 42.30px,#78794e 47.00px,#288d65 47.00px,#78794e 51.70px,#288d65 51.70px,#78794f 56.40px,#278d66 56.40px,#787950 61.10px,#278d67 61.10px,#787851 65.80px,#278d68 65.80px,#787851 70.50px,#278d69 70.50px,#787852 75.20px);-webkit-mask-image:linear-gradient(180deg,transparent,#000);mask-image:linear-gradient(180deg,transparent,#000)"></i><i style="left:0;top:61.10px;width:75.2px;height:4.75px;background:linear-gradient(90deg,#7351ff 0.00px,#c300b4 4.70px,#7351ff 4.70px,#c300b5 9.40px,#7351ff 9.40px,#c300b6 14.10px,#7250ff 14.10px,#c300b7 18.80px,#7250ff 18.80px,#c300b8 23.50px,#7250ff 23.50px,#c300b8 28.20px,#7250ff 28.20px,#c300b9 32.90px,#7250ff 32.90px,#c200ba 37.60px,#724fff 37.60px,#c200bb 42.30px,#724fff 42.30px,#c200bc 47.00px,#714fff 47.00px,#c200bd 51.70px,#714fff 51.70px,#c200be 56.40px,#714fff 56.40px,#c200be 61.10px,#714eff 61.10px,#c200bf 65.80px,#714eff 65.80px,#c200c0 70.50px,#714eff 70.50px,#c200c1 75.20px)"></i><i style="left:0;top:61.10px;width:75.2px;height:4.75px;background:linear-gradient(90deg,#278d69 0.00px,#787853 4.70px,#278d6a 4.70px,#787854 9.40px,#278d6b 9.40px,#787854 14.10px,#268d6c 14.10px,#787855 18.80px,#268d6c 18.80px,#787856 23.50px,#268d6d 23.50px,#787857 28.20px,#268d6e 28.20px,#787857 32.90px,#268d6f 32.90px,#787858 37.60px,#258d6f 37.60px,#787859 42.30px,#258d70 42.30px,#78785a 47.00px,#258d71 47.00px,#78785a 51.70px,#258d72 51.70px,#77785b 56.40px,#258d72 56.40px,#77785c 61.10px,#248d73 61.10px,#77785d 65.80px,#248d74 65.80px,#77785d 70.50px,#248d75 70.50px,#77785e 75.20px);-webkit-mask-image:linear-gradient(180deg,transparent,#000);mask-image:linear-gradient(180deg,transparent,#000)"></i><i style="left:0;top:65.80px;width:75.2px;height:4.75px;background:linear-gradient(90deg,#704eff 0.00px,#c100c2 4.70px,#704eff 4.70px,#c100c3 9.40px,#704dff 9.40px,#c100c4 14.10px,#704dff 14.10px,#c100c4 18.80px,#704dff 18.80px,#c100c5 23.50px,#704dff 23.50px,#c100c6 28.20px,#6f4dff 28.20px,#c100c7 32.90px,#6f4dff 32.90px,#c100c8 37.60px,#6f4cff 37.60px,#c000c9 42.30px,#6f4cff 42.30px,#c000c9 47.00px,#6f4cff 47.00px,#c000ca 51.70px,#6f4cff 51.70px,#c000cb 56.40px,#6e4cff 56.40px,#c000cc 61.10px,#6e4bff 61.10px,#c000cd 65.80px,#6e4bff 65.80px,#c000ce 70.50px,#6e4bff 70.50px,#bf00cf 75.20px)"></i><i style="left:0;top:65.80px;width:75.2px;height:4.75px;background:linear-gradient(90deg,#248c76 0.00px,#77785f 4.70px,#238c76 4.70px,#777860 9.40px,#238c77 9.40px,#777860 14.10px,#238c78 14.10px,#777861 18.80px,#238c79 18.80px,#777762 23.50px,#228c79 23.50px,#777763 28.20px,#228c7a 28.20px,#777763 32.90px,#228c7b 32.90px,#777764 37.60px,#228c7c 37.60px,#777765 42.30px,#218c7c 42.30px,#776 47.00px,#218c7d 47.00px,#776 51.70px,#218c7e 51.70px,#777767 56.40px,#208c7f 56.40px,#777768 61.10px,#208c80 61.10px,#777769 65.80px,#208c80 65.80px,#777769 70.50px,#1f8c81 70.50px,#77776a 75.20px);-webkit-mask-image:linear-gradient(180deg,transparent,#000);mask-image:linear-gradient(180deg,transparent,#000)"></i><i style="left:0;top:70.50px;width:75.2px;height:4.75px;background:linear-gradient(90deg,#6e4bff 0.00px,#bf00cf 4.70px,#6d4bff 4.70px,#bf00d0 9.40px,#6d4aff 9.40px,#bf00d1 14.10px,#6d4aff 14.10px,#bf00d2 18.80px,#6d4aff 18.80px,#bf00d3 23.50px,#6d4aff 23.50px,#bf00d4 28.20px,#6c49ff 28.20px,#bf00d4 32.90px,#6c49ff 32.90px,#be00d5 37.60px,#6c49ff 37.60px,#be00d6 42.30px,#6c49ff 42.30px,#be00d7 47.00px,#6c49ff 47.00px,#be00d8 51.70px,#6b48ff 51.70px,#be00d9 56.40px,#6b48ff 56.40px,#be00d9 61.10px,#6b48ff 61.10px,#be00da 65.80px,#6b48ff 65.80px,#bd00db 70.50px,#6b48ff 70.50px,#bd00dc 75.20px)"></i><i style="left:0;top:70.50px;width:75.2px;height:4.75px;background:linear-gradient(90deg,#1f8c82 0.00px,#77776b 4.70px,#1f8c83 4.70px,#77776c 9.40px,#1e8c83 9.40px,#77776c 14.10px,#1e8c84 14.10px,#77776d 18.80px,#1e8c85 18.80px,#77776e 23.50px,#1d8c86 23.50px,#77776f 28.20px,#1d8c87 28.20px,#77776f 32.90px,#1c8c87 32.90px,#777770 37.60px,#1c8b88 37.60px,#777771 42.30px,#1c8b89 42.30px,#767672 47.00px,#1b8b8a 47.00px,#767672 51.70px,#1b8b8a 51.70px,#767673 56.40px,#1a8b8b 56.40px,#767674 61.10px,#1a8b8c 61.10px,#767675 65.80px,#198b8d 65.80px,#767675 70.50px,#198b8e 70.50px,#767676 75.20px);-webkit-mask-image:linear-gradient(180deg,transparent,#000);mask-image:linear-gradient(180deg,transparent,#000)"></i></div></div>
<svg style="left:2400.9px;top:1239.3px" width="33" height="21" viewBox="0 0 33 21"><path d="M.6 10.300C6 3.200 11 .600 16.300.600S26.800 3.200 32.200 10.300C26.800 17.400 21.600 20 16.300 20S6 17.400.600 10.300z" fill="#d6d6d6"/><circle cx="16.100" cy="9.700" r="6.900" fill="#2e2e2e"/><rect x="16.600" y="6.800" width="3.200" height="2.600" fill="#d6d6d6"/></svg>
<span id="tn0" class="t" style="left:2544.00px;top:1231.07px;font-size:26.5px;color:#e8e8e8;transform:scaleX(0.8551)">Lab</span>
<span id="ts0" class="t" style="left:2951.30px;top:1231.07px;font-size:26.5px;color:#e0e0e0;transform:scaleX(0.9722)">Ctrl+2</span>
<div class="row" style="top:1295.5px;height:90.2px;background:#4a4a4a"></div>
<div class="th" style="top:1300.7px"><div style="background:#999"></div></div>
<svg style="left:2400.9px;top:1332.0px" width="33" height="21" viewBox="0 0 33 21"><path d="M.6 10.300C6 3.200 11 .600 16.300.600S26.800 3.200 32.200 10.300C26.800 17.400 21.600 20 16.300 20S6 17.400.600 10.300z" fill="#d6d6d6"/><circle cx="16.100" cy="9.700" r="6.900" fill="#2e2e2e"/><rect x="16.600" y="6.800" width="3.200" height="2.600" fill="#d6d6d6"/></svg>
<span id="tn1" class="t" style="left:2544.00px;top:1323.74px;font-size:26.5px;color:#e8e8e8;transform:scaleX(0.9146)">Lightness</span>
<span id="ts1" class="t" style="left:2951.30px;top:1323.74px;font-size:26.5px;color:#e0e0e0;transform:scaleX(0.9722)">Ctrl+3</span>
<div class="row" style="top:1387.2px;height:90.3px;background:#303030"></div>
<div class="th" style="top:1393.3px"><div style="background:linear-gradient(180deg,rgba(255,255,255,0),rgba(255,255,255,.28)),repeating-linear-gradient(180deg,rgba(0,0,0,0) 0,rgba(0,0,0,.55) 4.70px),repeating-linear-gradient(90deg,#6a6a6a 0,#ececec 4.70px)"></div></div>
<svg style="left:2400.9px;top:1424.6px" width="33" height="21" viewBox="0 0 33 21"><path d="M.6 10.300C6 3.200 11 .600 16.300.600S26.800 3.200 32.200 10.300C26.800 17.400 21.600 20 16.300 20S6 17.400.600 10.300z" fill="#d6d6d6"/><circle cx="16.100" cy="9.700" r="6.900" fill="#2e2e2e"/><rect x="16.600" y="6.800" width="3.200" height="2.600" fill="#d6d6d6"/></svg>
<span id="tn2" class="t" style="left:2543.00px;top:1416.41px;font-size:26.5px;color:#e8e8e8;transform:scaleX(0.8500)">a</span>
<span id="ts2" class="t" style="left:2951.30px;top:1416.41px;font-size:26.5px;color:#e0e0e0;transform:scaleX(0.9722)">Ctrl+4</span>
<div class="row" style="top:1479.2px;height:91.6px;background:#303030"></div>
<div class="th" style="top:1486.0px"><div style="background:linear-gradient(180deg,rgba(0,0,0,0),rgba(0,0,0,.72)),repeating-linear-gradient(90deg,rgba(0,0,0,.12) 0,rgba(0,0,0,0) 4.70px),repeating-linear-gradient(180deg,#b4b4b4 0,#f4f4f4 4.70px)"></div></div>
<svg style="left:2400.9px;top:1517.3px" width="33" height="21" viewBox="0 0 33 21"><path d="M.6 10.300C6 3.200 11 .600 16.300.600S26.800 3.200 32.200 10.300C26.800 17.400 21.600 20 16.300 20S6 17.400.600 10.300z" fill="#d6d6d6"/><circle cx="16.100" cy="9.700" r="6.900" fill="#2e2e2e"/><rect x="16.600" y="6.800" width="3.200" height="2.600" fill="#d6d6d6"/></svg>
<span id="tn3" class="t" style="left:2544.00px;top:1509.08px;font-size:26.5px;color:#e8e8e8;transform:scaleX(0.9057)">b</span>
<span id="ts3" class="t" style="left:2951.30px;top:1509.08px;font-size:26.5px;color:#e0e0e0;transform:scaleX(0.9722)">Ctrl+5</span>
<div style="left:2387px;top:1570.8px;width:639px;height:182.500px;background:#2a2a2a"></div>
<div style="left:2387px;top:1753.3px;width:639px;height:2.700px;background:#262626"></div>
<div style="left:2387px;top:1756px;width:639px;height:23px;background:#323232"></div>
<svg style="left:2770px;top:1764px" width="256" height="15" viewBox="0 0 256 15"><circle cx="18" cy="21.400" r="12.300" fill="none" stroke="#d6d6d6" stroke-width="2.600" stroke-dasharray="5.200 4.460" stroke-dashoffset="-2.100"/><rect x="76.200" y="11.300" width="31" height="10" rx="1.500" fill="#d6d6d6"/><circle cx="91.700" cy="22.500" r="9.300" fill="#323232"/><rect x="158.500" y="11.200" width="25.200" height="12" fill="none" stroke="#d6d6d6" stroke-width="2.500"/><rect x="169.900" y="14.200" width="2.400" height="3" fill="#d6d6d6"/><path d="M229.500 10.600h27v2.900h-27z" fill="#d6d6d6"/><path d="M237.800 11V8.400c0-1.600 1-2.400 2.400-2.400h5.400c1.400 0 2.400.8 2.400 2.400V11" fill="none" stroke="#d6d6d6" stroke-width="2.500"/><path d="M234 13.500h2.600v2H234zM252.500 13.500h2.600v2h-2.600z" fill="#d6d6d6"/></svg>
</body></html>
